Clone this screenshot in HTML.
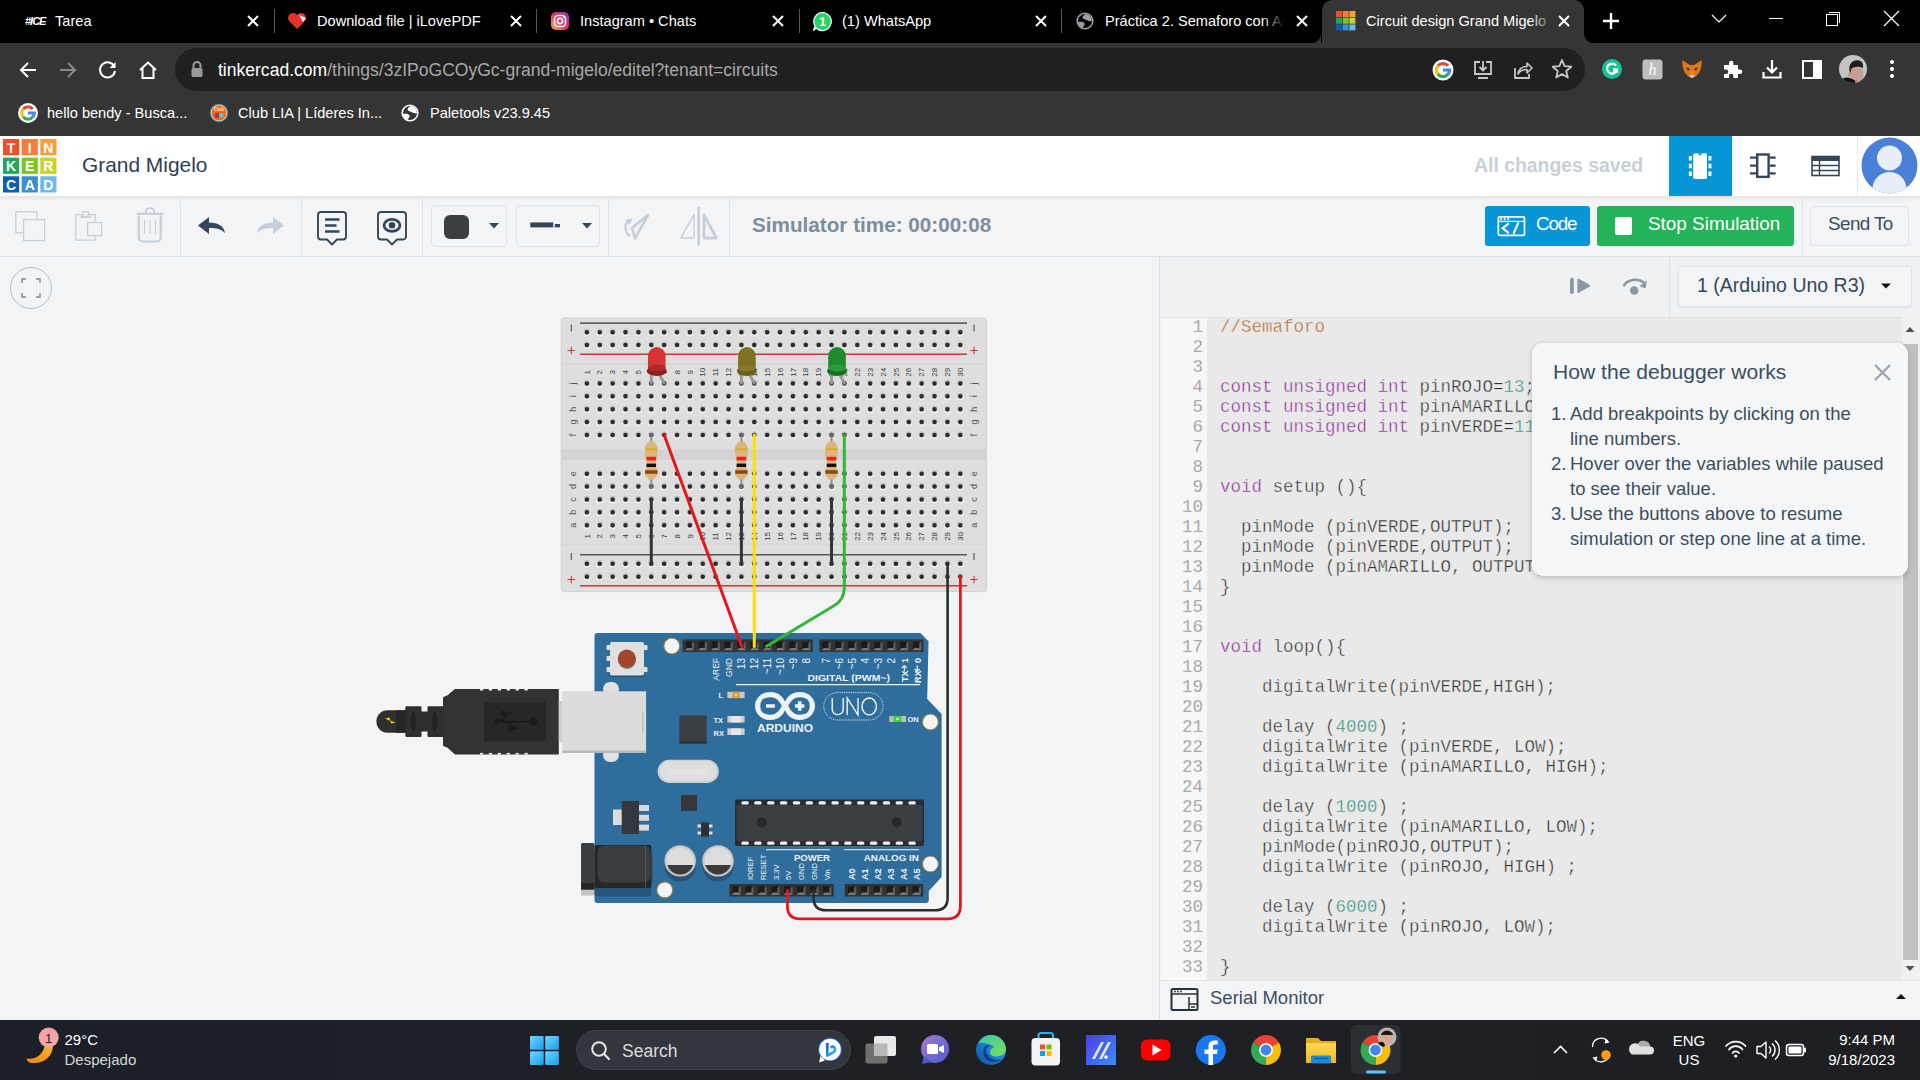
<!DOCTYPE html><html><head><meta charset="utf-8"><style>
*{box-sizing:border-box;margin:0;padding:0}
html,body{width:1920px;height:1080px;overflow:hidden;background:#f3f4f6;font-family:"Liberation Sans",sans-serif}
.a{position:absolute}
.tab{position:absolute;top:0;height:42px;color:#fff;font-size:14.6px;line-height:42px;white-space:nowrap;overflow:hidden}
.x{position:absolute;top:13px;width:16px;height:16px}
.sep{position:absolute;top:9px;width:1px;height:24px;background:#5a5a5a}
.mono{font-family:"Liberation Mono",monospace;-webkit-text-stroke:0.4px #e9e9e9}
</style></head><body>
<div class="a" style="left:0;top:0;width:1920px;height:43px;background:#000"></div>
<div class="a" style="left:0;top:43px;width:1920px;height:93px;background:#353535"></div>
<div class="tab" style="left:55px;width:184px">Tarea</div>
<div class="x" style="left:245px"><svg width="16" height="16" viewBox="0 0 16 16"><path d="M3 3L13 13M13 3L3 13" stroke="#fff" stroke-width="2"/></svg></div>
<div class="sep" style="left:274px"></div>
<div class="tab" style="left:317px;width:185px">Download file | iLovePDF</div>
<div class="x" style="left:508px"><svg width="16" height="16" viewBox="0 0 16 16"><path d="M3 3L13 13M13 3L3 13" stroke="#fff" stroke-width="2"/></svg></div>
<div class="sep" style="left:536px"></div>
<div class="tab" style="left:580px;width:184px">Instagram • Chats</div>
<div class="x" style="left:770px"><svg width="16" height="16" viewBox="0 0 16 16"><path d="M3 3L13 13M13 3L3 13" stroke="#fff" stroke-width="2"/></svg></div>
<div class="sep" style="left:799px"></div>
<div class="tab" style="left:842px;width:185px">(1) WhatsApp</div>
<div class="x" style="left:1033px"><svg width="16" height="16" viewBox="0 0 16 16"><path d="M3 3L13 13M13 3L3 13" stroke="#fff" stroke-width="2"/></svg></div>
<div class="sep" style="left:1061px"></div>
<div class="tab" style="left:1105px;width:183px">Práctica 2. Semaforo con Ar</div>
<div class="x" style="left:1294px"><svg width="16" height="16" viewBox="0 0 16 16"><path d="M3 3L13 13M13 3L3 13" stroke="#fff" stroke-width="2"/></svg></div>
<div class="a" style="left:1322px;top:0;width:262px;height:43px;background:#353535;border-radius:10px 10px 0 0"></div>
<div class="tab" style="left:1366px;width:180px">Circuit design Grand Migelo</div>
<div class="x" style="left:1556px"><svg width="16" height="16" viewBox="0 0 16 16"><path d="M3 3L13 13M13 3L3 13" stroke="#fff" stroke-width="2"/></svg></div>
<svg class="a" style="left:1601px;top:11px" width="20" height="20"><path d="M10 2V18M2 10H18" stroke="#fff" stroke-width="2.4"/></svg>
<svg class="a" style="left:1709px;top:10px" width="20" height="16"><path d="M3 5L10 12L17 5" stroke="#fff" fill="none" stroke-width="1.2"/></svg>
<div class="a" style="left:1769px;top:18px;width:14px;height:1px;background:#fff"></div>
<svg class="a" style="left:1825px;top:11px" width="16" height="16"><rect x="1.5" y="3.5" width="11" height="11" stroke="#fff" fill="none"/><path d="M4 1.5H14.5V12" stroke="#fff" fill="none"/></svg>
<svg class="a" style="left:1883px;top:10px" width="17" height="17"><path d="M1 1L16 16M16 1L1 16" stroke="#fff" stroke-width="1.2"/></svg>
<svg class="a" style="left:17px;top:59px" width="22" height="22"><path d="M19 11H4M11 4L4 11L11 18" stroke="#fff" fill="none" stroke-width="2"/></svg>
<svg class="a" style="left:57px;top:59px" width="22" height="22"><path d="M3 11H18M11 4L18 11L11 18" stroke="#8a8a8a" fill="none" stroke-width="2"/></svg>
<svg class="a" style="left:97px;top:59px" width="22" height="22"><path d="M17.5 8A7.5 7.5 0 1 0 18 12" stroke="#fff" fill="none" stroke-width="2"/><path d="M18.5 3V9H12.5Z" fill="#fff"/></svg>
<svg class="a" style="left:137px;top:59px" width="22" height="22"><path d="M3 11L11 3.5L19 11M5.5 9V19H16.5V9" stroke="#fff" fill="none" stroke-width="2"/></svg>
<div class="a" style="left:175px;top:48px;width:1410px;height:43px;background:#202020;border-radius:22px"></div>
<svg class="a" style="left:190px;top:60px" width="14" height="18"><path d="M3.5 8V5.5A3.5 3.5 0 0 1 10.5 5.5V8" stroke="#9a9a9a" stroke-width="2" fill="none"/><rect x="1.5" y="8" width="11" height="9" rx="1.5" fill="#9a9a9a"/></svg>
<div class="a" style="left:218px;top:58px;font-size:17.55px;line-height:24px;color:#fff;white-space:nowrap">tinkercad.com<span style="color:#a8a8a8">/things/3zIPoGCOyGc-grand-migelo/editel?tenant=circuits</span></div>
<div class="a" style="left:47px;top:103px;font-size:14.6px;line-height:20px;color:#fff;white-space:nowrap">hello bendy - Busca...</div>
<div class="a" style="left:238px;top:103px;font-size:14.6px;line-height:20px;color:#fff;white-space:nowrap">Club LIA | Líderes In...</div>
<div class="a" style="left:430px;top:103px;font-size:14.6px;line-height:20px;color:#fff;white-space:nowrap">Paletools v23.9.45</div>
<svg class="a" style="left:25px;top:13px" width="22" height="16"><text x="0" y="12" font-family="Liberation Sans" font-style="italic" font-weight="bold" font-size="11" fill="#fff" letter-spacing="-1">#ICE</text></svg>
<svg class="a" style="left:287px;top:11px" width="22" height="20"><path d="M10 18L2 10A4.5 4.5 0 0 1 10 4A4.5 4.5 0 0 1 18 10Z" fill="#e5322d"/><path d="M12 4L19 7L16 11Z" fill="#fff" opacity=".9"/></svg>
<svg class="a" style="left:550px;top:11px" width="20" height="20"><defs><linearGradient id="ig" x1="0" y1="1" x2="1" y2="0"><stop offset="0" stop-color="#fdb43a"/><stop offset=".5" stop-color="#e1306c"/><stop offset="1" stop-color="#833ab4"/></linearGradient></defs><rect x="1" y="1" width="18" height="18" rx="5" fill="url(#ig)"/><rect x="4.5" y="4.5" width="11" height="11" rx="3.5" fill="none" stroke="#fff" stroke-width="1.6"/><circle cx="10" cy="10" r="2.6" fill="none" stroke="#fff" stroke-width="1.6"/><circle cx="14" cy="6" r=".9" fill="#fff"/></svg>
<svg class="a" style="left:812px;top:11px" width="21" height="21"><path d="M10.5 1.5A9 9 0 1 1 4 17L1.5 19.5L3 15A9 9 0 0 1 10.5 1.5Z" fill="#25d366" stroke="#fff" stroke-width="1.2"/><text x="10.5" y="15" text-anchor="middle" font-family="Liberation Sans" font-weight="bold" font-size="12" fill="#fff">1</text></svg>
<svg class="a" style="left:1075px;top:11px" width="20" height="20"><circle cx="10" cy="10" r="8.6" fill="#9aa0a6"/><circle cx="10" cy="10" r="7" fill="#000"/><path d="M10.5 3C8 4.5 7 6 8 7.5C9 8.5 11 8.5 12.5 9.5C13.5 10.3 15 10.6 17 10A7 7 0 0 0 10.5 3Z" fill="#9aa0a6"/><path d="M3 11C5 10.5 8 10.5 9.3 12C10 13 9.5 14.5 8.3 15.5C7.5 16.2 7.8 16.8 7.5 17A7 7 0 0 1 3 11Z" fill="#9aa0a6"/></svg>
<svg class="a" style="left:1336px;top:11px" width="20" height="20"><rect x="0.0" y="0.0" width="6" height="6" fill="#f04e23"/><rect x="6.7" y="0.0" width="6" height="6" fill="#f57d38"/><rect x="13.4" y="0.0" width="6" height="6" fill="#f99d3a"/><rect x="0.0" y="6.7" width="6" height="6" fill="#1fa95a"/><rect x="6.7" y="6.7" width="6" height="6" fill="#7ec61f"/><rect x="13.4" y="6.7" width="6" height="6" fill="#c9d22c"/><rect x="0.0" y="13.4" width="6" height="6" fill="#0b5fb0"/><rect x="6.7" y="13.4" width="6" height="6" fill="#3b8ed0"/><rect x="13.4" y="13.4" width="6" height="6" fill="#6cb8e6"/></svg>
<div class="a" style="left:1530px;top:0;width:24px;height:42px;background:linear-gradient(90deg,rgba(53,53,53,0),#353535)"></div>
<svg class="a" style="left:1300px;top:30px" width="310" height="13" viewBox="1300 30 310 13"><path d="M1312 43A9 9 0 0 0 1321 34V43Z" fill="#353535"/><path d="M1584 34A9 9 0 0 0 1593 43H1584Z" fill="#353535"/></svg>
<div class="a" style="left:1262px;top:0;width:26px;height:42px;background:linear-gradient(90deg,rgba(0,0,0,0),#000 85%)"></div>
<svg class="a" style="left:1432px;top:59px" width="22" height="22"><circle cx="11" cy="11" r="10.5" fill="#fff"/><path d="M6.01 6.82A6.51 6.51 0 0 1 15.99 6.82" stroke="#ea4335" stroke-width="3.15" fill="none"/><path d="M6.01 15.18A6.51 6.51 0 0 1 6.16 6.64" stroke="#fbbc05" stroke-width="3.15" fill="none"/><path d="M16.13 15.01A6.51 6.51 0 0 1 5.87 15.01" stroke="#34a853" stroke-width="3.15" fill="none"/><path d="M17.51 10.77A6.51 6.51 0 0 1 15.99 15.18" stroke="#4285f4" stroke-width="3.15" fill="none"/><rect x="11.00" y="9.43" width="8.08" height="3.15" fill="#4285f4"/></svg>
<svg class="a" style="left:1472px;top:59px" width="22" height="22"><path d="M8 3H3V15H19V3H14" stroke="#c8c8c8" stroke-width="1.8" fill="none"/><path d="M11 2V11M7.5 8L11 11.5L14.5 8" stroke="#c8c8c8" stroke-width="1.8" fill="none"/><path d="M6 19H16" stroke="#c8c8c8" stroke-width="2"/></svg>
<svg class="a" style="left:1512px;top:59px" width="22" height="22"><path d="M3 9V19H17V15" stroke="#c8c8c8" stroke-width="1.8" fill="none"/><path d="M6 15C7 9 11 7.5 15 7.5V4L20 9L15 14V10.5C11 10.5 8 11.5 6 15Z" stroke="#c8c8c8" stroke-width="1.6" fill="none" stroke-linejoin="round"/></svg>
<svg class="a" style="left:1551px;top:58px" width="22" height="22"><path d="M11 2L13.6 8.2L20.3 8.7L15.2 13L16.8 19.6L11 16L5.2 19.6L6.8 13L1.7 8.7L8.4 8.2Z" stroke="#c8c8c8" stroke-width="1.8" fill="none" stroke-linejoin="round"/></svg>
<svg class="a" style="left:1601px;top:58px" width="22" height="22"><circle cx="11" cy="11" r="10" fill="#15c39a"/><path d="M15 7.5A5 5 0 1 0 16 11.5H12" stroke="#fff" stroke-width="2.2" fill="none"/><path d="M13 10V14H17" stroke="#fff" stroke-width="2" fill="none"/></svg>
<svg class="a" style="left:1642px;top:59px" width="21" height="21"><rect x="0.5" y="0.5" width="20" height="20" rx="3" fill="#bdbdbd"/><text x="10.5" y="16" text-anchor="middle" font-family="Liberation Serif" font-style="italic" font-size="16" fill="#fff">h</text></svg>
<svg class="a" style="left:1681px;top:58px" width="22" height="22"><path d="M1 2L9 7H13L21 2L20 10L18 15L14 19H8L4 15L2 10Z" fill="#e2761b"/><path d="M8 12L11 19L14 12L11 14Z" fill="#f6851b"/><path d="M5 9L9 11L7 13ZM17 9L13 11L15 13Z" fill="#233447"/><path d="M8 17H14L12 20H10Z" fill="#d7c1b3"/></svg>
<svg class="a" style="left:1721px;top:58px" width="22" height="22"><path d="M3 7H8V5A2.2 2.2 0 0 1 12.4 5V7H17V11.5H19A2.2 2.2 0 0 1 19 16H17V20H12.4V18A2.2 2.2 0 0 0 8 18V20H3V16H5A2.2 2.2 0 0 0 5 11.5H3Z" fill="#fff"/></svg>
<svg class="a" style="left:1761px;top:58px" width="22" height="22"><path d="M11 2V14M6 9.5L11 14.5L16 9.5" stroke="#fff" stroke-width="2.2" fill="none"/><path d="M2.5 14V19.5H19.5V14" stroke="#fff" stroke-width="2.2" fill="none"/></svg>
<svg class="a" style="left:1802px;top:60px" width="20" height="19"><rect x="1" y="1" width="18" height="17" stroke="#fff" stroke-width="2" fill="none"/><rect x="11" y="1" width="8" height="17" fill="#fff"/></svg>
<svg class="a" style="left:1839px;top:55px" width="28" height="28"><defs><clipPath id="av"><circle cx="14" cy="14" r="14"/></clipPath></defs><g clip-path="url(#av)"><rect width="28" height="28" fill="#c4c4c2"/><ellipse cx="17.5" cy="18.5" rx="7" ry="8.2" fill="#c99f95"/><ellipse cx="10.8" cy="19.5" rx="1.8" ry="2.6" fill="#c39888"/><path d="M10.5 16C9.5 8 14 5 18.5 5.2C23 5.4 24.5 8.5 24 13C21 11 15 11.5 12.5 13.5L11.5 18Z" fill="#1c1c1c"/><path d="M2 25C5 21.5 10 21.5 16 25.5L17 30H2ZM21 24C24 22.5 28 24 29 27V30H20Z" fill="#131313"/><rect x="16.5" y="25.5" width="4" height="5" fill="#e0426c"/><ellipse cx="21.3" cy="26.5" rx="3.8" ry="3.4" fill="#c79f8f"/></g></svg>
<svg class="a" style="left:1887px;top:58px" width="10" height="22"><circle cx="5" cy="4" r="2" fill="#fff"/><circle cx="5" cy="11" r="2" fill="#fff"/><circle cx="5" cy="18" r="2" fill="#fff"/></svg>
<svg class="a" style="left:18px;top:103px" width="20" height="20"><circle cx="10" cy="10" r="10" fill="#fff"/><path d="M5.25 6.01A6.2 6.2 0 0 1 14.75 6.01" stroke="#ea4335" stroke-width="3.0" fill="none"/><path d="M5.25 13.99A6.2 6.2 0 0 1 5.39 5.85" stroke="#fbbc05" stroke-width="3.0" fill="none"/><path d="M14.89 13.82A6.2 6.2 0 0 1 5.11 13.82" stroke="#34a853" stroke-width="3.0" fill="none"/><path d="M16.20 9.78A6.2 6.2 0 0 1 14.75 13.99" stroke="#4285f4" stroke-width="3.0" fill="none"/><rect x="10.00" y="8.50" width="7.70" height="3.00" fill="#4285f4"/></svg>
<svg class="a" style="left:209px;top:103px" width="20" height="20"><circle cx="10" cy="10" r="9.6" fill="#1f5fb0"/><circle cx="10" cy="10" r="8.4" fill="#f6d36a"/><circle cx="10" cy="10" r="7.4" fill="#f06a1a"/><text x="10" y="8.2" text-anchor="middle" font-size="4.6" font-weight="bold" font-family="Liberation Sans" fill="#ffe0d0">Club</text><rect x="6.3" y="10" width="1.8" height="5" fill="#7b2a8f"/><rect x="8.6" y="9.6" width="1.4" height="5.2" fill="#e01010"/><circle cx="12.2" cy="12.6" r="2.3" fill="#4cc8ef"/></svg>
<svg class="a" style="left:400px;top:103px" width="20" height="20"><circle cx="10" cy="10" r="8.6" fill="#fff"/><circle cx="10" cy="10" r="7" fill="#353535"/><path d="M10.5 3C8 4.5 7 6 8 7.5C9 8.5 11 8.5 12.5 9.5C13.5 10.3 15 10.6 17 10A7 7 0 0 0 10.5 3Z" fill="#fff"/><path d="M3 11C5 10.5 8 10.5 9.3 12C10 13 9.5 14.5 8.3 15.5C7.5 16.2 7.8 16.8 7.5 17A7 7 0 0 1 3 11Z" fill="#fff"/></svg>
<div class="a" style="left:0;top:136px;width:1920px;height:60px;background:#fff"></div>
<div class="a" style="left:0;top:196px;width:1920px;height:61px;background:#f3f4f6;border-bottom:1px solid #dfe3e8"></div>
<div class="a" style="left:0;top:196px;width:1920px;height:5px;background:linear-gradient(rgba(0,0,0,.07),rgba(0,0,0,0))"></div>
<div class="a" style="left:1159px;top:257px;width:761px;height:763px;background:#f0f1f3;border-left:1px solid #dcdfe4"></div>
<div class="a" style="left:1160px;top:257px;width:760px;height:61px;background:#f0f1f3"></div>
<div class="a" style="left:1669px;top:257px;width:1px;height:61px;background:#dfe3e8"></div>
<svg class="a" style="left:1560px;top:265px" width="100" height="40" viewBox="1560 265 100 40"><rect x="1570" y="277.7" width="3.8" height="16.2" rx="1.9" fill="#8c99a5"/><path d="M1578.5 278.5L1589.5 284.8A1.2 1.2 0 0 1 1589.5 286.8L1578.5 293.1A1 1 0 0 1 1577.4 292.2V279.4A1 1 0 0 1 1578.5 278.5Z" fill="#8c99a5"/><path d="M1623.5 286.2A13 11 0 0 1 1644 282.5" fill="none" stroke="#8c99a5" stroke-width="2.6"/><path d="M1646.8 280.5L1645.6 288.6L1639.5 286.2Z" fill="#8c99a5"/><circle cx="1634.2" cy="290.5" r="4.3" fill="#8c99a5"/></svg>
<div class="a" style="left:1678px;top:266px;width:234px;height:41px;background:#f3f4f6;border:1px solid #e1e5ea;border-radius:3px;box-shadow:0 1px 2px rgba(0,0,0,.06)"></div>
<div class="a" style="left:1697px;top:272px;font-size:19.5px;line-height:26px;color:#34475a;white-space:nowrap">1 (Arduino Uno R3)</div>
<svg class="a" style="left:1880px;top:282px" width="12" height="8"><path d="M1 1.5H11L6 6.5Z" fill="#111"/></svg>
<div class="a" style="left:1160px;top:317px;width:742px;height:1px;background:#e0e3e7"></div>
<div class="a" style="left:1161px;top:318px;width:46px;height:662px;background:#f7f7f7"></div>
<div class="a" style="left:1207px;top:318px;width:695px;height:662px;background:#e9e9e9"></div>
<div class="a" style="left:1902px;top:318px;width:18px;height:662px;background:#f1f1f1"></div>
<div class="a" style="left:1903px;top:344px;width:15px;height:616px;background:#c1c1c1"></div>
<svg class="a" style="left:1904px;top:324px" width="12" height="10"><path d="M1.5 8H10.5L6 3Z" fill="#505050"/></svg>
<svg class="a" style="left:1904px;top:964px" width="12" height="10"><path d="M1.5 2H10.5L6 7Z" fill="#505050"/></svg>
<div class="a" style="left:1160px;top:980px;width:760px;height:40px;background:#f3f4f6;border-top:1px solid #e4e7eb"></div>
<svg class="a" style="left:1170px;top:987px" width="30" height="26"><rect x="1.5" y="2" width="26" height="21" rx="1.5" fill="none" stroke="#26313b" stroke-width="2"/><path d="M1.5 7H27.5" stroke="#26313b" stroke-width="1.5"/><circle cx="5" cy="4.5" r=".9" fill="#26313b"/><circle cx="8" cy="4.5" r=".9" fill="#26313b"/><circle cx="11" cy="4.5" r=".9" fill="#26313b"/><path d="M19 10V23M19 17H27.5M21 20H25" stroke="#26313b" stroke-width="1.5"/></svg>
<div class="a" style="left:1210px;top:985px;font-size:18.5px;line-height:26px;color:#3c4d5e;white-space:nowrap">Serial Monitor</div>
<svg class="a" style="left:1894px;top:991px" width="14" height="10"><path d="M2 8H12L7 3Z" fill="#111"/></svg>
<div class="a mono" style="left:1160px;top:317px;width:43px;text-align:right;font-size:17.5px;line-height:20px;color:#8c8c8c">1</div>
<div class="a mono" style="left:1220px;top:317px;font-size:17.5px;line-height:20px;white-space:pre"><span style="color:#b5651d">//Semaforo</span></div>
<div class="a mono" style="left:1160px;top:337px;width:43px;text-align:right;font-size:17.5px;line-height:20px;color:#8c8c8c">2</div>
<div class="a mono" style="left:1160px;top:357px;width:43px;text-align:right;font-size:17.5px;line-height:20px;color:#8c8c8c">3</div>
<div class="a mono" style="left:1160px;top:377px;width:43px;text-align:right;font-size:17.5px;line-height:20px;color:#8c8c8c">4</div>
<div class="a mono" style="left:1220px;top:377px;font-size:17.5px;line-height:20px;white-space:pre"><span style="color:#8a2b9a">const</span><span style="color:#2e2e2e"> </span><span style="color:#8a2b9a">unsigned</span><span style="color:#2e2e2e"> </span><span style="color:#8a2b9a">int</span><span style="color:#2e2e2e"> pinROJO=</span><span style="color:#2a8f7c">13</span><span style="color:#2e2e2e">;</span></div>
<div class="a mono" style="left:1160px;top:397px;width:43px;text-align:right;font-size:17.5px;line-height:20px;color:#8c8c8c">5</div>
<div class="a mono" style="left:1220px;top:397px;font-size:17.5px;line-height:20px;white-space:pre"><span style="color:#8a2b9a">const</span><span style="color:#2e2e2e"> </span><span style="color:#8a2b9a">unsigned</span><span style="color:#2e2e2e"> </span><span style="color:#8a2b9a">int</span><span style="color:#2e2e2e"> pinAMARILLO=</span><span style="color:#2a8f7c">12</span><span style="color:#2e2e2e">;</span></div>
<div class="a mono" style="left:1160px;top:417px;width:43px;text-align:right;font-size:17.5px;line-height:20px;color:#8c8c8c">6</div>
<div class="a mono" style="left:1220px;top:417px;font-size:17.5px;line-height:20px;white-space:pre"><span style="color:#8a2b9a">const</span><span style="color:#2e2e2e"> </span><span style="color:#8a2b9a">unsigned</span><span style="color:#2e2e2e"> </span><span style="color:#8a2b9a">int</span><span style="color:#2e2e2e"> pinVERDE=</span><span style="color:#2a8f7c">11</span><span style="color:#2e2e2e">;</span></div>
<div class="a mono" style="left:1160px;top:437px;width:43px;text-align:right;font-size:17.5px;line-height:20px;color:#8c8c8c">7</div>
<div class="a mono" style="left:1160px;top:457px;width:43px;text-align:right;font-size:17.5px;line-height:20px;color:#8c8c8c">8</div>
<div class="a mono" style="left:1160px;top:477px;width:43px;text-align:right;font-size:17.5px;line-height:20px;color:#8c8c8c">9</div>
<div class="a mono" style="left:1220px;top:477px;font-size:17.5px;line-height:20px;white-space:pre"><span style="color:#8a2b9a">void</span><span style="color:#2e2e2e"> setup (){</span></div>
<div class="a mono" style="left:1160px;top:497px;width:43px;text-align:right;font-size:17.5px;line-height:20px;color:#8c8c8c">10</div>
<div class="a mono" style="left:1160px;top:517px;width:43px;text-align:right;font-size:17.5px;line-height:20px;color:#8c8c8c">11</div>
<div class="a mono" style="left:1220px;top:517px;font-size:17.5px;line-height:20px;white-space:pre"><span style="color:#2e2e2e">  pinMode (pinVERDE,OUTPUT);</span></div>
<div class="a mono" style="left:1160px;top:537px;width:43px;text-align:right;font-size:17.5px;line-height:20px;color:#8c8c8c">12</div>
<div class="a mono" style="left:1220px;top:537px;font-size:17.5px;line-height:20px;white-space:pre"><span style="color:#2e2e2e">  pinMode (pinVERDE,OUTPUT);</span></div>
<div class="a mono" style="left:1160px;top:557px;width:43px;text-align:right;font-size:17.5px;line-height:20px;color:#8c8c8c">13</div>
<div class="a mono" style="left:1220px;top:557px;font-size:17.5px;line-height:20px;white-space:pre"><span style="color:#2e2e2e">  pinMode (pinAMARILLO, OUTPUT);</span></div>
<div class="a mono" style="left:1160px;top:577px;width:43px;text-align:right;font-size:17.5px;line-height:20px;color:#8c8c8c">14</div>
<div class="a mono" style="left:1220px;top:577px;font-size:17.5px;line-height:20px;white-space:pre"><span style="color:#2e2e2e">}</span></div>
<div class="a mono" style="left:1160px;top:597px;width:43px;text-align:right;font-size:17.5px;line-height:20px;color:#8c8c8c">15</div>
<div class="a mono" style="left:1160px;top:617px;width:43px;text-align:right;font-size:17.5px;line-height:20px;color:#8c8c8c">16</div>
<div class="a mono" style="left:1160px;top:637px;width:43px;text-align:right;font-size:17.5px;line-height:20px;color:#8c8c8c">17</div>
<div class="a mono" style="left:1220px;top:637px;font-size:17.5px;line-height:20px;white-space:pre"><span style="color:#8a2b9a">void</span><span style="color:#2e2e2e"> loop(){</span></div>
<div class="a mono" style="left:1160px;top:657px;width:43px;text-align:right;font-size:17.5px;line-height:20px;color:#8c8c8c">18</div>
<div class="a mono" style="left:1160px;top:677px;width:43px;text-align:right;font-size:17.5px;line-height:20px;color:#8c8c8c">19</div>
<div class="a mono" style="left:1220px;top:677px;font-size:17.5px;line-height:20px;white-space:pre"><span style="color:#2e2e2e">    digitalWrite(pinVERDE,HIGH);</span></div>
<div class="a mono" style="left:1160px;top:697px;width:43px;text-align:right;font-size:17.5px;line-height:20px;color:#8c8c8c">20</div>
<div class="a mono" style="left:1160px;top:717px;width:43px;text-align:right;font-size:17.5px;line-height:20px;color:#8c8c8c">21</div>
<div class="a mono" style="left:1220px;top:717px;font-size:17.5px;line-height:20px;white-space:pre"><span style="color:#2e2e2e">    delay (</span><span style="color:#2a8f7c">4000</span><span style="color:#2e2e2e">) ;</span></div>
<div class="a mono" style="left:1160px;top:737px;width:43px;text-align:right;font-size:17.5px;line-height:20px;color:#8c8c8c">22</div>
<div class="a mono" style="left:1220px;top:737px;font-size:17.5px;line-height:20px;white-space:pre"><span style="color:#2e2e2e">    digitalWrite (pinVERDE, LOW);</span></div>
<div class="a mono" style="left:1160px;top:757px;width:43px;text-align:right;font-size:17.5px;line-height:20px;color:#8c8c8c">23</div>
<div class="a mono" style="left:1220px;top:757px;font-size:17.5px;line-height:20px;white-space:pre"><span style="color:#2e2e2e">    digitalWrite (pinAMARILLO, HIGH);</span></div>
<div class="a mono" style="left:1160px;top:777px;width:43px;text-align:right;font-size:17.5px;line-height:20px;color:#8c8c8c">24</div>
<div class="a mono" style="left:1160px;top:797px;width:43px;text-align:right;font-size:17.5px;line-height:20px;color:#8c8c8c">25</div>
<div class="a mono" style="left:1220px;top:797px;font-size:17.5px;line-height:20px;white-space:pre"><span style="color:#2e2e2e">    delay (</span><span style="color:#2a8f7c">1000</span><span style="color:#2e2e2e">) ;</span></div>
<div class="a mono" style="left:1160px;top:817px;width:43px;text-align:right;font-size:17.5px;line-height:20px;color:#8c8c8c">26</div>
<div class="a mono" style="left:1220px;top:817px;font-size:17.5px;line-height:20px;white-space:pre"><span style="color:#2e2e2e">    digitalWrite (pinAMARILLO, LOW);</span></div>
<div class="a mono" style="left:1160px;top:837px;width:43px;text-align:right;font-size:17.5px;line-height:20px;color:#8c8c8c">27</div>
<div class="a mono" style="left:1220px;top:837px;font-size:17.5px;line-height:20px;white-space:pre"><span style="color:#2e2e2e">    pinMode(pinROJO,OUTPUT);</span></div>
<div class="a mono" style="left:1160px;top:857px;width:43px;text-align:right;font-size:17.5px;line-height:20px;color:#8c8c8c">28</div>
<div class="a mono" style="left:1220px;top:857px;font-size:17.5px;line-height:20px;white-space:pre"><span style="color:#2e2e2e">    digitalWrite (pinROJO, HIGH) ;</span></div>
<div class="a mono" style="left:1160px;top:877px;width:43px;text-align:right;font-size:17.5px;line-height:20px;color:#8c8c8c">29</div>
<div class="a mono" style="left:1160px;top:897px;width:43px;text-align:right;font-size:17.5px;line-height:20px;color:#8c8c8c">30</div>
<div class="a mono" style="left:1220px;top:897px;font-size:17.5px;line-height:20px;white-space:pre"><span style="color:#2e2e2e">    delay (</span><span style="color:#2a8f7c">6000</span><span style="color:#2e2e2e">) ;</span></div>
<div class="a mono" style="left:1160px;top:917px;width:43px;text-align:right;font-size:17.5px;line-height:20px;color:#8c8c8c">31</div>
<div class="a mono" style="left:1220px;top:917px;font-size:17.5px;line-height:20px;white-space:pre"><span style="color:#2e2e2e">    digitalWrite (pinROJO, LOW);</span></div>
<div class="a mono" style="left:1160px;top:937px;width:43px;text-align:right;font-size:17.5px;line-height:20px;color:#8c8c8c">32</div>
<div class="a mono" style="left:1160px;top:957px;width:43px;text-align:right;font-size:17.5px;line-height:20px;color:#8c8c8c">33</div>
<div class="a mono" style="left:1220px;top:957px;font-size:17.5px;line-height:20px;white-space:pre"><span style="color:#2e2e2e">}</span></div>
<div class="a" style="left:1532px;top:343px;width:376px;height:233px;background:#f5f6f8;border-radius:11px;box-shadow:0 2px 6px rgba(0,0,0,.18)"></div>
<div class="a" style="left:1553px;top:358px;font-size:21.1px;line-height:28px;color:#3b4f5c;white-space:nowrap">How the debugger works</div>
<svg class="a" style="left:1873px;top:363px" width="19" height="19"><path d="M2 2L17 17M17 2L2 17" stroke="#98a3ad" stroke-width="2.2"/></svg>
<div class="a" style="left:1551px;top:401px;font-size:18.5px;line-height:25px;color:#3b4f5c;white-space:nowrap">1.</div>
<div class="a" style="left:1570px;top:401px;font-size:18.5px;line-height:25px;color:#3b4f5c;white-space:nowrap">Add breakpoints by clicking on the<br>line numbers.</div>
<div class="a" style="left:1551px;top:451px;font-size:18.5px;line-height:25px;color:#3b4f5c;white-space:nowrap">2.</div>
<div class="a" style="left:1570px;top:451px;font-size:18.5px;line-height:25px;color:#3b4f5c;white-space:nowrap">Hover over the variables while paused<br>to see their value.</div>
<div class="a" style="left:1551px;top:501px;font-size:18.5px;line-height:25px;color:#3b4f5c;white-space:nowrap">3.</div>
<div class="a" style="left:1570px;top:501px;font-size:18.5px;line-height:25px;color:#3b4f5c;white-space:nowrap">Use the buttons above to resume<br>simulation or step one line at a time.</div>
<svg class="a" style="left:3px;top:139px" width="55" height="55"><rect x="0.00" y="0.00" width="16.2" height="16.2" fill="#f04e23"/><text x="8.10" y="13.60" text-anchor="middle" font-family="Liberation Sans" font-weight="bold" font-size="14" fill="#fff">T</text><rect x="18.65" y="0.00" width="16.2" height="16.2" fill="#f57d38"/><text x="26.75" y="13.60" text-anchor="middle" font-family="Liberation Sans" font-weight="bold" font-size="14" fill="#fff">I</text><rect x="37.30" y="0.00" width="16.2" height="16.2" fill="#f99d3a"/><text x="45.40" y="13.60" text-anchor="middle" font-family="Liberation Sans" font-weight="bold" font-size="14" fill="#fff">N</text><rect x="0.00" y="18.65" width="16.2" height="16.2" fill="#1fa95a"/><text x="8.10" y="32.25" text-anchor="middle" font-family="Liberation Sans" font-weight="bold" font-size="14" fill="#fff">K</text><rect x="18.65" y="18.65" width="16.2" height="16.2" fill="#7ec61f"/><text x="26.75" y="32.25" text-anchor="middle" font-family="Liberation Sans" font-weight="bold" font-size="14" fill="#fff">E</text><rect x="37.30" y="18.65" width="16.2" height="16.2" fill="#c9d22c"/><text x="45.40" y="32.25" text-anchor="middle" font-family="Liberation Sans" font-weight="bold" font-size="14" fill="#fff">R</text><rect x="0.00" y="37.30" width="16.2" height="16.2" fill="#0b5fb0"/><text x="8.10" y="50.90" text-anchor="middle" font-family="Liberation Sans" font-weight="bold" font-size="14" fill="#fff">C</text><rect x="18.65" y="37.30" width="16.2" height="16.2" fill="#3b8ed0"/><text x="26.75" y="50.90" text-anchor="middle" font-family="Liberation Sans" font-weight="bold" font-size="14" fill="#fff">A</text><rect x="37.30" y="37.30" width="16.2" height="16.2" fill="#6cb8e6"/><text x="45.40" y="50.90" text-anchor="middle" font-family="Liberation Sans" font-weight="bold" font-size="14" fill="#fff">D</text></svg>
<div class="a" style="left:82px;top:151px;font-size:20.9px;line-height:28px;color:#2d3e50;white-space:nowrap">Grand Migelo</div>
<div class="a" style="left:1474px;top:152px;font-size:19.4px;line-height:26px;color:#c7d0d9;white-space:nowrap;font-weight:bold">All changes saved</div>
<div class="a" style="left:1669px;top:136px;width:63px;height:60px;background:#0696d7"></div>
<svg class="a" style="left:1680px;top:148px" width="40" height="36" viewBox="1680 148 40 36"><rect x="1693.2" y="153.3" width="13.8" height="25.6" rx="1.5" fill="#fff"/><path d="M1697.5 153.3H1702.7L1700.1 155.8Z" fill="#0696d7"/><path d="M1688.9 156H1691.8V160.6H1688.9ZM1688.9 163.8H1691.8V168.2H1688.9ZM1688.9 171.6H1691.8V176H1688.9ZM1708.5 156H1711.4V160.6H1708.5ZM1708.5 163.8H1711.4V168.2H1708.5ZM1708.5 171.6H1711.4V176H1708.5Z" fill="#fff"/></svg>
<svg class="a" style="left:1745px;top:148px" width="36" height="36" viewBox="1745 148 36 36"><rect x="1757.2" y="154.5" width="11.4" height="22.4" fill="none" stroke="#34475a" stroke-width="2.4"/><path d="M1750 157.7H1756M1750 165.7H1756M1750 173.3H1756M1769.8 157.7H1775.6M1769.8 165.7H1775.6M1769.8 173.3H1775.6" stroke="#34475a" stroke-width="2.3"/></svg>
<svg class="a" style="left:1811px;top:155px" width="30" height="22"><rect x="1" y="1.5" width="27" height="19" fill="none" stroke="#34475a" stroke-width="1.6"/><rect x="1" y="1" width="27" height="5" fill="#34475a"/><path d="M1 10.5H28M1 15.5H28M8.5 6V20.5" stroke="#34475a" stroke-width="1.4"/></svg>
<div class="a" style="left:1857px;top:136px;width:1px;height:60px;background:#e6e9ed"></div>
<svg class="a" style="left:1861px;top:137px" width="57" height="57"><defs><clipPath id="avc"><circle cx="28.5" cy="28.5" r="28"/></clipPath></defs><circle cx="28.5" cy="28.5" r="28" fill="#4a80d6"/><g clip-path="url(#avc)"><circle cx="28.5" cy="21" r="12.5" fill="#e8eef8"/><ellipse cx="28.5" cy="52" rx="17" ry="17" fill="#e8eef8"/></g></svg>
<svg class="a" style="left:0;top:196px" width="300" height="60" viewBox="0 196 300 60"><rect x="15.8" y="211.8" width="21" height="21" fill="none" stroke="#c5cfd9" stroke-width="1.3"/><rect x="23.6" y="219.6" width="21" height="21" fill="#f3f4f6" stroke="#c5cfd9" stroke-width="1.3"/><path d="M82.5 214.6H75.8V240.2H95V214.6H88.5" fill="none" stroke="#c5cfd9" stroke-width="1.3"/><rect x="82.8" y="211.8" width="5.6" height="5" fill="none" stroke="#c5cfd9" stroke-width="1.3"/><path d="M80.5 216.8H90.8" stroke="#c5cfd9" stroke-width="2"/><rect x="87.6" y="222.6" width="14" height="13" fill="#f3f4f6" stroke="#c5cfd9" stroke-width="1.3"/><path d="M136.7 213.8H163.3" stroke="#c5cfd9" stroke-width="2.2"/><path d="M146 213V211A3 3 0 0 1 149 208.3H151A3 3 0 0 1 154 211V213" fill="none" stroke="#c5cfd9" stroke-width="1.6"/><path d="M138.8 215.5V237.5A4 4 0 0 0 142.8 241.5H156.7A4 4 0 0 0 160.7 237.5V215.5" fill="none" stroke="#c5cfd9" stroke-width="2.2"/><path d="M144.5 220V234M150 220V234M155.5 220V234" stroke="#c5cfd9" stroke-width="1.1"/><path d="M198 225.5L209 217V222.5C218 222.5 224 226 225 233C221 229 217 228 209 228V234Z" fill="#34475a"/><path d="M284 225.5L273 217V222.5C264 222.5 258 226 257 233C261 229 265 228 273 228V234Z" fill="#c5cfd9"/></svg>
<svg class="a" style="left:300px;top:196px" width="120" height="60" viewBox="300 196 120 60"><path d="M321 212H343A3 3 0 0 1 346 215V236.5A3 3 0 0 1 343 239.5H337L332 244.5L327 239.5H321A3 3 0 0 1 318 236.5V215A3 3 0 0 1 321 212Z" fill="none" stroke="#34475a" stroke-width="1.9"/><path d="M325 219.5H339.5M325 225.5H336.5M325 231.5H339.5" stroke="#34475a" stroke-width="2.3"/><path d="M381 212H403A3 3 0 0 1 406 215V236.5A3 3 0 0 1 403 239.5H397L392 244.5L387 239.5H381A3 3 0 0 1 378 236.5V215A3 3 0 0 1 381 212Z" fill="none" stroke="#34475a" stroke-width="1.9"/><ellipse cx="392" cy="225.3" rx="8" ry="6" fill="none" stroke="#34475a" stroke-width="2.8"/><circle cx="392" cy="225.3" r="3.3" fill="#34475a"/></svg>
<div class="a" style="left:180px;top:197px;width:1px;height:59px;background:#dfe3e8"></div>
<div class="a" style="left:301px;top:197px;width:1px;height:59px;background:#dfe3e8"></div>
<div class="a" style="left:422px;top:197px;width:1px;height:59px;background:#dfe3e8"></div>
<div class="a" style="left:608px;top:197px;width:1px;height:59px;background:#dfe3e8"></div>
<div class="a" style="left:729px;top:197px;width:1px;height:59px;background:#dfe3e8"></div>
<div class="a" style="left:431px;top:205px;width:76px;height:42px;border:1px solid #e0e4e9;border-radius:4px"></div>
<div class="a" style="left:444px;top:215px;width:25px;height:24px;background:#3b3e42;border-radius:6px"></div>
<svg class="a" style="left:488px;top:222px" width="12" height="8"><path d="M1 1H11L6 6.5Z" fill="#34475a"/></svg>
<div class="a" style="left:516px;top:205px;width:84px;height:42px;border:1px solid #e0e4e9;border-radius:4px"></div>
<svg class="a" style="left:529px;top:220px" width="34" height="10"><rect x="1.3" y="2.4" width="23" height="5" fill="#34475a"/><rect x="25.8" y="4" width="5.2" height="3.4" fill="#34475a"/></svg>
<svg class="a" style="left:581px;top:222px" width="12" height="8"><path d="M1 1H11L6 6.5Z" fill="#34475a"/></svg>
<svg class="a" style="left:600px;top:196px" width="140" height="60" viewBox="600 196 140 60"><path d="M648 215L635 238.5L632 228Z" fill="none" stroke="#c5cfd9" stroke-width="2.6" stroke-linejoin="round"/><path d="M628 221.5C624 225 624.5 232 630 236" fill="none" stroke="#c5cfd9" stroke-width="2.2"/><path d="M625.5 219.5L633 218.5L629 225Z" fill="#c5cfd9"/><path d="M694 214.5V238H680.8Z" fill="none" stroke="#c5cfd9" stroke-width="1.4" stroke-linejoin="round"/><path d="M698.7 208V244.5" stroke="#c5cfd9" stroke-width="2.6" stroke-linecap="round"/><path d="M704 215V238H716.5Z" fill="none" stroke="#c5cfd9" stroke-width="2.8" stroke-linejoin="round"/></svg>
<div class="a" style="left:752px;top:210px;font-size:20.7px;line-height:30px;color:#7d8d9c;font-weight:bold;white-space:nowrap">Simulator time: 00:00:08</div>
<div class="a" style="left:1485px;top:206px;width:105px;height:40px;background:#0696d7;border-radius:3px"></div>
<svg class="a" style="left:1490px;top:210px" width="40" height="32" viewBox="1490 210 40 32"><rect x="1498.3" y="216.8" width="26.2" height="18.6" rx="1.6" fill="none" stroke="#fff" stroke-width="1.7"/><path d="M1498 221.4H1524.8" stroke="#fff" stroke-width="1.3"/><circle cx="1501.2" cy="219.1" r="1.05" fill="#fff"/><circle cx="1504.7" cy="219.1" r="1.05" fill="#fff"/><circle cx="1508.2" cy="219.1" r="1.05" fill="#fff"/><path d="M1508.2 223.8L1502.6 228.2L1508.2 232.6M1518.2 223L1513.8 233.2" stroke="#fff" stroke-width="2.1" fill="none" stroke-linecap="round"/></svg>
<div class="a" style="left:1536px;top:210px;font-size:18.9px;line-height:28px;color:#fff;white-space:nowrap;letter-spacing:-1.2px">Code</div>
<div class="a" style="left:1597px;top:206px;width:197px;height:40px;background:#25b35a;border-radius:3px"></div>
<div class="a" style="left:1615px;top:217px;width:17px;height:17.5px;background:#fff;border-radius:2px"></div>
<div class="a" style="left:1648px;top:210px;font-size:18.9px;line-height:28px;color:#fff;white-space:nowrap">Stop Simulation</div>
<div class="a" style="left:1802px;top:196px;width:1px;height:60px;background:#dfe3e8"></div>
<div class="a" style="left:1810px;top:206px;width:99px;height:40px;border:1px solid #dfe3e8;border-radius:3px"></div>
<div class="a" style="left:1828px;top:210px;font-size:18.9px;line-height:28px;color:#3c4d5e;white-space:nowrap;letter-spacing:-0.6px">Send To</div>
<svg class="a" style="left:9px;top:266px" width="44" height="44"><circle cx="22" cy="22" r="20.5" fill="#f3f4f6" stroke="#b5bcc4" stroke-width="1"/><path d="M13 17V13H17M27 13H31V17M31 27V31H27M17 31H13V27" fill="none" stroke="#7d8894" stroke-width="1.4"/></svg>
<svg class="a" style="left:0;top:0" width="1160" height="1020" viewBox="0 0 1160 1020"><rect x="561.2" y="318" width="425.3" height="273.6" rx="3" fill="#dedede" stroke="#d2d2d2" stroke-width="1"/><path d="M561.5 364.3H986.2M561.5 544.2H986.2" stroke="#d3d3d3" stroke-width="1"/><rect x="561.5" y="449.2" width="425" height="10.8" fill="#d3d3d3"/><path d="M580 323.2H967" stroke="#333" stroke-width="1.3"/><path d="M580 354.2H967" stroke="#c9363b" stroke-width="1.6"/><path d="M580 554.7H967" stroke="#585858" stroke-width="1.6"/><path d="M580 585.8H967" stroke="#c9363b" stroke-width="1.6"/><path d="M590.20 332.90a3.3 3.3 0 1 0 -6.6 0a3.3 3.3 0 1 0 6.6 0M603.07 332.90a3.3 3.3 0 1 0 -6.6 0a3.3 3.3 0 1 0 6.6 0M615.95 332.90a3.3 3.3 0 1 0 -6.6 0a3.3 3.3 0 1 0 6.6 0M628.82 332.90a3.3 3.3 0 1 0 -6.6 0a3.3 3.3 0 1 0 6.6 0M641.70 332.90a3.3 3.3 0 1 0 -6.6 0a3.3 3.3 0 1 0 6.6 0M654.57 332.90a3.3 3.3 0 1 0 -6.6 0a3.3 3.3 0 1 0 6.6 0M667.45 332.90a3.3 3.3 0 1 0 -6.6 0a3.3 3.3 0 1 0 6.6 0M680.32 332.90a3.3 3.3 0 1 0 -6.6 0a3.3 3.3 0 1 0 6.6 0M693.20 332.90a3.3 3.3 0 1 0 -6.6 0a3.3 3.3 0 1 0 6.6 0M706.07 332.90a3.3 3.3 0 1 0 -6.6 0a3.3 3.3 0 1 0 6.6 0M718.95 332.90a3.3 3.3 0 1 0 -6.6 0a3.3 3.3 0 1 0 6.6 0M731.82 332.90a3.3 3.3 0 1 0 -6.6 0a3.3 3.3 0 1 0 6.6 0M744.70 332.90a3.3 3.3 0 1 0 -6.6 0a3.3 3.3 0 1 0 6.6 0M757.57 332.90a3.3 3.3 0 1 0 -6.6 0a3.3 3.3 0 1 0 6.6 0M770.45 332.90a3.3 3.3 0 1 0 -6.6 0a3.3 3.3 0 1 0 6.6 0M783.32 332.90a3.3 3.3 0 1 0 -6.6 0a3.3 3.3 0 1 0 6.6 0M796.20 332.90a3.3 3.3 0 1 0 -6.6 0a3.3 3.3 0 1 0 6.6 0M809.07 332.90a3.3 3.3 0 1 0 -6.6 0a3.3 3.3 0 1 0 6.6 0M821.95 332.90a3.3 3.3 0 1 0 -6.6 0a3.3 3.3 0 1 0 6.6 0M834.82 332.90a3.3 3.3 0 1 0 -6.6 0a3.3 3.3 0 1 0 6.6 0M847.70 332.90a3.3 3.3 0 1 0 -6.6 0a3.3 3.3 0 1 0 6.6 0M860.57 332.90a3.3 3.3 0 1 0 -6.6 0a3.3 3.3 0 1 0 6.6 0M873.45 332.90a3.3 3.3 0 1 0 -6.6 0a3.3 3.3 0 1 0 6.6 0M886.32 332.90a3.3 3.3 0 1 0 -6.6 0a3.3 3.3 0 1 0 6.6 0M899.20 332.90a3.3 3.3 0 1 0 -6.6 0a3.3 3.3 0 1 0 6.6 0M912.07 332.90a3.3 3.3 0 1 0 -6.6 0a3.3 3.3 0 1 0 6.6 0M924.95 332.90a3.3 3.3 0 1 0 -6.6 0a3.3 3.3 0 1 0 6.6 0M937.82 332.90a3.3 3.3 0 1 0 -6.6 0a3.3 3.3 0 1 0 6.6 0M950.70 332.90a3.3 3.3 0 1 0 -6.6 0a3.3 3.3 0 1 0 6.6 0M963.57 332.90a3.3 3.3 0 1 0 -6.6 0a3.3 3.3 0 1 0 6.6 0M590.20 345.70a3.3 3.3 0 1 0 -6.6 0a3.3 3.3 0 1 0 6.6 0M603.07 345.70a3.3 3.3 0 1 0 -6.6 0a3.3 3.3 0 1 0 6.6 0M615.95 345.70a3.3 3.3 0 1 0 -6.6 0a3.3 3.3 0 1 0 6.6 0M628.82 345.70a3.3 3.3 0 1 0 -6.6 0a3.3 3.3 0 1 0 6.6 0M641.70 345.70a3.3 3.3 0 1 0 -6.6 0a3.3 3.3 0 1 0 6.6 0M654.57 345.70a3.3 3.3 0 1 0 -6.6 0a3.3 3.3 0 1 0 6.6 0M667.45 345.70a3.3 3.3 0 1 0 -6.6 0a3.3 3.3 0 1 0 6.6 0M680.32 345.70a3.3 3.3 0 1 0 -6.6 0a3.3 3.3 0 1 0 6.6 0M693.20 345.70a3.3 3.3 0 1 0 -6.6 0a3.3 3.3 0 1 0 6.6 0M706.07 345.70a3.3 3.3 0 1 0 -6.6 0a3.3 3.3 0 1 0 6.6 0M718.95 345.70a3.3 3.3 0 1 0 -6.6 0a3.3 3.3 0 1 0 6.6 0M731.82 345.70a3.3 3.3 0 1 0 -6.6 0a3.3 3.3 0 1 0 6.6 0M744.70 345.70a3.3 3.3 0 1 0 -6.6 0a3.3 3.3 0 1 0 6.6 0M757.57 345.70a3.3 3.3 0 1 0 -6.6 0a3.3 3.3 0 1 0 6.6 0M770.45 345.70a3.3 3.3 0 1 0 -6.6 0a3.3 3.3 0 1 0 6.6 0M783.32 345.70a3.3 3.3 0 1 0 -6.6 0a3.3 3.3 0 1 0 6.6 0M796.20 345.70a3.3 3.3 0 1 0 -6.6 0a3.3 3.3 0 1 0 6.6 0M809.07 345.70a3.3 3.3 0 1 0 -6.6 0a3.3 3.3 0 1 0 6.6 0M821.95 345.70a3.3 3.3 0 1 0 -6.6 0a3.3 3.3 0 1 0 6.6 0M834.82 345.70a3.3 3.3 0 1 0 -6.6 0a3.3 3.3 0 1 0 6.6 0M847.70 345.70a3.3 3.3 0 1 0 -6.6 0a3.3 3.3 0 1 0 6.6 0M860.57 345.70a3.3 3.3 0 1 0 -6.6 0a3.3 3.3 0 1 0 6.6 0M873.45 345.70a3.3 3.3 0 1 0 -6.6 0a3.3 3.3 0 1 0 6.6 0M886.32 345.70a3.3 3.3 0 1 0 -6.6 0a3.3 3.3 0 1 0 6.6 0M899.20 345.70a3.3 3.3 0 1 0 -6.6 0a3.3 3.3 0 1 0 6.6 0M912.07 345.70a3.3 3.3 0 1 0 -6.6 0a3.3 3.3 0 1 0 6.6 0M924.95 345.70a3.3 3.3 0 1 0 -6.6 0a3.3 3.3 0 1 0 6.6 0M937.82 345.70a3.3 3.3 0 1 0 -6.6 0a3.3 3.3 0 1 0 6.6 0M950.70 345.70a3.3 3.3 0 1 0 -6.6 0a3.3 3.3 0 1 0 6.6 0M963.57 345.70a3.3 3.3 0 1 0 -6.6 0a3.3 3.3 0 1 0 6.6 0M590.20 384.10a3.3 3.3 0 1 0 -6.6 0a3.3 3.3 0 1 0 6.6 0M603.07 384.10a3.3 3.3 0 1 0 -6.6 0a3.3 3.3 0 1 0 6.6 0M615.95 384.10a3.3 3.3 0 1 0 -6.6 0a3.3 3.3 0 1 0 6.6 0M628.82 384.10a3.3 3.3 0 1 0 -6.6 0a3.3 3.3 0 1 0 6.6 0M641.70 384.10a3.3 3.3 0 1 0 -6.6 0a3.3 3.3 0 1 0 6.6 0M654.57 384.10a3.3 3.3 0 1 0 -6.6 0a3.3 3.3 0 1 0 6.6 0M667.45 384.10a3.3 3.3 0 1 0 -6.6 0a3.3 3.3 0 1 0 6.6 0M680.32 384.10a3.3 3.3 0 1 0 -6.6 0a3.3 3.3 0 1 0 6.6 0M693.20 384.10a3.3 3.3 0 1 0 -6.6 0a3.3 3.3 0 1 0 6.6 0M706.07 384.10a3.3 3.3 0 1 0 -6.6 0a3.3 3.3 0 1 0 6.6 0M718.95 384.10a3.3 3.3 0 1 0 -6.6 0a3.3 3.3 0 1 0 6.6 0M731.82 384.10a3.3 3.3 0 1 0 -6.6 0a3.3 3.3 0 1 0 6.6 0M744.70 384.10a3.3 3.3 0 1 0 -6.6 0a3.3 3.3 0 1 0 6.6 0M757.57 384.10a3.3 3.3 0 1 0 -6.6 0a3.3 3.3 0 1 0 6.6 0M770.45 384.10a3.3 3.3 0 1 0 -6.6 0a3.3 3.3 0 1 0 6.6 0M783.32 384.10a3.3 3.3 0 1 0 -6.6 0a3.3 3.3 0 1 0 6.6 0M796.20 384.10a3.3 3.3 0 1 0 -6.6 0a3.3 3.3 0 1 0 6.6 0M809.07 384.10a3.3 3.3 0 1 0 -6.6 0a3.3 3.3 0 1 0 6.6 0M821.95 384.10a3.3 3.3 0 1 0 -6.6 0a3.3 3.3 0 1 0 6.6 0M834.82 384.10a3.3 3.3 0 1 0 -6.6 0a3.3 3.3 0 1 0 6.6 0M847.70 384.10a3.3 3.3 0 1 0 -6.6 0a3.3 3.3 0 1 0 6.6 0M860.57 384.10a3.3 3.3 0 1 0 -6.6 0a3.3 3.3 0 1 0 6.6 0M873.45 384.10a3.3 3.3 0 1 0 -6.6 0a3.3 3.3 0 1 0 6.6 0M886.32 384.10a3.3 3.3 0 1 0 -6.6 0a3.3 3.3 0 1 0 6.6 0M899.20 384.10a3.3 3.3 0 1 0 -6.6 0a3.3 3.3 0 1 0 6.6 0M912.07 384.10a3.3 3.3 0 1 0 -6.6 0a3.3 3.3 0 1 0 6.6 0M924.95 384.10a3.3 3.3 0 1 0 -6.6 0a3.3 3.3 0 1 0 6.6 0M937.82 384.10a3.3 3.3 0 1 0 -6.6 0a3.3 3.3 0 1 0 6.6 0M950.70 384.10a3.3 3.3 0 1 0 -6.6 0a3.3 3.3 0 1 0 6.6 0M963.57 384.10a3.3 3.3 0 1 0 -6.6 0a3.3 3.3 0 1 0 6.6 0M590.20 397.00a3.3 3.3 0 1 0 -6.6 0a3.3 3.3 0 1 0 6.6 0M603.07 397.00a3.3 3.3 0 1 0 -6.6 0a3.3 3.3 0 1 0 6.6 0M615.95 397.00a3.3 3.3 0 1 0 -6.6 0a3.3 3.3 0 1 0 6.6 0M628.82 397.00a3.3 3.3 0 1 0 -6.6 0a3.3 3.3 0 1 0 6.6 0M641.70 397.00a3.3 3.3 0 1 0 -6.6 0a3.3 3.3 0 1 0 6.6 0M654.57 397.00a3.3 3.3 0 1 0 -6.6 0a3.3 3.3 0 1 0 6.6 0M667.45 397.00a3.3 3.3 0 1 0 -6.6 0a3.3 3.3 0 1 0 6.6 0M680.32 397.00a3.3 3.3 0 1 0 -6.6 0a3.3 3.3 0 1 0 6.6 0M693.20 397.00a3.3 3.3 0 1 0 -6.6 0a3.3 3.3 0 1 0 6.6 0M706.07 397.00a3.3 3.3 0 1 0 -6.6 0a3.3 3.3 0 1 0 6.6 0M718.95 397.00a3.3 3.3 0 1 0 -6.6 0a3.3 3.3 0 1 0 6.6 0M731.82 397.00a3.3 3.3 0 1 0 -6.6 0a3.3 3.3 0 1 0 6.6 0M744.70 397.00a3.3 3.3 0 1 0 -6.6 0a3.3 3.3 0 1 0 6.6 0M757.57 397.00a3.3 3.3 0 1 0 -6.6 0a3.3 3.3 0 1 0 6.6 0M770.45 397.00a3.3 3.3 0 1 0 -6.6 0a3.3 3.3 0 1 0 6.6 0M783.32 397.00a3.3 3.3 0 1 0 -6.6 0a3.3 3.3 0 1 0 6.6 0M796.20 397.00a3.3 3.3 0 1 0 -6.6 0a3.3 3.3 0 1 0 6.6 0M809.07 397.00a3.3 3.3 0 1 0 -6.6 0a3.3 3.3 0 1 0 6.6 0M821.95 397.00a3.3 3.3 0 1 0 -6.6 0a3.3 3.3 0 1 0 6.6 0M834.82 397.00a3.3 3.3 0 1 0 -6.6 0a3.3 3.3 0 1 0 6.6 0M847.70 397.00a3.3 3.3 0 1 0 -6.6 0a3.3 3.3 0 1 0 6.6 0M860.57 397.00a3.3 3.3 0 1 0 -6.6 0a3.3 3.3 0 1 0 6.6 0M873.45 397.00a3.3 3.3 0 1 0 -6.6 0a3.3 3.3 0 1 0 6.6 0M886.32 397.00a3.3 3.3 0 1 0 -6.6 0a3.3 3.3 0 1 0 6.6 0M899.20 397.00a3.3 3.3 0 1 0 -6.6 0a3.3 3.3 0 1 0 6.6 0M912.07 397.00a3.3 3.3 0 1 0 -6.6 0a3.3 3.3 0 1 0 6.6 0M924.95 397.00a3.3 3.3 0 1 0 -6.6 0a3.3 3.3 0 1 0 6.6 0M937.82 397.00a3.3 3.3 0 1 0 -6.6 0a3.3 3.3 0 1 0 6.6 0M950.70 397.00a3.3 3.3 0 1 0 -6.6 0a3.3 3.3 0 1 0 6.6 0M963.57 397.00a3.3 3.3 0 1 0 -6.6 0a3.3 3.3 0 1 0 6.6 0M590.20 409.90a3.3 3.3 0 1 0 -6.6 0a3.3 3.3 0 1 0 6.6 0M603.07 409.90a3.3 3.3 0 1 0 -6.6 0a3.3 3.3 0 1 0 6.6 0M615.95 409.90a3.3 3.3 0 1 0 -6.6 0a3.3 3.3 0 1 0 6.6 0M628.82 409.90a3.3 3.3 0 1 0 -6.6 0a3.3 3.3 0 1 0 6.6 0M641.70 409.90a3.3 3.3 0 1 0 -6.6 0a3.3 3.3 0 1 0 6.6 0M654.57 409.90a3.3 3.3 0 1 0 -6.6 0a3.3 3.3 0 1 0 6.6 0M667.45 409.90a3.3 3.3 0 1 0 -6.6 0a3.3 3.3 0 1 0 6.6 0M680.32 409.90a3.3 3.3 0 1 0 -6.6 0a3.3 3.3 0 1 0 6.6 0M693.20 409.90a3.3 3.3 0 1 0 -6.6 0a3.3 3.3 0 1 0 6.6 0M706.07 409.90a3.3 3.3 0 1 0 -6.6 0a3.3 3.3 0 1 0 6.6 0M718.95 409.90a3.3 3.3 0 1 0 -6.6 0a3.3 3.3 0 1 0 6.6 0M731.82 409.90a3.3 3.3 0 1 0 -6.6 0a3.3 3.3 0 1 0 6.6 0M744.70 409.90a3.3 3.3 0 1 0 -6.6 0a3.3 3.3 0 1 0 6.6 0M757.57 409.90a3.3 3.3 0 1 0 -6.6 0a3.3 3.3 0 1 0 6.6 0M770.45 409.90a3.3 3.3 0 1 0 -6.6 0a3.3 3.3 0 1 0 6.6 0M783.32 409.90a3.3 3.3 0 1 0 -6.6 0a3.3 3.3 0 1 0 6.6 0M796.20 409.90a3.3 3.3 0 1 0 -6.6 0a3.3 3.3 0 1 0 6.6 0M809.07 409.90a3.3 3.3 0 1 0 -6.6 0a3.3 3.3 0 1 0 6.6 0M821.95 409.90a3.3 3.3 0 1 0 -6.6 0a3.3 3.3 0 1 0 6.6 0M834.82 409.90a3.3 3.3 0 1 0 -6.6 0a3.3 3.3 0 1 0 6.6 0M847.70 409.90a3.3 3.3 0 1 0 -6.6 0a3.3 3.3 0 1 0 6.6 0M860.57 409.90a3.3 3.3 0 1 0 -6.6 0a3.3 3.3 0 1 0 6.6 0M873.45 409.90a3.3 3.3 0 1 0 -6.6 0a3.3 3.3 0 1 0 6.6 0M886.32 409.90a3.3 3.3 0 1 0 -6.6 0a3.3 3.3 0 1 0 6.6 0M899.20 409.90a3.3 3.3 0 1 0 -6.6 0a3.3 3.3 0 1 0 6.6 0M912.07 409.90a3.3 3.3 0 1 0 -6.6 0a3.3 3.3 0 1 0 6.6 0M924.95 409.90a3.3 3.3 0 1 0 -6.6 0a3.3 3.3 0 1 0 6.6 0M937.82 409.90a3.3 3.3 0 1 0 -6.6 0a3.3 3.3 0 1 0 6.6 0M950.70 409.90a3.3 3.3 0 1 0 -6.6 0a3.3 3.3 0 1 0 6.6 0M963.57 409.90a3.3 3.3 0 1 0 -6.6 0a3.3 3.3 0 1 0 6.6 0M590.20 422.80a3.3 3.3 0 1 0 -6.6 0a3.3 3.3 0 1 0 6.6 0M603.07 422.80a3.3 3.3 0 1 0 -6.6 0a3.3 3.3 0 1 0 6.6 0M615.95 422.80a3.3 3.3 0 1 0 -6.6 0a3.3 3.3 0 1 0 6.6 0M628.82 422.80a3.3 3.3 0 1 0 -6.6 0a3.3 3.3 0 1 0 6.6 0M641.70 422.80a3.3 3.3 0 1 0 -6.6 0a3.3 3.3 0 1 0 6.6 0M654.57 422.80a3.3 3.3 0 1 0 -6.6 0a3.3 3.3 0 1 0 6.6 0M667.45 422.80a3.3 3.3 0 1 0 -6.6 0a3.3 3.3 0 1 0 6.6 0M680.32 422.80a3.3 3.3 0 1 0 -6.6 0a3.3 3.3 0 1 0 6.6 0M693.20 422.80a3.3 3.3 0 1 0 -6.6 0a3.3 3.3 0 1 0 6.6 0M706.07 422.80a3.3 3.3 0 1 0 -6.6 0a3.3 3.3 0 1 0 6.6 0M718.95 422.80a3.3 3.3 0 1 0 -6.6 0a3.3 3.3 0 1 0 6.6 0M731.82 422.80a3.3 3.3 0 1 0 -6.6 0a3.3 3.3 0 1 0 6.6 0M744.70 422.80a3.3 3.3 0 1 0 -6.6 0a3.3 3.3 0 1 0 6.6 0M757.57 422.80a3.3 3.3 0 1 0 -6.6 0a3.3 3.3 0 1 0 6.6 0M770.45 422.80a3.3 3.3 0 1 0 -6.6 0a3.3 3.3 0 1 0 6.6 0M783.32 422.80a3.3 3.3 0 1 0 -6.6 0a3.3 3.3 0 1 0 6.6 0M796.20 422.80a3.3 3.3 0 1 0 -6.6 0a3.3 3.3 0 1 0 6.6 0M809.07 422.80a3.3 3.3 0 1 0 -6.6 0a3.3 3.3 0 1 0 6.6 0M821.95 422.80a3.3 3.3 0 1 0 -6.6 0a3.3 3.3 0 1 0 6.6 0M834.82 422.80a3.3 3.3 0 1 0 -6.6 0a3.3 3.3 0 1 0 6.6 0M847.70 422.80a3.3 3.3 0 1 0 -6.6 0a3.3 3.3 0 1 0 6.6 0M860.57 422.80a3.3 3.3 0 1 0 -6.6 0a3.3 3.3 0 1 0 6.6 0M873.45 422.80a3.3 3.3 0 1 0 -6.6 0a3.3 3.3 0 1 0 6.6 0M886.32 422.80a3.3 3.3 0 1 0 -6.6 0a3.3 3.3 0 1 0 6.6 0M899.20 422.80a3.3 3.3 0 1 0 -6.6 0a3.3 3.3 0 1 0 6.6 0M912.07 422.80a3.3 3.3 0 1 0 -6.6 0a3.3 3.3 0 1 0 6.6 0M924.95 422.80a3.3 3.3 0 1 0 -6.6 0a3.3 3.3 0 1 0 6.6 0M937.82 422.80a3.3 3.3 0 1 0 -6.6 0a3.3 3.3 0 1 0 6.6 0M950.70 422.80a3.3 3.3 0 1 0 -6.6 0a3.3 3.3 0 1 0 6.6 0M963.57 422.80a3.3 3.3 0 1 0 -6.6 0a3.3 3.3 0 1 0 6.6 0M590.20 435.70a3.3 3.3 0 1 0 -6.6 0a3.3 3.3 0 1 0 6.6 0M603.07 435.70a3.3 3.3 0 1 0 -6.6 0a3.3 3.3 0 1 0 6.6 0M615.95 435.70a3.3 3.3 0 1 0 -6.6 0a3.3 3.3 0 1 0 6.6 0M628.82 435.70a3.3 3.3 0 1 0 -6.6 0a3.3 3.3 0 1 0 6.6 0M641.70 435.70a3.3 3.3 0 1 0 -6.6 0a3.3 3.3 0 1 0 6.6 0M654.57 435.70a3.3 3.3 0 1 0 -6.6 0a3.3 3.3 0 1 0 6.6 0M667.45 435.70a3.3 3.3 0 1 0 -6.6 0a3.3 3.3 0 1 0 6.6 0M680.32 435.70a3.3 3.3 0 1 0 -6.6 0a3.3 3.3 0 1 0 6.6 0M693.20 435.70a3.3 3.3 0 1 0 -6.6 0a3.3 3.3 0 1 0 6.6 0M706.07 435.70a3.3 3.3 0 1 0 -6.6 0a3.3 3.3 0 1 0 6.6 0M718.95 435.70a3.3 3.3 0 1 0 -6.6 0a3.3 3.3 0 1 0 6.6 0M731.82 435.70a3.3 3.3 0 1 0 -6.6 0a3.3 3.3 0 1 0 6.6 0M744.70 435.70a3.3 3.3 0 1 0 -6.6 0a3.3 3.3 0 1 0 6.6 0M757.57 435.70a3.3 3.3 0 1 0 -6.6 0a3.3 3.3 0 1 0 6.6 0M770.45 435.70a3.3 3.3 0 1 0 -6.6 0a3.3 3.3 0 1 0 6.6 0M783.32 435.70a3.3 3.3 0 1 0 -6.6 0a3.3 3.3 0 1 0 6.6 0M796.20 435.70a3.3 3.3 0 1 0 -6.6 0a3.3 3.3 0 1 0 6.6 0M809.07 435.70a3.3 3.3 0 1 0 -6.6 0a3.3 3.3 0 1 0 6.6 0M821.95 435.70a3.3 3.3 0 1 0 -6.6 0a3.3 3.3 0 1 0 6.6 0M834.82 435.70a3.3 3.3 0 1 0 -6.6 0a3.3 3.3 0 1 0 6.6 0M847.70 435.70a3.3 3.3 0 1 0 -6.6 0a3.3 3.3 0 1 0 6.6 0M860.57 435.70a3.3 3.3 0 1 0 -6.6 0a3.3 3.3 0 1 0 6.6 0M873.45 435.70a3.3 3.3 0 1 0 -6.6 0a3.3 3.3 0 1 0 6.6 0M886.32 435.70a3.3 3.3 0 1 0 -6.6 0a3.3 3.3 0 1 0 6.6 0M899.20 435.70a3.3 3.3 0 1 0 -6.6 0a3.3 3.3 0 1 0 6.6 0M912.07 435.70a3.3 3.3 0 1 0 -6.6 0a3.3 3.3 0 1 0 6.6 0M924.95 435.70a3.3 3.3 0 1 0 -6.6 0a3.3 3.3 0 1 0 6.6 0M937.82 435.70a3.3 3.3 0 1 0 -6.6 0a3.3 3.3 0 1 0 6.6 0M950.70 435.70a3.3 3.3 0 1 0 -6.6 0a3.3 3.3 0 1 0 6.6 0M963.57 435.70a3.3 3.3 0 1 0 -6.6 0a3.3 3.3 0 1 0 6.6 0M590.20 474.40a3.3 3.3 0 1 0 -6.6 0a3.3 3.3 0 1 0 6.6 0M603.07 474.40a3.3 3.3 0 1 0 -6.6 0a3.3 3.3 0 1 0 6.6 0M615.95 474.40a3.3 3.3 0 1 0 -6.6 0a3.3 3.3 0 1 0 6.6 0M628.82 474.40a3.3 3.3 0 1 0 -6.6 0a3.3 3.3 0 1 0 6.6 0M641.70 474.40a3.3 3.3 0 1 0 -6.6 0a3.3 3.3 0 1 0 6.6 0M654.57 474.40a3.3 3.3 0 1 0 -6.6 0a3.3 3.3 0 1 0 6.6 0M667.45 474.40a3.3 3.3 0 1 0 -6.6 0a3.3 3.3 0 1 0 6.6 0M680.32 474.40a3.3 3.3 0 1 0 -6.6 0a3.3 3.3 0 1 0 6.6 0M693.20 474.40a3.3 3.3 0 1 0 -6.6 0a3.3 3.3 0 1 0 6.6 0M706.07 474.40a3.3 3.3 0 1 0 -6.6 0a3.3 3.3 0 1 0 6.6 0M718.95 474.40a3.3 3.3 0 1 0 -6.6 0a3.3 3.3 0 1 0 6.6 0M731.82 474.40a3.3 3.3 0 1 0 -6.6 0a3.3 3.3 0 1 0 6.6 0M744.70 474.40a3.3 3.3 0 1 0 -6.6 0a3.3 3.3 0 1 0 6.6 0M757.57 474.40a3.3 3.3 0 1 0 -6.6 0a3.3 3.3 0 1 0 6.6 0M770.45 474.40a3.3 3.3 0 1 0 -6.6 0a3.3 3.3 0 1 0 6.6 0M783.32 474.40a3.3 3.3 0 1 0 -6.6 0a3.3 3.3 0 1 0 6.6 0M796.20 474.40a3.3 3.3 0 1 0 -6.6 0a3.3 3.3 0 1 0 6.6 0M809.07 474.40a3.3 3.3 0 1 0 -6.6 0a3.3 3.3 0 1 0 6.6 0M821.95 474.40a3.3 3.3 0 1 0 -6.6 0a3.3 3.3 0 1 0 6.6 0M834.82 474.40a3.3 3.3 0 1 0 -6.6 0a3.3 3.3 0 1 0 6.6 0M847.70 474.40a3.3 3.3 0 1 0 -6.6 0a3.3 3.3 0 1 0 6.6 0M860.57 474.40a3.3 3.3 0 1 0 -6.6 0a3.3 3.3 0 1 0 6.6 0M873.45 474.40a3.3 3.3 0 1 0 -6.6 0a3.3 3.3 0 1 0 6.6 0M886.32 474.40a3.3 3.3 0 1 0 -6.6 0a3.3 3.3 0 1 0 6.6 0M899.20 474.40a3.3 3.3 0 1 0 -6.6 0a3.3 3.3 0 1 0 6.6 0M912.07 474.40a3.3 3.3 0 1 0 -6.6 0a3.3 3.3 0 1 0 6.6 0M924.95 474.40a3.3 3.3 0 1 0 -6.6 0a3.3 3.3 0 1 0 6.6 0M937.82 474.40a3.3 3.3 0 1 0 -6.6 0a3.3 3.3 0 1 0 6.6 0M950.70 474.40a3.3 3.3 0 1 0 -6.6 0a3.3 3.3 0 1 0 6.6 0M963.57 474.40a3.3 3.3 0 1 0 -6.6 0a3.3 3.3 0 1 0 6.6 0M590.20 487.30a3.3 3.3 0 1 0 -6.6 0a3.3 3.3 0 1 0 6.6 0M603.07 487.30a3.3 3.3 0 1 0 -6.6 0a3.3 3.3 0 1 0 6.6 0M615.95 487.30a3.3 3.3 0 1 0 -6.6 0a3.3 3.3 0 1 0 6.6 0M628.82 487.30a3.3 3.3 0 1 0 -6.6 0a3.3 3.3 0 1 0 6.6 0M641.70 487.30a3.3 3.3 0 1 0 -6.6 0a3.3 3.3 0 1 0 6.6 0M654.57 487.30a3.3 3.3 0 1 0 -6.6 0a3.3 3.3 0 1 0 6.6 0M667.45 487.30a3.3 3.3 0 1 0 -6.6 0a3.3 3.3 0 1 0 6.6 0M680.32 487.30a3.3 3.3 0 1 0 -6.6 0a3.3 3.3 0 1 0 6.6 0M693.20 487.30a3.3 3.3 0 1 0 -6.6 0a3.3 3.3 0 1 0 6.6 0M706.07 487.30a3.3 3.3 0 1 0 -6.6 0a3.3 3.3 0 1 0 6.6 0M718.95 487.30a3.3 3.3 0 1 0 -6.6 0a3.3 3.3 0 1 0 6.6 0M731.82 487.30a3.3 3.3 0 1 0 -6.6 0a3.3 3.3 0 1 0 6.6 0M744.70 487.30a3.3 3.3 0 1 0 -6.6 0a3.3 3.3 0 1 0 6.6 0M757.57 487.30a3.3 3.3 0 1 0 -6.6 0a3.3 3.3 0 1 0 6.6 0M770.45 487.30a3.3 3.3 0 1 0 -6.6 0a3.3 3.3 0 1 0 6.6 0M783.32 487.30a3.3 3.3 0 1 0 -6.6 0a3.3 3.3 0 1 0 6.6 0M796.20 487.30a3.3 3.3 0 1 0 -6.6 0a3.3 3.3 0 1 0 6.6 0M809.07 487.30a3.3 3.3 0 1 0 -6.6 0a3.3 3.3 0 1 0 6.6 0M821.95 487.30a3.3 3.3 0 1 0 -6.6 0a3.3 3.3 0 1 0 6.6 0M834.82 487.30a3.3 3.3 0 1 0 -6.6 0a3.3 3.3 0 1 0 6.6 0M847.70 487.30a3.3 3.3 0 1 0 -6.6 0a3.3 3.3 0 1 0 6.6 0M860.57 487.30a3.3 3.3 0 1 0 -6.6 0a3.3 3.3 0 1 0 6.6 0M873.45 487.30a3.3 3.3 0 1 0 -6.6 0a3.3 3.3 0 1 0 6.6 0M886.32 487.30a3.3 3.3 0 1 0 -6.6 0a3.3 3.3 0 1 0 6.6 0M899.20 487.30a3.3 3.3 0 1 0 -6.6 0a3.3 3.3 0 1 0 6.6 0M912.07 487.30a3.3 3.3 0 1 0 -6.6 0a3.3 3.3 0 1 0 6.6 0M924.95 487.30a3.3 3.3 0 1 0 -6.6 0a3.3 3.3 0 1 0 6.6 0M937.82 487.30a3.3 3.3 0 1 0 -6.6 0a3.3 3.3 0 1 0 6.6 0M950.70 487.30a3.3 3.3 0 1 0 -6.6 0a3.3 3.3 0 1 0 6.6 0M963.57 487.30a3.3 3.3 0 1 0 -6.6 0a3.3 3.3 0 1 0 6.6 0M590.20 500.10a3.3 3.3 0 1 0 -6.6 0a3.3 3.3 0 1 0 6.6 0M603.07 500.10a3.3 3.3 0 1 0 -6.6 0a3.3 3.3 0 1 0 6.6 0M615.95 500.10a3.3 3.3 0 1 0 -6.6 0a3.3 3.3 0 1 0 6.6 0M628.82 500.10a3.3 3.3 0 1 0 -6.6 0a3.3 3.3 0 1 0 6.6 0M641.70 500.10a3.3 3.3 0 1 0 -6.6 0a3.3 3.3 0 1 0 6.6 0M654.57 500.10a3.3 3.3 0 1 0 -6.6 0a3.3 3.3 0 1 0 6.6 0M667.45 500.10a3.3 3.3 0 1 0 -6.6 0a3.3 3.3 0 1 0 6.6 0M680.32 500.10a3.3 3.3 0 1 0 -6.6 0a3.3 3.3 0 1 0 6.6 0M693.20 500.10a3.3 3.3 0 1 0 -6.6 0a3.3 3.3 0 1 0 6.6 0M706.07 500.10a3.3 3.3 0 1 0 -6.6 0a3.3 3.3 0 1 0 6.6 0M718.95 500.10a3.3 3.3 0 1 0 -6.6 0a3.3 3.3 0 1 0 6.6 0M731.82 500.10a3.3 3.3 0 1 0 -6.6 0a3.3 3.3 0 1 0 6.6 0M744.70 500.10a3.3 3.3 0 1 0 -6.6 0a3.3 3.3 0 1 0 6.6 0M757.57 500.10a3.3 3.3 0 1 0 -6.6 0a3.3 3.3 0 1 0 6.6 0M770.45 500.10a3.3 3.3 0 1 0 -6.6 0a3.3 3.3 0 1 0 6.6 0M783.32 500.10a3.3 3.3 0 1 0 -6.6 0a3.3 3.3 0 1 0 6.6 0M796.20 500.10a3.3 3.3 0 1 0 -6.6 0a3.3 3.3 0 1 0 6.6 0M809.07 500.10a3.3 3.3 0 1 0 -6.6 0a3.3 3.3 0 1 0 6.6 0M821.95 500.10a3.3 3.3 0 1 0 -6.6 0a3.3 3.3 0 1 0 6.6 0M834.82 500.10a3.3 3.3 0 1 0 -6.6 0a3.3 3.3 0 1 0 6.6 0M847.70 500.10a3.3 3.3 0 1 0 -6.6 0a3.3 3.3 0 1 0 6.6 0M860.57 500.10a3.3 3.3 0 1 0 -6.6 0a3.3 3.3 0 1 0 6.6 0M873.45 500.10a3.3 3.3 0 1 0 -6.6 0a3.3 3.3 0 1 0 6.6 0M886.32 500.10a3.3 3.3 0 1 0 -6.6 0a3.3 3.3 0 1 0 6.6 0M899.20 500.10a3.3 3.3 0 1 0 -6.6 0a3.3 3.3 0 1 0 6.6 0M912.07 500.10a3.3 3.3 0 1 0 -6.6 0a3.3 3.3 0 1 0 6.6 0M924.95 500.10a3.3 3.3 0 1 0 -6.6 0a3.3 3.3 0 1 0 6.6 0M937.82 500.10a3.3 3.3 0 1 0 -6.6 0a3.3 3.3 0 1 0 6.6 0M950.70 500.10a3.3 3.3 0 1 0 -6.6 0a3.3 3.3 0 1 0 6.6 0M963.57 500.10a3.3 3.3 0 1 0 -6.6 0a3.3 3.3 0 1 0 6.6 0M590.20 513.00a3.3 3.3 0 1 0 -6.6 0a3.3 3.3 0 1 0 6.6 0M603.07 513.00a3.3 3.3 0 1 0 -6.6 0a3.3 3.3 0 1 0 6.6 0M615.95 513.00a3.3 3.3 0 1 0 -6.6 0a3.3 3.3 0 1 0 6.6 0M628.82 513.00a3.3 3.3 0 1 0 -6.6 0a3.3 3.3 0 1 0 6.6 0M641.70 513.00a3.3 3.3 0 1 0 -6.6 0a3.3 3.3 0 1 0 6.6 0M654.57 513.00a3.3 3.3 0 1 0 -6.6 0a3.3 3.3 0 1 0 6.6 0M667.45 513.00a3.3 3.3 0 1 0 -6.6 0a3.3 3.3 0 1 0 6.6 0M680.32 513.00a3.3 3.3 0 1 0 -6.6 0a3.3 3.3 0 1 0 6.6 0M693.20 513.00a3.3 3.3 0 1 0 -6.6 0a3.3 3.3 0 1 0 6.6 0M706.07 513.00a3.3 3.3 0 1 0 -6.6 0a3.3 3.3 0 1 0 6.6 0M718.95 513.00a3.3 3.3 0 1 0 -6.6 0a3.3 3.3 0 1 0 6.6 0M731.82 513.00a3.3 3.3 0 1 0 -6.6 0a3.3 3.3 0 1 0 6.6 0M744.70 513.00a3.3 3.3 0 1 0 -6.6 0a3.3 3.3 0 1 0 6.6 0M757.57 513.00a3.3 3.3 0 1 0 -6.6 0a3.3 3.3 0 1 0 6.6 0M770.45 513.00a3.3 3.3 0 1 0 -6.6 0a3.3 3.3 0 1 0 6.6 0M783.32 513.00a3.3 3.3 0 1 0 -6.6 0a3.3 3.3 0 1 0 6.6 0M796.20 513.00a3.3 3.3 0 1 0 -6.6 0a3.3 3.3 0 1 0 6.6 0M809.07 513.00a3.3 3.3 0 1 0 -6.6 0a3.3 3.3 0 1 0 6.6 0M821.95 513.00a3.3 3.3 0 1 0 -6.6 0a3.3 3.3 0 1 0 6.6 0M834.82 513.00a3.3 3.3 0 1 0 -6.6 0a3.3 3.3 0 1 0 6.6 0M847.70 513.00a3.3 3.3 0 1 0 -6.6 0a3.3 3.3 0 1 0 6.6 0M860.57 513.00a3.3 3.3 0 1 0 -6.6 0a3.3 3.3 0 1 0 6.6 0M873.45 513.00a3.3 3.3 0 1 0 -6.6 0a3.3 3.3 0 1 0 6.6 0M886.32 513.00a3.3 3.3 0 1 0 -6.6 0a3.3 3.3 0 1 0 6.6 0M899.20 513.00a3.3 3.3 0 1 0 -6.6 0a3.3 3.3 0 1 0 6.6 0M912.07 513.00a3.3 3.3 0 1 0 -6.6 0a3.3 3.3 0 1 0 6.6 0M924.95 513.00a3.3 3.3 0 1 0 -6.6 0a3.3 3.3 0 1 0 6.6 0M937.82 513.00a3.3 3.3 0 1 0 -6.6 0a3.3 3.3 0 1 0 6.6 0M950.70 513.00a3.3 3.3 0 1 0 -6.6 0a3.3 3.3 0 1 0 6.6 0M963.57 513.00a3.3 3.3 0 1 0 -6.6 0a3.3 3.3 0 1 0 6.6 0M590.20 525.90a3.3 3.3 0 1 0 -6.6 0a3.3 3.3 0 1 0 6.6 0M603.07 525.90a3.3 3.3 0 1 0 -6.6 0a3.3 3.3 0 1 0 6.6 0M615.95 525.90a3.3 3.3 0 1 0 -6.6 0a3.3 3.3 0 1 0 6.6 0M628.82 525.90a3.3 3.3 0 1 0 -6.6 0a3.3 3.3 0 1 0 6.6 0M641.70 525.90a3.3 3.3 0 1 0 -6.6 0a3.3 3.3 0 1 0 6.6 0M654.57 525.90a3.3 3.3 0 1 0 -6.6 0a3.3 3.3 0 1 0 6.6 0M667.45 525.90a3.3 3.3 0 1 0 -6.6 0a3.3 3.3 0 1 0 6.6 0M680.32 525.90a3.3 3.3 0 1 0 -6.6 0a3.3 3.3 0 1 0 6.6 0M693.20 525.90a3.3 3.3 0 1 0 -6.6 0a3.3 3.3 0 1 0 6.6 0M706.07 525.90a3.3 3.3 0 1 0 -6.6 0a3.3 3.3 0 1 0 6.6 0M718.95 525.90a3.3 3.3 0 1 0 -6.6 0a3.3 3.3 0 1 0 6.6 0M731.82 525.90a3.3 3.3 0 1 0 -6.6 0a3.3 3.3 0 1 0 6.6 0M744.70 525.90a3.3 3.3 0 1 0 -6.6 0a3.3 3.3 0 1 0 6.6 0M757.57 525.90a3.3 3.3 0 1 0 -6.6 0a3.3 3.3 0 1 0 6.6 0M770.45 525.90a3.3 3.3 0 1 0 -6.6 0a3.3 3.3 0 1 0 6.6 0M783.32 525.90a3.3 3.3 0 1 0 -6.6 0a3.3 3.3 0 1 0 6.6 0M796.20 525.90a3.3 3.3 0 1 0 -6.6 0a3.3 3.3 0 1 0 6.6 0M809.07 525.90a3.3 3.3 0 1 0 -6.6 0a3.3 3.3 0 1 0 6.6 0M821.95 525.90a3.3 3.3 0 1 0 -6.6 0a3.3 3.3 0 1 0 6.6 0M834.82 525.90a3.3 3.3 0 1 0 -6.6 0a3.3 3.3 0 1 0 6.6 0M847.70 525.90a3.3 3.3 0 1 0 -6.6 0a3.3 3.3 0 1 0 6.6 0M860.57 525.90a3.3 3.3 0 1 0 -6.6 0a3.3 3.3 0 1 0 6.6 0M873.45 525.90a3.3 3.3 0 1 0 -6.6 0a3.3 3.3 0 1 0 6.6 0M886.32 525.90a3.3 3.3 0 1 0 -6.6 0a3.3 3.3 0 1 0 6.6 0M899.20 525.90a3.3 3.3 0 1 0 -6.6 0a3.3 3.3 0 1 0 6.6 0M912.07 525.90a3.3 3.3 0 1 0 -6.6 0a3.3 3.3 0 1 0 6.6 0M924.95 525.90a3.3 3.3 0 1 0 -6.6 0a3.3 3.3 0 1 0 6.6 0M937.82 525.90a3.3 3.3 0 1 0 -6.6 0a3.3 3.3 0 1 0 6.6 0M950.70 525.90a3.3 3.3 0 1 0 -6.6 0a3.3 3.3 0 1 0 6.6 0M963.57 525.90a3.3 3.3 0 1 0 -6.6 0a3.3 3.3 0 1 0 6.6 0M590.20 564.40a3.3 3.3 0 1 0 -6.6 0a3.3 3.3 0 1 0 6.6 0M603.07 564.40a3.3 3.3 0 1 0 -6.6 0a3.3 3.3 0 1 0 6.6 0M615.95 564.40a3.3 3.3 0 1 0 -6.6 0a3.3 3.3 0 1 0 6.6 0M628.82 564.40a3.3 3.3 0 1 0 -6.6 0a3.3 3.3 0 1 0 6.6 0M641.70 564.40a3.3 3.3 0 1 0 -6.6 0a3.3 3.3 0 1 0 6.6 0M654.57 564.40a3.3 3.3 0 1 0 -6.6 0a3.3 3.3 0 1 0 6.6 0M667.45 564.40a3.3 3.3 0 1 0 -6.6 0a3.3 3.3 0 1 0 6.6 0M680.32 564.40a3.3 3.3 0 1 0 -6.6 0a3.3 3.3 0 1 0 6.6 0M693.20 564.40a3.3 3.3 0 1 0 -6.6 0a3.3 3.3 0 1 0 6.6 0M706.07 564.40a3.3 3.3 0 1 0 -6.6 0a3.3 3.3 0 1 0 6.6 0M718.95 564.40a3.3 3.3 0 1 0 -6.6 0a3.3 3.3 0 1 0 6.6 0M731.82 564.40a3.3 3.3 0 1 0 -6.6 0a3.3 3.3 0 1 0 6.6 0M744.70 564.40a3.3 3.3 0 1 0 -6.6 0a3.3 3.3 0 1 0 6.6 0M757.57 564.40a3.3 3.3 0 1 0 -6.6 0a3.3 3.3 0 1 0 6.6 0M770.45 564.40a3.3 3.3 0 1 0 -6.6 0a3.3 3.3 0 1 0 6.6 0M783.32 564.40a3.3 3.3 0 1 0 -6.6 0a3.3 3.3 0 1 0 6.6 0M796.20 564.40a3.3 3.3 0 1 0 -6.6 0a3.3 3.3 0 1 0 6.6 0M809.07 564.40a3.3 3.3 0 1 0 -6.6 0a3.3 3.3 0 1 0 6.6 0M821.95 564.40a3.3 3.3 0 1 0 -6.6 0a3.3 3.3 0 1 0 6.6 0M834.82 564.40a3.3 3.3 0 1 0 -6.6 0a3.3 3.3 0 1 0 6.6 0M847.70 564.40a3.3 3.3 0 1 0 -6.6 0a3.3 3.3 0 1 0 6.6 0M860.57 564.40a3.3 3.3 0 1 0 -6.6 0a3.3 3.3 0 1 0 6.6 0M873.45 564.40a3.3 3.3 0 1 0 -6.6 0a3.3 3.3 0 1 0 6.6 0M886.32 564.40a3.3 3.3 0 1 0 -6.6 0a3.3 3.3 0 1 0 6.6 0M899.20 564.40a3.3 3.3 0 1 0 -6.6 0a3.3 3.3 0 1 0 6.6 0M912.07 564.40a3.3 3.3 0 1 0 -6.6 0a3.3 3.3 0 1 0 6.6 0M924.95 564.40a3.3 3.3 0 1 0 -6.6 0a3.3 3.3 0 1 0 6.6 0M937.82 564.40a3.3 3.3 0 1 0 -6.6 0a3.3 3.3 0 1 0 6.6 0M950.70 564.40a3.3 3.3 0 1 0 -6.6 0a3.3 3.3 0 1 0 6.6 0M963.57 564.40a3.3 3.3 0 1 0 -6.6 0a3.3 3.3 0 1 0 6.6 0M590.20 577.40a3.3 3.3 0 1 0 -6.6 0a3.3 3.3 0 1 0 6.6 0M603.07 577.40a3.3 3.3 0 1 0 -6.6 0a3.3 3.3 0 1 0 6.6 0M615.95 577.40a3.3 3.3 0 1 0 -6.6 0a3.3 3.3 0 1 0 6.6 0M628.82 577.40a3.3 3.3 0 1 0 -6.6 0a3.3 3.3 0 1 0 6.6 0M641.70 577.40a3.3 3.3 0 1 0 -6.6 0a3.3 3.3 0 1 0 6.6 0M654.57 577.40a3.3 3.3 0 1 0 -6.6 0a3.3 3.3 0 1 0 6.6 0M667.45 577.40a3.3 3.3 0 1 0 -6.6 0a3.3 3.3 0 1 0 6.6 0M680.32 577.40a3.3 3.3 0 1 0 -6.6 0a3.3 3.3 0 1 0 6.6 0M693.20 577.40a3.3 3.3 0 1 0 -6.6 0a3.3 3.3 0 1 0 6.6 0M706.07 577.40a3.3 3.3 0 1 0 -6.6 0a3.3 3.3 0 1 0 6.6 0M718.95 577.40a3.3 3.3 0 1 0 -6.6 0a3.3 3.3 0 1 0 6.6 0M731.82 577.40a3.3 3.3 0 1 0 -6.6 0a3.3 3.3 0 1 0 6.6 0M744.70 577.40a3.3 3.3 0 1 0 -6.6 0a3.3 3.3 0 1 0 6.6 0M757.57 577.40a3.3 3.3 0 1 0 -6.6 0a3.3 3.3 0 1 0 6.6 0M770.45 577.40a3.3 3.3 0 1 0 -6.6 0a3.3 3.3 0 1 0 6.6 0M783.32 577.40a3.3 3.3 0 1 0 -6.6 0a3.3 3.3 0 1 0 6.6 0M796.20 577.40a3.3 3.3 0 1 0 -6.6 0a3.3 3.3 0 1 0 6.6 0M809.07 577.40a3.3 3.3 0 1 0 -6.6 0a3.3 3.3 0 1 0 6.6 0M821.95 577.40a3.3 3.3 0 1 0 -6.6 0a3.3 3.3 0 1 0 6.6 0M834.82 577.40a3.3 3.3 0 1 0 -6.6 0a3.3 3.3 0 1 0 6.6 0M847.70 577.40a3.3 3.3 0 1 0 -6.6 0a3.3 3.3 0 1 0 6.6 0M860.57 577.40a3.3 3.3 0 1 0 -6.6 0a3.3 3.3 0 1 0 6.6 0M873.45 577.40a3.3 3.3 0 1 0 -6.6 0a3.3 3.3 0 1 0 6.6 0M886.32 577.40a3.3 3.3 0 1 0 -6.6 0a3.3 3.3 0 1 0 6.6 0M899.20 577.40a3.3 3.3 0 1 0 -6.6 0a3.3 3.3 0 1 0 6.6 0M912.07 577.40a3.3 3.3 0 1 0 -6.6 0a3.3 3.3 0 1 0 6.6 0M924.95 577.40a3.3 3.3 0 1 0 -6.6 0a3.3 3.3 0 1 0 6.6 0M937.82 577.40a3.3 3.3 0 1 0 -6.6 0a3.3 3.3 0 1 0 6.6 0M950.70 577.40a3.3 3.3 0 1 0 -6.6 0a3.3 3.3 0 1 0 6.6 0M963.57 577.40a3.3 3.3 0 1 0 -6.6 0a3.3 3.3 0 1 0 6.6 0" fill="#f1f1f1"/><path d="M590.00 331.70a3.1 3.1 0 1 0 -6.2 0a3.1 3.1 0 1 0 6.2 0M602.88 331.70a3.1 3.1 0 1 0 -6.2 0a3.1 3.1 0 1 0 6.2 0M615.75 331.70a3.1 3.1 0 1 0 -6.2 0a3.1 3.1 0 1 0 6.2 0M628.62 331.70a3.1 3.1 0 1 0 -6.2 0a3.1 3.1 0 1 0 6.2 0M641.50 331.70a3.1 3.1 0 1 0 -6.2 0a3.1 3.1 0 1 0 6.2 0M654.38 331.70a3.1 3.1 0 1 0 -6.2 0a3.1 3.1 0 1 0 6.2 0M667.25 331.70a3.1 3.1 0 1 0 -6.2 0a3.1 3.1 0 1 0 6.2 0M680.12 331.70a3.1 3.1 0 1 0 -6.2 0a3.1 3.1 0 1 0 6.2 0M693.00 331.70a3.1 3.1 0 1 0 -6.2 0a3.1 3.1 0 1 0 6.2 0M705.88 331.70a3.1 3.1 0 1 0 -6.2 0a3.1 3.1 0 1 0 6.2 0M718.75 331.70a3.1 3.1 0 1 0 -6.2 0a3.1 3.1 0 1 0 6.2 0M731.62 331.70a3.1 3.1 0 1 0 -6.2 0a3.1 3.1 0 1 0 6.2 0M744.50 331.70a3.1 3.1 0 1 0 -6.2 0a3.1 3.1 0 1 0 6.2 0M757.38 331.70a3.1 3.1 0 1 0 -6.2 0a3.1 3.1 0 1 0 6.2 0M770.25 331.70a3.1 3.1 0 1 0 -6.2 0a3.1 3.1 0 1 0 6.2 0M783.12 331.70a3.1 3.1 0 1 0 -6.2 0a3.1 3.1 0 1 0 6.2 0M796.00 331.70a3.1 3.1 0 1 0 -6.2 0a3.1 3.1 0 1 0 6.2 0M808.88 331.70a3.1 3.1 0 1 0 -6.2 0a3.1 3.1 0 1 0 6.2 0M821.75 331.70a3.1 3.1 0 1 0 -6.2 0a3.1 3.1 0 1 0 6.2 0M834.62 331.70a3.1 3.1 0 1 0 -6.2 0a3.1 3.1 0 1 0 6.2 0M847.50 331.70a3.1 3.1 0 1 0 -6.2 0a3.1 3.1 0 1 0 6.2 0M860.38 331.70a3.1 3.1 0 1 0 -6.2 0a3.1 3.1 0 1 0 6.2 0M873.25 331.70a3.1 3.1 0 1 0 -6.2 0a3.1 3.1 0 1 0 6.2 0M886.12 331.70a3.1 3.1 0 1 0 -6.2 0a3.1 3.1 0 1 0 6.2 0M899.00 331.70a3.1 3.1 0 1 0 -6.2 0a3.1 3.1 0 1 0 6.2 0M911.88 331.70a3.1 3.1 0 1 0 -6.2 0a3.1 3.1 0 1 0 6.2 0M924.75 331.70a3.1 3.1 0 1 0 -6.2 0a3.1 3.1 0 1 0 6.2 0M937.62 331.70a3.1 3.1 0 1 0 -6.2 0a3.1 3.1 0 1 0 6.2 0M950.50 331.70a3.1 3.1 0 1 0 -6.2 0a3.1 3.1 0 1 0 6.2 0M963.38 331.70a3.1 3.1 0 1 0 -6.2 0a3.1 3.1 0 1 0 6.2 0M590.00 344.50a3.1 3.1 0 1 0 -6.2 0a3.1 3.1 0 1 0 6.2 0M602.88 344.50a3.1 3.1 0 1 0 -6.2 0a3.1 3.1 0 1 0 6.2 0M615.75 344.50a3.1 3.1 0 1 0 -6.2 0a3.1 3.1 0 1 0 6.2 0M628.62 344.50a3.1 3.1 0 1 0 -6.2 0a3.1 3.1 0 1 0 6.2 0M641.50 344.50a3.1 3.1 0 1 0 -6.2 0a3.1 3.1 0 1 0 6.2 0M654.38 344.50a3.1 3.1 0 1 0 -6.2 0a3.1 3.1 0 1 0 6.2 0M667.25 344.50a3.1 3.1 0 1 0 -6.2 0a3.1 3.1 0 1 0 6.2 0M680.12 344.50a3.1 3.1 0 1 0 -6.2 0a3.1 3.1 0 1 0 6.2 0M693.00 344.50a3.1 3.1 0 1 0 -6.2 0a3.1 3.1 0 1 0 6.2 0M705.88 344.50a3.1 3.1 0 1 0 -6.2 0a3.1 3.1 0 1 0 6.2 0M718.75 344.50a3.1 3.1 0 1 0 -6.2 0a3.1 3.1 0 1 0 6.2 0M731.62 344.50a3.1 3.1 0 1 0 -6.2 0a3.1 3.1 0 1 0 6.2 0M744.50 344.50a3.1 3.1 0 1 0 -6.2 0a3.1 3.1 0 1 0 6.2 0M757.38 344.50a3.1 3.1 0 1 0 -6.2 0a3.1 3.1 0 1 0 6.2 0M770.25 344.50a3.1 3.1 0 1 0 -6.2 0a3.1 3.1 0 1 0 6.2 0M783.12 344.50a3.1 3.1 0 1 0 -6.2 0a3.1 3.1 0 1 0 6.2 0M796.00 344.50a3.1 3.1 0 1 0 -6.2 0a3.1 3.1 0 1 0 6.2 0M808.88 344.50a3.1 3.1 0 1 0 -6.2 0a3.1 3.1 0 1 0 6.2 0M821.75 344.50a3.1 3.1 0 1 0 -6.2 0a3.1 3.1 0 1 0 6.2 0M834.62 344.50a3.1 3.1 0 1 0 -6.2 0a3.1 3.1 0 1 0 6.2 0M847.50 344.50a3.1 3.1 0 1 0 -6.2 0a3.1 3.1 0 1 0 6.2 0M860.38 344.50a3.1 3.1 0 1 0 -6.2 0a3.1 3.1 0 1 0 6.2 0M873.25 344.50a3.1 3.1 0 1 0 -6.2 0a3.1 3.1 0 1 0 6.2 0M886.12 344.50a3.1 3.1 0 1 0 -6.2 0a3.1 3.1 0 1 0 6.2 0M899.00 344.50a3.1 3.1 0 1 0 -6.2 0a3.1 3.1 0 1 0 6.2 0M911.88 344.50a3.1 3.1 0 1 0 -6.2 0a3.1 3.1 0 1 0 6.2 0M924.75 344.50a3.1 3.1 0 1 0 -6.2 0a3.1 3.1 0 1 0 6.2 0M937.62 344.50a3.1 3.1 0 1 0 -6.2 0a3.1 3.1 0 1 0 6.2 0M950.50 344.50a3.1 3.1 0 1 0 -6.2 0a3.1 3.1 0 1 0 6.2 0M963.38 344.50a3.1 3.1 0 1 0 -6.2 0a3.1 3.1 0 1 0 6.2 0M590.00 382.90a3.1 3.1 0 1 0 -6.2 0a3.1 3.1 0 1 0 6.2 0M602.88 382.90a3.1 3.1 0 1 0 -6.2 0a3.1 3.1 0 1 0 6.2 0M615.75 382.90a3.1 3.1 0 1 0 -6.2 0a3.1 3.1 0 1 0 6.2 0M628.62 382.90a3.1 3.1 0 1 0 -6.2 0a3.1 3.1 0 1 0 6.2 0M641.50 382.90a3.1 3.1 0 1 0 -6.2 0a3.1 3.1 0 1 0 6.2 0M654.38 382.90a3.1 3.1 0 1 0 -6.2 0a3.1 3.1 0 1 0 6.2 0M667.25 382.90a3.1 3.1 0 1 0 -6.2 0a3.1 3.1 0 1 0 6.2 0M680.12 382.90a3.1 3.1 0 1 0 -6.2 0a3.1 3.1 0 1 0 6.2 0M693.00 382.90a3.1 3.1 0 1 0 -6.2 0a3.1 3.1 0 1 0 6.2 0M705.88 382.90a3.1 3.1 0 1 0 -6.2 0a3.1 3.1 0 1 0 6.2 0M718.75 382.90a3.1 3.1 0 1 0 -6.2 0a3.1 3.1 0 1 0 6.2 0M731.62 382.90a3.1 3.1 0 1 0 -6.2 0a3.1 3.1 0 1 0 6.2 0M744.50 382.90a3.1 3.1 0 1 0 -6.2 0a3.1 3.1 0 1 0 6.2 0M757.38 382.90a3.1 3.1 0 1 0 -6.2 0a3.1 3.1 0 1 0 6.2 0M770.25 382.90a3.1 3.1 0 1 0 -6.2 0a3.1 3.1 0 1 0 6.2 0M783.12 382.90a3.1 3.1 0 1 0 -6.2 0a3.1 3.1 0 1 0 6.2 0M796.00 382.90a3.1 3.1 0 1 0 -6.2 0a3.1 3.1 0 1 0 6.2 0M808.88 382.90a3.1 3.1 0 1 0 -6.2 0a3.1 3.1 0 1 0 6.2 0M821.75 382.90a3.1 3.1 0 1 0 -6.2 0a3.1 3.1 0 1 0 6.2 0M834.62 382.90a3.1 3.1 0 1 0 -6.2 0a3.1 3.1 0 1 0 6.2 0M847.50 382.90a3.1 3.1 0 1 0 -6.2 0a3.1 3.1 0 1 0 6.2 0M860.38 382.90a3.1 3.1 0 1 0 -6.2 0a3.1 3.1 0 1 0 6.2 0M873.25 382.90a3.1 3.1 0 1 0 -6.2 0a3.1 3.1 0 1 0 6.2 0M886.12 382.90a3.1 3.1 0 1 0 -6.2 0a3.1 3.1 0 1 0 6.2 0M899.00 382.90a3.1 3.1 0 1 0 -6.2 0a3.1 3.1 0 1 0 6.2 0M911.88 382.90a3.1 3.1 0 1 0 -6.2 0a3.1 3.1 0 1 0 6.2 0M924.75 382.90a3.1 3.1 0 1 0 -6.2 0a3.1 3.1 0 1 0 6.2 0M937.62 382.90a3.1 3.1 0 1 0 -6.2 0a3.1 3.1 0 1 0 6.2 0M950.50 382.90a3.1 3.1 0 1 0 -6.2 0a3.1 3.1 0 1 0 6.2 0M963.38 382.90a3.1 3.1 0 1 0 -6.2 0a3.1 3.1 0 1 0 6.2 0M590.00 395.80a3.1 3.1 0 1 0 -6.2 0a3.1 3.1 0 1 0 6.2 0M602.88 395.80a3.1 3.1 0 1 0 -6.2 0a3.1 3.1 0 1 0 6.2 0M615.75 395.80a3.1 3.1 0 1 0 -6.2 0a3.1 3.1 0 1 0 6.2 0M628.62 395.80a3.1 3.1 0 1 0 -6.2 0a3.1 3.1 0 1 0 6.2 0M641.50 395.80a3.1 3.1 0 1 0 -6.2 0a3.1 3.1 0 1 0 6.2 0M654.38 395.80a3.1 3.1 0 1 0 -6.2 0a3.1 3.1 0 1 0 6.2 0M667.25 395.80a3.1 3.1 0 1 0 -6.2 0a3.1 3.1 0 1 0 6.2 0M680.12 395.80a3.1 3.1 0 1 0 -6.2 0a3.1 3.1 0 1 0 6.2 0M693.00 395.80a3.1 3.1 0 1 0 -6.2 0a3.1 3.1 0 1 0 6.2 0M705.88 395.80a3.1 3.1 0 1 0 -6.2 0a3.1 3.1 0 1 0 6.2 0M718.75 395.80a3.1 3.1 0 1 0 -6.2 0a3.1 3.1 0 1 0 6.2 0M731.62 395.80a3.1 3.1 0 1 0 -6.2 0a3.1 3.1 0 1 0 6.2 0M744.50 395.80a3.1 3.1 0 1 0 -6.2 0a3.1 3.1 0 1 0 6.2 0M757.38 395.80a3.1 3.1 0 1 0 -6.2 0a3.1 3.1 0 1 0 6.2 0M770.25 395.80a3.1 3.1 0 1 0 -6.2 0a3.1 3.1 0 1 0 6.2 0M783.12 395.80a3.1 3.1 0 1 0 -6.2 0a3.1 3.1 0 1 0 6.2 0M796.00 395.80a3.1 3.1 0 1 0 -6.2 0a3.1 3.1 0 1 0 6.2 0M808.88 395.80a3.1 3.1 0 1 0 -6.2 0a3.1 3.1 0 1 0 6.2 0M821.75 395.80a3.1 3.1 0 1 0 -6.2 0a3.1 3.1 0 1 0 6.2 0M834.62 395.80a3.1 3.1 0 1 0 -6.2 0a3.1 3.1 0 1 0 6.2 0M847.50 395.80a3.1 3.1 0 1 0 -6.2 0a3.1 3.1 0 1 0 6.2 0M860.38 395.80a3.1 3.1 0 1 0 -6.2 0a3.1 3.1 0 1 0 6.2 0M873.25 395.80a3.1 3.1 0 1 0 -6.2 0a3.1 3.1 0 1 0 6.2 0M886.12 395.80a3.1 3.1 0 1 0 -6.2 0a3.1 3.1 0 1 0 6.2 0M899.00 395.80a3.1 3.1 0 1 0 -6.2 0a3.1 3.1 0 1 0 6.2 0M911.88 395.80a3.1 3.1 0 1 0 -6.2 0a3.1 3.1 0 1 0 6.2 0M924.75 395.80a3.1 3.1 0 1 0 -6.2 0a3.1 3.1 0 1 0 6.2 0M937.62 395.80a3.1 3.1 0 1 0 -6.2 0a3.1 3.1 0 1 0 6.2 0M950.50 395.80a3.1 3.1 0 1 0 -6.2 0a3.1 3.1 0 1 0 6.2 0M963.38 395.80a3.1 3.1 0 1 0 -6.2 0a3.1 3.1 0 1 0 6.2 0M590.00 408.70a3.1 3.1 0 1 0 -6.2 0a3.1 3.1 0 1 0 6.2 0M602.88 408.70a3.1 3.1 0 1 0 -6.2 0a3.1 3.1 0 1 0 6.2 0M615.75 408.70a3.1 3.1 0 1 0 -6.2 0a3.1 3.1 0 1 0 6.2 0M628.62 408.70a3.1 3.1 0 1 0 -6.2 0a3.1 3.1 0 1 0 6.2 0M641.50 408.70a3.1 3.1 0 1 0 -6.2 0a3.1 3.1 0 1 0 6.2 0M654.38 408.70a3.1 3.1 0 1 0 -6.2 0a3.1 3.1 0 1 0 6.2 0M667.25 408.70a3.1 3.1 0 1 0 -6.2 0a3.1 3.1 0 1 0 6.2 0M680.12 408.70a3.1 3.1 0 1 0 -6.2 0a3.1 3.1 0 1 0 6.2 0M693.00 408.70a3.1 3.1 0 1 0 -6.2 0a3.1 3.1 0 1 0 6.2 0M705.88 408.70a3.1 3.1 0 1 0 -6.2 0a3.1 3.1 0 1 0 6.2 0M718.75 408.70a3.1 3.1 0 1 0 -6.2 0a3.1 3.1 0 1 0 6.2 0M731.62 408.70a3.1 3.1 0 1 0 -6.2 0a3.1 3.1 0 1 0 6.2 0M744.50 408.70a3.1 3.1 0 1 0 -6.2 0a3.1 3.1 0 1 0 6.2 0M757.38 408.70a3.1 3.1 0 1 0 -6.2 0a3.1 3.1 0 1 0 6.2 0M770.25 408.70a3.1 3.1 0 1 0 -6.2 0a3.1 3.1 0 1 0 6.2 0M783.12 408.70a3.1 3.1 0 1 0 -6.2 0a3.1 3.1 0 1 0 6.2 0M796.00 408.70a3.1 3.1 0 1 0 -6.2 0a3.1 3.1 0 1 0 6.2 0M808.88 408.70a3.1 3.1 0 1 0 -6.2 0a3.1 3.1 0 1 0 6.2 0M821.75 408.70a3.1 3.1 0 1 0 -6.2 0a3.1 3.1 0 1 0 6.2 0M834.62 408.70a3.1 3.1 0 1 0 -6.2 0a3.1 3.1 0 1 0 6.2 0M847.50 408.70a3.1 3.1 0 1 0 -6.2 0a3.1 3.1 0 1 0 6.2 0M860.38 408.70a3.1 3.1 0 1 0 -6.2 0a3.1 3.1 0 1 0 6.2 0M873.25 408.70a3.1 3.1 0 1 0 -6.2 0a3.1 3.1 0 1 0 6.2 0M886.12 408.70a3.1 3.1 0 1 0 -6.2 0a3.1 3.1 0 1 0 6.2 0M899.00 408.70a3.1 3.1 0 1 0 -6.2 0a3.1 3.1 0 1 0 6.2 0M911.88 408.70a3.1 3.1 0 1 0 -6.2 0a3.1 3.1 0 1 0 6.2 0M924.75 408.70a3.1 3.1 0 1 0 -6.2 0a3.1 3.1 0 1 0 6.2 0M937.62 408.70a3.1 3.1 0 1 0 -6.2 0a3.1 3.1 0 1 0 6.2 0M950.50 408.70a3.1 3.1 0 1 0 -6.2 0a3.1 3.1 0 1 0 6.2 0M963.38 408.70a3.1 3.1 0 1 0 -6.2 0a3.1 3.1 0 1 0 6.2 0M590.00 421.60a3.1 3.1 0 1 0 -6.2 0a3.1 3.1 0 1 0 6.2 0M602.88 421.60a3.1 3.1 0 1 0 -6.2 0a3.1 3.1 0 1 0 6.2 0M615.75 421.60a3.1 3.1 0 1 0 -6.2 0a3.1 3.1 0 1 0 6.2 0M628.62 421.60a3.1 3.1 0 1 0 -6.2 0a3.1 3.1 0 1 0 6.2 0M641.50 421.60a3.1 3.1 0 1 0 -6.2 0a3.1 3.1 0 1 0 6.2 0M654.38 421.60a3.1 3.1 0 1 0 -6.2 0a3.1 3.1 0 1 0 6.2 0M667.25 421.60a3.1 3.1 0 1 0 -6.2 0a3.1 3.1 0 1 0 6.2 0M680.12 421.60a3.1 3.1 0 1 0 -6.2 0a3.1 3.1 0 1 0 6.2 0M693.00 421.60a3.1 3.1 0 1 0 -6.2 0a3.1 3.1 0 1 0 6.2 0M705.88 421.60a3.1 3.1 0 1 0 -6.2 0a3.1 3.1 0 1 0 6.2 0M718.75 421.60a3.1 3.1 0 1 0 -6.2 0a3.1 3.1 0 1 0 6.2 0M731.62 421.60a3.1 3.1 0 1 0 -6.2 0a3.1 3.1 0 1 0 6.2 0M744.50 421.60a3.1 3.1 0 1 0 -6.2 0a3.1 3.1 0 1 0 6.2 0M757.38 421.60a3.1 3.1 0 1 0 -6.2 0a3.1 3.1 0 1 0 6.2 0M770.25 421.60a3.1 3.1 0 1 0 -6.2 0a3.1 3.1 0 1 0 6.2 0M783.12 421.60a3.1 3.1 0 1 0 -6.2 0a3.1 3.1 0 1 0 6.2 0M796.00 421.60a3.1 3.1 0 1 0 -6.2 0a3.1 3.1 0 1 0 6.2 0M808.88 421.60a3.1 3.1 0 1 0 -6.2 0a3.1 3.1 0 1 0 6.2 0M821.75 421.60a3.1 3.1 0 1 0 -6.2 0a3.1 3.1 0 1 0 6.2 0M834.62 421.60a3.1 3.1 0 1 0 -6.2 0a3.1 3.1 0 1 0 6.2 0M847.50 421.60a3.1 3.1 0 1 0 -6.2 0a3.1 3.1 0 1 0 6.2 0M860.38 421.60a3.1 3.1 0 1 0 -6.2 0a3.1 3.1 0 1 0 6.2 0M873.25 421.60a3.1 3.1 0 1 0 -6.2 0a3.1 3.1 0 1 0 6.2 0M886.12 421.60a3.1 3.1 0 1 0 -6.2 0a3.1 3.1 0 1 0 6.2 0M899.00 421.60a3.1 3.1 0 1 0 -6.2 0a3.1 3.1 0 1 0 6.2 0M911.88 421.60a3.1 3.1 0 1 0 -6.2 0a3.1 3.1 0 1 0 6.2 0M924.75 421.60a3.1 3.1 0 1 0 -6.2 0a3.1 3.1 0 1 0 6.2 0M937.62 421.60a3.1 3.1 0 1 0 -6.2 0a3.1 3.1 0 1 0 6.2 0M950.50 421.60a3.1 3.1 0 1 0 -6.2 0a3.1 3.1 0 1 0 6.2 0M963.38 421.60a3.1 3.1 0 1 0 -6.2 0a3.1 3.1 0 1 0 6.2 0M590.00 434.50a3.1 3.1 0 1 0 -6.2 0a3.1 3.1 0 1 0 6.2 0M602.88 434.50a3.1 3.1 0 1 0 -6.2 0a3.1 3.1 0 1 0 6.2 0M615.75 434.50a3.1 3.1 0 1 0 -6.2 0a3.1 3.1 0 1 0 6.2 0M628.62 434.50a3.1 3.1 0 1 0 -6.2 0a3.1 3.1 0 1 0 6.2 0M641.50 434.50a3.1 3.1 0 1 0 -6.2 0a3.1 3.1 0 1 0 6.2 0M654.38 434.50a3.1 3.1 0 1 0 -6.2 0a3.1 3.1 0 1 0 6.2 0M667.25 434.50a3.1 3.1 0 1 0 -6.2 0a3.1 3.1 0 1 0 6.2 0M680.12 434.50a3.1 3.1 0 1 0 -6.2 0a3.1 3.1 0 1 0 6.2 0M693.00 434.50a3.1 3.1 0 1 0 -6.2 0a3.1 3.1 0 1 0 6.2 0M705.88 434.50a3.1 3.1 0 1 0 -6.2 0a3.1 3.1 0 1 0 6.2 0M718.75 434.50a3.1 3.1 0 1 0 -6.2 0a3.1 3.1 0 1 0 6.2 0M731.62 434.50a3.1 3.1 0 1 0 -6.2 0a3.1 3.1 0 1 0 6.2 0M744.50 434.50a3.1 3.1 0 1 0 -6.2 0a3.1 3.1 0 1 0 6.2 0M757.38 434.50a3.1 3.1 0 1 0 -6.2 0a3.1 3.1 0 1 0 6.2 0M770.25 434.50a3.1 3.1 0 1 0 -6.2 0a3.1 3.1 0 1 0 6.2 0M783.12 434.50a3.1 3.1 0 1 0 -6.2 0a3.1 3.1 0 1 0 6.2 0M796.00 434.50a3.1 3.1 0 1 0 -6.2 0a3.1 3.1 0 1 0 6.2 0M808.88 434.50a3.1 3.1 0 1 0 -6.2 0a3.1 3.1 0 1 0 6.2 0M821.75 434.50a3.1 3.1 0 1 0 -6.2 0a3.1 3.1 0 1 0 6.2 0M834.62 434.50a3.1 3.1 0 1 0 -6.2 0a3.1 3.1 0 1 0 6.2 0M847.50 434.50a3.1 3.1 0 1 0 -6.2 0a3.1 3.1 0 1 0 6.2 0M860.38 434.50a3.1 3.1 0 1 0 -6.2 0a3.1 3.1 0 1 0 6.2 0M873.25 434.50a3.1 3.1 0 1 0 -6.2 0a3.1 3.1 0 1 0 6.2 0M886.12 434.50a3.1 3.1 0 1 0 -6.2 0a3.1 3.1 0 1 0 6.2 0M899.00 434.50a3.1 3.1 0 1 0 -6.2 0a3.1 3.1 0 1 0 6.2 0M911.88 434.50a3.1 3.1 0 1 0 -6.2 0a3.1 3.1 0 1 0 6.2 0M924.75 434.50a3.1 3.1 0 1 0 -6.2 0a3.1 3.1 0 1 0 6.2 0M937.62 434.50a3.1 3.1 0 1 0 -6.2 0a3.1 3.1 0 1 0 6.2 0M950.50 434.50a3.1 3.1 0 1 0 -6.2 0a3.1 3.1 0 1 0 6.2 0M963.38 434.50a3.1 3.1 0 1 0 -6.2 0a3.1 3.1 0 1 0 6.2 0M590.00 473.20a3.1 3.1 0 1 0 -6.2 0a3.1 3.1 0 1 0 6.2 0M602.88 473.20a3.1 3.1 0 1 0 -6.2 0a3.1 3.1 0 1 0 6.2 0M615.75 473.20a3.1 3.1 0 1 0 -6.2 0a3.1 3.1 0 1 0 6.2 0M628.62 473.20a3.1 3.1 0 1 0 -6.2 0a3.1 3.1 0 1 0 6.2 0M641.50 473.20a3.1 3.1 0 1 0 -6.2 0a3.1 3.1 0 1 0 6.2 0M654.38 473.20a3.1 3.1 0 1 0 -6.2 0a3.1 3.1 0 1 0 6.2 0M667.25 473.20a3.1 3.1 0 1 0 -6.2 0a3.1 3.1 0 1 0 6.2 0M680.12 473.20a3.1 3.1 0 1 0 -6.2 0a3.1 3.1 0 1 0 6.2 0M693.00 473.20a3.1 3.1 0 1 0 -6.2 0a3.1 3.1 0 1 0 6.2 0M705.88 473.20a3.1 3.1 0 1 0 -6.2 0a3.1 3.1 0 1 0 6.2 0M718.75 473.20a3.1 3.1 0 1 0 -6.2 0a3.1 3.1 0 1 0 6.2 0M731.62 473.20a3.1 3.1 0 1 0 -6.2 0a3.1 3.1 0 1 0 6.2 0M744.50 473.20a3.1 3.1 0 1 0 -6.2 0a3.1 3.1 0 1 0 6.2 0M757.38 473.20a3.1 3.1 0 1 0 -6.2 0a3.1 3.1 0 1 0 6.2 0M770.25 473.20a3.1 3.1 0 1 0 -6.2 0a3.1 3.1 0 1 0 6.2 0M783.12 473.20a3.1 3.1 0 1 0 -6.2 0a3.1 3.1 0 1 0 6.2 0M796.00 473.20a3.1 3.1 0 1 0 -6.2 0a3.1 3.1 0 1 0 6.2 0M808.88 473.20a3.1 3.1 0 1 0 -6.2 0a3.1 3.1 0 1 0 6.2 0M821.75 473.20a3.1 3.1 0 1 0 -6.2 0a3.1 3.1 0 1 0 6.2 0M834.62 473.20a3.1 3.1 0 1 0 -6.2 0a3.1 3.1 0 1 0 6.2 0M847.50 473.20a3.1 3.1 0 1 0 -6.2 0a3.1 3.1 0 1 0 6.2 0M860.38 473.20a3.1 3.1 0 1 0 -6.2 0a3.1 3.1 0 1 0 6.2 0M873.25 473.20a3.1 3.1 0 1 0 -6.2 0a3.1 3.1 0 1 0 6.2 0M886.12 473.20a3.1 3.1 0 1 0 -6.2 0a3.1 3.1 0 1 0 6.2 0M899.00 473.20a3.1 3.1 0 1 0 -6.2 0a3.1 3.1 0 1 0 6.2 0M911.88 473.20a3.1 3.1 0 1 0 -6.2 0a3.1 3.1 0 1 0 6.2 0M924.75 473.20a3.1 3.1 0 1 0 -6.2 0a3.1 3.1 0 1 0 6.2 0M937.62 473.20a3.1 3.1 0 1 0 -6.2 0a3.1 3.1 0 1 0 6.2 0M950.50 473.20a3.1 3.1 0 1 0 -6.2 0a3.1 3.1 0 1 0 6.2 0M963.38 473.20a3.1 3.1 0 1 0 -6.2 0a3.1 3.1 0 1 0 6.2 0M590.00 486.10a3.1 3.1 0 1 0 -6.2 0a3.1 3.1 0 1 0 6.2 0M602.88 486.10a3.1 3.1 0 1 0 -6.2 0a3.1 3.1 0 1 0 6.2 0M615.75 486.10a3.1 3.1 0 1 0 -6.2 0a3.1 3.1 0 1 0 6.2 0M628.62 486.10a3.1 3.1 0 1 0 -6.2 0a3.1 3.1 0 1 0 6.2 0M641.50 486.10a3.1 3.1 0 1 0 -6.2 0a3.1 3.1 0 1 0 6.2 0M654.38 486.10a3.1 3.1 0 1 0 -6.2 0a3.1 3.1 0 1 0 6.2 0M667.25 486.10a3.1 3.1 0 1 0 -6.2 0a3.1 3.1 0 1 0 6.2 0M680.12 486.10a3.1 3.1 0 1 0 -6.2 0a3.1 3.1 0 1 0 6.2 0M693.00 486.10a3.1 3.1 0 1 0 -6.2 0a3.1 3.1 0 1 0 6.2 0M705.88 486.10a3.1 3.1 0 1 0 -6.2 0a3.1 3.1 0 1 0 6.2 0M718.75 486.10a3.1 3.1 0 1 0 -6.2 0a3.1 3.1 0 1 0 6.2 0M731.62 486.10a3.1 3.1 0 1 0 -6.2 0a3.1 3.1 0 1 0 6.2 0M744.50 486.10a3.1 3.1 0 1 0 -6.2 0a3.1 3.1 0 1 0 6.2 0M757.38 486.10a3.1 3.1 0 1 0 -6.2 0a3.1 3.1 0 1 0 6.2 0M770.25 486.10a3.1 3.1 0 1 0 -6.2 0a3.1 3.1 0 1 0 6.2 0M783.12 486.10a3.1 3.1 0 1 0 -6.2 0a3.1 3.1 0 1 0 6.2 0M796.00 486.10a3.1 3.1 0 1 0 -6.2 0a3.1 3.1 0 1 0 6.2 0M808.88 486.10a3.1 3.1 0 1 0 -6.2 0a3.1 3.1 0 1 0 6.2 0M821.75 486.10a3.1 3.1 0 1 0 -6.2 0a3.1 3.1 0 1 0 6.2 0M834.62 486.10a3.1 3.1 0 1 0 -6.2 0a3.1 3.1 0 1 0 6.2 0M847.50 486.10a3.1 3.1 0 1 0 -6.2 0a3.1 3.1 0 1 0 6.2 0M860.38 486.10a3.1 3.1 0 1 0 -6.2 0a3.1 3.1 0 1 0 6.2 0M873.25 486.10a3.1 3.1 0 1 0 -6.2 0a3.1 3.1 0 1 0 6.2 0M886.12 486.10a3.1 3.1 0 1 0 -6.2 0a3.1 3.1 0 1 0 6.2 0M899.00 486.10a3.1 3.1 0 1 0 -6.2 0a3.1 3.1 0 1 0 6.2 0M911.88 486.10a3.1 3.1 0 1 0 -6.2 0a3.1 3.1 0 1 0 6.2 0M924.75 486.10a3.1 3.1 0 1 0 -6.2 0a3.1 3.1 0 1 0 6.2 0M937.62 486.10a3.1 3.1 0 1 0 -6.2 0a3.1 3.1 0 1 0 6.2 0M950.50 486.10a3.1 3.1 0 1 0 -6.2 0a3.1 3.1 0 1 0 6.2 0M963.38 486.10a3.1 3.1 0 1 0 -6.2 0a3.1 3.1 0 1 0 6.2 0M590.00 498.90a3.1 3.1 0 1 0 -6.2 0a3.1 3.1 0 1 0 6.2 0M602.88 498.90a3.1 3.1 0 1 0 -6.2 0a3.1 3.1 0 1 0 6.2 0M615.75 498.90a3.1 3.1 0 1 0 -6.2 0a3.1 3.1 0 1 0 6.2 0M628.62 498.90a3.1 3.1 0 1 0 -6.2 0a3.1 3.1 0 1 0 6.2 0M641.50 498.90a3.1 3.1 0 1 0 -6.2 0a3.1 3.1 0 1 0 6.2 0M654.38 498.90a3.1 3.1 0 1 0 -6.2 0a3.1 3.1 0 1 0 6.2 0M667.25 498.90a3.1 3.1 0 1 0 -6.2 0a3.1 3.1 0 1 0 6.2 0M680.12 498.90a3.1 3.1 0 1 0 -6.2 0a3.1 3.1 0 1 0 6.2 0M693.00 498.90a3.1 3.1 0 1 0 -6.2 0a3.1 3.1 0 1 0 6.2 0M705.88 498.90a3.1 3.1 0 1 0 -6.2 0a3.1 3.1 0 1 0 6.2 0M718.75 498.90a3.1 3.1 0 1 0 -6.2 0a3.1 3.1 0 1 0 6.2 0M731.62 498.90a3.1 3.1 0 1 0 -6.2 0a3.1 3.1 0 1 0 6.2 0M744.50 498.90a3.1 3.1 0 1 0 -6.2 0a3.1 3.1 0 1 0 6.2 0M757.38 498.90a3.1 3.1 0 1 0 -6.2 0a3.1 3.1 0 1 0 6.2 0M770.25 498.90a3.1 3.1 0 1 0 -6.2 0a3.1 3.1 0 1 0 6.2 0M783.12 498.90a3.1 3.1 0 1 0 -6.2 0a3.1 3.1 0 1 0 6.2 0M796.00 498.90a3.1 3.1 0 1 0 -6.2 0a3.1 3.1 0 1 0 6.2 0M808.88 498.90a3.1 3.1 0 1 0 -6.2 0a3.1 3.1 0 1 0 6.2 0M821.75 498.90a3.1 3.1 0 1 0 -6.2 0a3.1 3.1 0 1 0 6.2 0M834.62 498.90a3.1 3.1 0 1 0 -6.2 0a3.1 3.1 0 1 0 6.2 0M847.50 498.90a3.1 3.1 0 1 0 -6.2 0a3.1 3.1 0 1 0 6.2 0M860.38 498.90a3.1 3.1 0 1 0 -6.2 0a3.1 3.1 0 1 0 6.2 0M873.25 498.90a3.1 3.1 0 1 0 -6.2 0a3.1 3.1 0 1 0 6.2 0M886.12 498.90a3.1 3.1 0 1 0 -6.2 0a3.1 3.1 0 1 0 6.2 0M899.00 498.90a3.1 3.1 0 1 0 -6.2 0a3.1 3.1 0 1 0 6.2 0M911.88 498.90a3.1 3.1 0 1 0 -6.2 0a3.1 3.1 0 1 0 6.2 0M924.75 498.90a3.1 3.1 0 1 0 -6.2 0a3.1 3.1 0 1 0 6.2 0M937.62 498.90a3.1 3.1 0 1 0 -6.2 0a3.1 3.1 0 1 0 6.2 0M950.50 498.90a3.1 3.1 0 1 0 -6.2 0a3.1 3.1 0 1 0 6.2 0M963.38 498.90a3.1 3.1 0 1 0 -6.2 0a3.1 3.1 0 1 0 6.2 0M590.00 511.80a3.1 3.1 0 1 0 -6.2 0a3.1 3.1 0 1 0 6.2 0M602.88 511.80a3.1 3.1 0 1 0 -6.2 0a3.1 3.1 0 1 0 6.2 0M615.75 511.80a3.1 3.1 0 1 0 -6.2 0a3.1 3.1 0 1 0 6.2 0M628.62 511.80a3.1 3.1 0 1 0 -6.2 0a3.1 3.1 0 1 0 6.2 0M641.50 511.80a3.1 3.1 0 1 0 -6.2 0a3.1 3.1 0 1 0 6.2 0M654.38 511.80a3.1 3.1 0 1 0 -6.2 0a3.1 3.1 0 1 0 6.2 0M667.25 511.80a3.1 3.1 0 1 0 -6.2 0a3.1 3.1 0 1 0 6.2 0M680.12 511.80a3.1 3.1 0 1 0 -6.2 0a3.1 3.1 0 1 0 6.2 0M693.00 511.80a3.1 3.1 0 1 0 -6.2 0a3.1 3.1 0 1 0 6.2 0M705.88 511.80a3.1 3.1 0 1 0 -6.2 0a3.1 3.1 0 1 0 6.2 0M718.75 511.80a3.1 3.1 0 1 0 -6.2 0a3.1 3.1 0 1 0 6.2 0M731.62 511.80a3.1 3.1 0 1 0 -6.2 0a3.1 3.1 0 1 0 6.2 0M744.50 511.80a3.1 3.1 0 1 0 -6.2 0a3.1 3.1 0 1 0 6.2 0M757.38 511.80a3.1 3.1 0 1 0 -6.2 0a3.1 3.1 0 1 0 6.2 0M770.25 511.80a3.1 3.1 0 1 0 -6.2 0a3.1 3.1 0 1 0 6.2 0M783.12 511.80a3.1 3.1 0 1 0 -6.2 0a3.1 3.1 0 1 0 6.2 0M796.00 511.80a3.1 3.1 0 1 0 -6.2 0a3.1 3.1 0 1 0 6.2 0M808.88 511.80a3.1 3.1 0 1 0 -6.2 0a3.1 3.1 0 1 0 6.2 0M821.75 511.80a3.1 3.1 0 1 0 -6.2 0a3.1 3.1 0 1 0 6.2 0M834.62 511.80a3.1 3.1 0 1 0 -6.2 0a3.1 3.1 0 1 0 6.2 0M847.50 511.80a3.1 3.1 0 1 0 -6.2 0a3.1 3.1 0 1 0 6.2 0M860.38 511.80a3.1 3.1 0 1 0 -6.2 0a3.1 3.1 0 1 0 6.2 0M873.25 511.80a3.1 3.1 0 1 0 -6.2 0a3.1 3.1 0 1 0 6.2 0M886.12 511.80a3.1 3.1 0 1 0 -6.2 0a3.1 3.1 0 1 0 6.2 0M899.00 511.80a3.1 3.1 0 1 0 -6.2 0a3.1 3.1 0 1 0 6.2 0M911.88 511.80a3.1 3.1 0 1 0 -6.2 0a3.1 3.1 0 1 0 6.2 0M924.75 511.80a3.1 3.1 0 1 0 -6.2 0a3.1 3.1 0 1 0 6.2 0M937.62 511.80a3.1 3.1 0 1 0 -6.2 0a3.1 3.1 0 1 0 6.2 0M950.50 511.80a3.1 3.1 0 1 0 -6.2 0a3.1 3.1 0 1 0 6.2 0M963.38 511.80a3.1 3.1 0 1 0 -6.2 0a3.1 3.1 0 1 0 6.2 0M590.00 524.70a3.1 3.1 0 1 0 -6.2 0a3.1 3.1 0 1 0 6.2 0M602.88 524.70a3.1 3.1 0 1 0 -6.2 0a3.1 3.1 0 1 0 6.2 0M615.75 524.70a3.1 3.1 0 1 0 -6.2 0a3.1 3.1 0 1 0 6.2 0M628.62 524.70a3.1 3.1 0 1 0 -6.2 0a3.1 3.1 0 1 0 6.2 0M641.50 524.70a3.1 3.1 0 1 0 -6.2 0a3.1 3.1 0 1 0 6.2 0M654.38 524.70a3.1 3.1 0 1 0 -6.2 0a3.1 3.1 0 1 0 6.2 0M667.25 524.70a3.1 3.1 0 1 0 -6.2 0a3.1 3.1 0 1 0 6.2 0M680.12 524.70a3.1 3.1 0 1 0 -6.2 0a3.1 3.1 0 1 0 6.2 0M693.00 524.70a3.1 3.1 0 1 0 -6.2 0a3.1 3.1 0 1 0 6.2 0M705.88 524.70a3.1 3.1 0 1 0 -6.2 0a3.1 3.1 0 1 0 6.2 0M718.75 524.70a3.1 3.1 0 1 0 -6.2 0a3.1 3.1 0 1 0 6.2 0M731.62 524.70a3.1 3.1 0 1 0 -6.2 0a3.1 3.1 0 1 0 6.2 0M744.50 524.70a3.1 3.1 0 1 0 -6.2 0a3.1 3.1 0 1 0 6.2 0M757.38 524.70a3.1 3.1 0 1 0 -6.2 0a3.1 3.1 0 1 0 6.2 0M770.25 524.70a3.1 3.1 0 1 0 -6.2 0a3.1 3.1 0 1 0 6.2 0M783.12 524.70a3.1 3.1 0 1 0 -6.2 0a3.1 3.1 0 1 0 6.2 0M796.00 524.70a3.1 3.1 0 1 0 -6.2 0a3.1 3.1 0 1 0 6.2 0M808.88 524.70a3.1 3.1 0 1 0 -6.2 0a3.1 3.1 0 1 0 6.2 0M821.75 524.70a3.1 3.1 0 1 0 -6.2 0a3.1 3.1 0 1 0 6.2 0M834.62 524.70a3.1 3.1 0 1 0 -6.2 0a3.1 3.1 0 1 0 6.2 0M847.50 524.70a3.1 3.1 0 1 0 -6.2 0a3.1 3.1 0 1 0 6.2 0M860.38 524.70a3.1 3.1 0 1 0 -6.2 0a3.1 3.1 0 1 0 6.2 0M873.25 524.70a3.1 3.1 0 1 0 -6.2 0a3.1 3.1 0 1 0 6.2 0M886.12 524.70a3.1 3.1 0 1 0 -6.2 0a3.1 3.1 0 1 0 6.2 0M899.00 524.70a3.1 3.1 0 1 0 -6.2 0a3.1 3.1 0 1 0 6.2 0M911.88 524.70a3.1 3.1 0 1 0 -6.2 0a3.1 3.1 0 1 0 6.2 0M924.75 524.70a3.1 3.1 0 1 0 -6.2 0a3.1 3.1 0 1 0 6.2 0M937.62 524.70a3.1 3.1 0 1 0 -6.2 0a3.1 3.1 0 1 0 6.2 0M950.50 524.70a3.1 3.1 0 1 0 -6.2 0a3.1 3.1 0 1 0 6.2 0M963.38 524.70a3.1 3.1 0 1 0 -6.2 0a3.1 3.1 0 1 0 6.2 0M590.00 563.20a3.1 3.1 0 1 0 -6.2 0a3.1 3.1 0 1 0 6.2 0M602.88 563.20a3.1 3.1 0 1 0 -6.2 0a3.1 3.1 0 1 0 6.2 0M615.75 563.20a3.1 3.1 0 1 0 -6.2 0a3.1 3.1 0 1 0 6.2 0M628.62 563.20a3.1 3.1 0 1 0 -6.2 0a3.1 3.1 0 1 0 6.2 0M641.50 563.20a3.1 3.1 0 1 0 -6.2 0a3.1 3.1 0 1 0 6.2 0M654.38 563.20a3.1 3.1 0 1 0 -6.2 0a3.1 3.1 0 1 0 6.2 0M667.25 563.20a3.1 3.1 0 1 0 -6.2 0a3.1 3.1 0 1 0 6.2 0M680.12 563.20a3.1 3.1 0 1 0 -6.2 0a3.1 3.1 0 1 0 6.2 0M693.00 563.20a3.1 3.1 0 1 0 -6.2 0a3.1 3.1 0 1 0 6.2 0M705.88 563.20a3.1 3.1 0 1 0 -6.2 0a3.1 3.1 0 1 0 6.2 0M718.75 563.20a3.1 3.1 0 1 0 -6.2 0a3.1 3.1 0 1 0 6.2 0M731.62 563.20a3.1 3.1 0 1 0 -6.2 0a3.1 3.1 0 1 0 6.2 0M744.50 563.20a3.1 3.1 0 1 0 -6.2 0a3.1 3.1 0 1 0 6.2 0M757.38 563.20a3.1 3.1 0 1 0 -6.2 0a3.1 3.1 0 1 0 6.2 0M770.25 563.20a3.1 3.1 0 1 0 -6.2 0a3.1 3.1 0 1 0 6.2 0M783.12 563.20a3.1 3.1 0 1 0 -6.2 0a3.1 3.1 0 1 0 6.2 0M796.00 563.20a3.1 3.1 0 1 0 -6.2 0a3.1 3.1 0 1 0 6.2 0M808.88 563.20a3.1 3.1 0 1 0 -6.2 0a3.1 3.1 0 1 0 6.2 0M821.75 563.20a3.1 3.1 0 1 0 -6.2 0a3.1 3.1 0 1 0 6.2 0M834.62 563.20a3.1 3.1 0 1 0 -6.2 0a3.1 3.1 0 1 0 6.2 0M847.50 563.20a3.1 3.1 0 1 0 -6.2 0a3.1 3.1 0 1 0 6.2 0M860.38 563.20a3.1 3.1 0 1 0 -6.2 0a3.1 3.1 0 1 0 6.2 0M873.25 563.20a3.1 3.1 0 1 0 -6.2 0a3.1 3.1 0 1 0 6.2 0M886.12 563.20a3.1 3.1 0 1 0 -6.2 0a3.1 3.1 0 1 0 6.2 0M899.00 563.20a3.1 3.1 0 1 0 -6.2 0a3.1 3.1 0 1 0 6.2 0M911.88 563.20a3.1 3.1 0 1 0 -6.2 0a3.1 3.1 0 1 0 6.2 0M924.75 563.20a3.1 3.1 0 1 0 -6.2 0a3.1 3.1 0 1 0 6.2 0M937.62 563.20a3.1 3.1 0 1 0 -6.2 0a3.1 3.1 0 1 0 6.2 0M950.50 563.20a3.1 3.1 0 1 0 -6.2 0a3.1 3.1 0 1 0 6.2 0M963.38 563.20a3.1 3.1 0 1 0 -6.2 0a3.1 3.1 0 1 0 6.2 0M590.00 576.20a3.1 3.1 0 1 0 -6.2 0a3.1 3.1 0 1 0 6.2 0M602.88 576.20a3.1 3.1 0 1 0 -6.2 0a3.1 3.1 0 1 0 6.2 0M615.75 576.20a3.1 3.1 0 1 0 -6.2 0a3.1 3.1 0 1 0 6.2 0M628.62 576.20a3.1 3.1 0 1 0 -6.2 0a3.1 3.1 0 1 0 6.2 0M641.50 576.20a3.1 3.1 0 1 0 -6.2 0a3.1 3.1 0 1 0 6.2 0M654.38 576.20a3.1 3.1 0 1 0 -6.2 0a3.1 3.1 0 1 0 6.2 0M667.25 576.20a3.1 3.1 0 1 0 -6.2 0a3.1 3.1 0 1 0 6.2 0M680.12 576.20a3.1 3.1 0 1 0 -6.2 0a3.1 3.1 0 1 0 6.2 0M693.00 576.20a3.1 3.1 0 1 0 -6.2 0a3.1 3.1 0 1 0 6.2 0M705.88 576.20a3.1 3.1 0 1 0 -6.2 0a3.1 3.1 0 1 0 6.2 0M718.75 576.20a3.1 3.1 0 1 0 -6.2 0a3.1 3.1 0 1 0 6.2 0M731.62 576.20a3.1 3.1 0 1 0 -6.2 0a3.1 3.1 0 1 0 6.2 0M744.50 576.20a3.1 3.1 0 1 0 -6.2 0a3.1 3.1 0 1 0 6.2 0M757.38 576.20a3.1 3.1 0 1 0 -6.2 0a3.1 3.1 0 1 0 6.2 0M770.25 576.20a3.1 3.1 0 1 0 -6.2 0a3.1 3.1 0 1 0 6.2 0M783.12 576.20a3.1 3.1 0 1 0 -6.2 0a3.1 3.1 0 1 0 6.2 0M796.00 576.20a3.1 3.1 0 1 0 -6.2 0a3.1 3.1 0 1 0 6.2 0M808.88 576.20a3.1 3.1 0 1 0 -6.2 0a3.1 3.1 0 1 0 6.2 0M821.75 576.20a3.1 3.1 0 1 0 -6.2 0a3.1 3.1 0 1 0 6.2 0M834.62 576.20a3.1 3.1 0 1 0 -6.2 0a3.1 3.1 0 1 0 6.2 0M847.50 576.20a3.1 3.1 0 1 0 -6.2 0a3.1 3.1 0 1 0 6.2 0M860.38 576.20a3.1 3.1 0 1 0 -6.2 0a3.1 3.1 0 1 0 6.2 0M873.25 576.20a3.1 3.1 0 1 0 -6.2 0a3.1 3.1 0 1 0 6.2 0M886.12 576.20a3.1 3.1 0 1 0 -6.2 0a3.1 3.1 0 1 0 6.2 0M899.00 576.20a3.1 3.1 0 1 0 -6.2 0a3.1 3.1 0 1 0 6.2 0M911.88 576.20a3.1 3.1 0 1 0 -6.2 0a3.1 3.1 0 1 0 6.2 0M924.75 576.20a3.1 3.1 0 1 0 -6.2 0a3.1 3.1 0 1 0 6.2 0M937.62 576.20a3.1 3.1 0 1 0 -6.2 0a3.1 3.1 0 1 0 6.2 0M950.50 576.20a3.1 3.1 0 1 0 -6.2 0a3.1 3.1 0 1 0 6.2 0M963.38 576.20a3.1 3.1 0 1 0 -6.2 0a3.1 3.1 0 1 0 6.2 0" fill="#c6c6c6"/><path d="M589.15 332.20a2.25 2.25 0 1 0 -4.5 0a2.25 2.25 0 1 0 4.5 0M602.02 332.20a2.25 2.25 0 1 0 -4.5 0a2.25 2.25 0 1 0 4.5 0M614.90 332.20a2.25 2.25 0 1 0 -4.5 0a2.25 2.25 0 1 0 4.5 0M627.77 332.20a2.25 2.25 0 1 0 -4.5 0a2.25 2.25 0 1 0 4.5 0M640.65 332.20a2.25 2.25 0 1 0 -4.5 0a2.25 2.25 0 1 0 4.5 0M653.52 332.20a2.25 2.25 0 1 0 -4.5 0a2.25 2.25 0 1 0 4.5 0M666.40 332.20a2.25 2.25 0 1 0 -4.5 0a2.25 2.25 0 1 0 4.5 0M679.27 332.20a2.25 2.25 0 1 0 -4.5 0a2.25 2.25 0 1 0 4.5 0M692.15 332.20a2.25 2.25 0 1 0 -4.5 0a2.25 2.25 0 1 0 4.5 0M705.02 332.20a2.25 2.25 0 1 0 -4.5 0a2.25 2.25 0 1 0 4.5 0M717.90 332.20a2.25 2.25 0 1 0 -4.5 0a2.25 2.25 0 1 0 4.5 0M730.77 332.20a2.25 2.25 0 1 0 -4.5 0a2.25 2.25 0 1 0 4.5 0M743.65 332.20a2.25 2.25 0 1 0 -4.5 0a2.25 2.25 0 1 0 4.5 0M756.52 332.20a2.25 2.25 0 1 0 -4.5 0a2.25 2.25 0 1 0 4.5 0M769.40 332.20a2.25 2.25 0 1 0 -4.5 0a2.25 2.25 0 1 0 4.5 0M782.27 332.20a2.25 2.25 0 1 0 -4.5 0a2.25 2.25 0 1 0 4.5 0M795.15 332.20a2.25 2.25 0 1 0 -4.5 0a2.25 2.25 0 1 0 4.5 0M808.02 332.20a2.25 2.25 0 1 0 -4.5 0a2.25 2.25 0 1 0 4.5 0M820.90 332.20a2.25 2.25 0 1 0 -4.5 0a2.25 2.25 0 1 0 4.5 0M833.77 332.20a2.25 2.25 0 1 0 -4.5 0a2.25 2.25 0 1 0 4.5 0M846.65 332.20a2.25 2.25 0 1 0 -4.5 0a2.25 2.25 0 1 0 4.5 0M859.52 332.20a2.25 2.25 0 1 0 -4.5 0a2.25 2.25 0 1 0 4.5 0M872.40 332.20a2.25 2.25 0 1 0 -4.5 0a2.25 2.25 0 1 0 4.5 0M885.27 332.20a2.25 2.25 0 1 0 -4.5 0a2.25 2.25 0 1 0 4.5 0M898.15 332.20a2.25 2.25 0 1 0 -4.5 0a2.25 2.25 0 1 0 4.5 0M911.02 332.20a2.25 2.25 0 1 0 -4.5 0a2.25 2.25 0 1 0 4.5 0M923.90 332.20a2.25 2.25 0 1 0 -4.5 0a2.25 2.25 0 1 0 4.5 0M936.77 332.20a2.25 2.25 0 1 0 -4.5 0a2.25 2.25 0 1 0 4.5 0M949.65 332.20a2.25 2.25 0 1 0 -4.5 0a2.25 2.25 0 1 0 4.5 0M962.52 332.20a2.25 2.25 0 1 0 -4.5 0a2.25 2.25 0 1 0 4.5 0M589.15 345.00a2.25 2.25 0 1 0 -4.5 0a2.25 2.25 0 1 0 4.5 0M602.02 345.00a2.25 2.25 0 1 0 -4.5 0a2.25 2.25 0 1 0 4.5 0M614.90 345.00a2.25 2.25 0 1 0 -4.5 0a2.25 2.25 0 1 0 4.5 0M627.77 345.00a2.25 2.25 0 1 0 -4.5 0a2.25 2.25 0 1 0 4.5 0M640.65 345.00a2.25 2.25 0 1 0 -4.5 0a2.25 2.25 0 1 0 4.5 0M653.52 345.00a2.25 2.25 0 1 0 -4.5 0a2.25 2.25 0 1 0 4.5 0M666.40 345.00a2.25 2.25 0 1 0 -4.5 0a2.25 2.25 0 1 0 4.5 0M679.27 345.00a2.25 2.25 0 1 0 -4.5 0a2.25 2.25 0 1 0 4.5 0M692.15 345.00a2.25 2.25 0 1 0 -4.5 0a2.25 2.25 0 1 0 4.5 0M705.02 345.00a2.25 2.25 0 1 0 -4.5 0a2.25 2.25 0 1 0 4.5 0M717.90 345.00a2.25 2.25 0 1 0 -4.5 0a2.25 2.25 0 1 0 4.5 0M730.77 345.00a2.25 2.25 0 1 0 -4.5 0a2.25 2.25 0 1 0 4.5 0M743.65 345.00a2.25 2.25 0 1 0 -4.5 0a2.25 2.25 0 1 0 4.5 0M756.52 345.00a2.25 2.25 0 1 0 -4.5 0a2.25 2.25 0 1 0 4.5 0M769.40 345.00a2.25 2.25 0 1 0 -4.5 0a2.25 2.25 0 1 0 4.5 0M782.27 345.00a2.25 2.25 0 1 0 -4.5 0a2.25 2.25 0 1 0 4.5 0M795.15 345.00a2.25 2.25 0 1 0 -4.5 0a2.25 2.25 0 1 0 4.5 0M808.02 345.00a2.25 2.25 0 1 0 -4.5 0a2.25 2.25 0 1 0 4.5 0M820.90 345.00a2.25 2.25 0 1 0 -4.5 0a2.25 2.25 0 1 0 4.5 0M833.77 345.00a2.25 2.25 0 1 0 -4.5 0a2.25 2.25 0 1 0 4.5 0M846.65 345.00a2.25 2.25 0 1 0 -4.5 0a2.25 2.25 0 1 0 4.5 0M859.52 345.00a2.25 2.25 0 1 0 -4.5 0a2.25 2.25 0 1 0 4.5 0M872.40 345.00a2.25 2.25 0 1 0 -4.5 0a2.25 2.25 0 1 0 4.5 0M885.27 345.00a2.25 2.25 0 1 0 -4.5 0a2.25 2.25 0 1 0 4.5 0M898.15 345.00a2.25 2.25 0 1 0 -4.5 0a2.25 2.25 0 1 0 4.5 0M911.02 345.00a2.25 2.25 0 1 0 -4.5 0a2.25 2.25 0 1 0 4.5 0M923.90 345.00a2.25 2.25 0 1 0 -4.5 0a2.25 2.25 0 1 0 4.5 0M936.77 345.00a2.25 2.25 0 1 0 -4.5 0a2.25 2.25 0 1 0 4.5 0M949.65 345.00a2.25 2.25 0 1 0 -4.5 0a2.25 2.25 0 1 0 4.5 0M962.52 345.00a2.25 2.25 0 1 0 -4.5 0a2.25 2.25 0 1 0 4.5 0M589.15 383.40a2.25 2.25 0 1 0 -4.5 0a2.25 2.25 0 1 0 4.5 0M602.02 383.40a2.25 2.25 0 1 0 -4.5 0a2.25 2.25 0 1 0 4.5 0M614.90 383.40a2.25 2.25 0 1 0 -4.5 0a2.25 2.25 0 1 0 4.5 0M627.77 383.40a2.25 2.25 0 1 0 -4.5 0a2.25 2.25 0 1 0 4.5 0M640.65 383.40a2.25 2.25 0 1 0 -4.5 0a2.25 2.25 0 1 0 4.5 0M653.52 383.40a2.25 2.25 0 1 0 -4.5 0a2.25 2.25 0 1 0 4.5 0M666.40 383.40a2.25 2.25 0 1 0 -4.5 0a2.25 2.25 0 1 0 4.5 0M679.27 383.40a2.25 2.25 0 1 0 -4.5 0a2.25 2.25 0 1 0 4.5 0M692.15 383.40a2.25 2.25 0 1 0 -4.5 0a2.25 2.25 0 1 0 4.5 0M705.02 383.40a2.25 2.25 0 1 0 -4.5 0a2.25 2.25 0 1 0 4.5 0M717.90 383.40a2.25 2.25 0 1 0 -4.5 0a2.25 2.25 0 1 0 4.5 0M730.77 383.40a2.25 2.25 0 1 0 -4.5 0a2.25 2.25 0 1 0 4.5 0M743.65 383.40a2.25 2.25 0 1 0 -4.5 0a2.25 2.25 0 1 0 4.5 0M756.52 383.40a2.25 2.25 0 1 0 -4.5 0a2.25 2.25 0 1 0 4.5 0M769.40 383.40a2.25 2.25 0 1 0 -4.5 0a2.25 2.25 0 1 0 4.5 0M782.27 383.40a2.25 2.25 0 1 0 -4.5 0a2.25 2.25 0 1 0 4.5 0M795.15 383.40a2.25 2.25 0 1 0 -4.5 0a2.25 2.25 0 1 0 4.5 0M808.02 383.40a2.25 2.25 0 1 0 -4.5 0a2.25 2.25 0 1 0 4.5 0M820.90 383.40a2.25 2.25 0 1 0 -4.5 0a2.25 2.25 0 1 0 4.5 0M833.77 383.40a2.25 2.25 0 1 0 -4.5 0a2.25 2.25 0 1 0 4.5 0M846.65 383.40a2.25 2.25 0 1 0 -4.5 0a2.25 2.25 0 1 0 4.5 0M859.52 383.40a2.25 2.25 0 1 0 -4.5 0a2.25 2.25 0 1 0 4.5 0M872.40 383.40a2.25 2.25 0 1 0 -4.5 0a2.25 2.25 0 1 0 4.5 0M885.27 383.40a2.25 2.25 0 1 0 -4.5 0a2.25 2.25 0 1 0 4.5 0M898.15 383.40a2.25 2.25 0 1 0 -4.5 0a2.25 2.25 0 1 0 4.5 0M911.02 383.40a2.25 2.25 0 1 0 -4.5 0a2.25 2.25 0 1 0 4.5 0M923.90 383.40a2.25 2.25 0 1 0 -4.5 0a2.25 2.25 0 1 0 4.5 0M936.77 383.40a2.25 2.25 0 1 0 -4.5 0a2.25 2.25 0 1 0 4.5 0M949.65 383.40a2.25 2.25 0 1 0 -4.5 0a2.25 2.25 0 1 0 4.5 0M962.52 383.40a2.25 2.25 0 1 0 -4.5 0a2.25 2.25 0 1 0 4.5 0M589.15 396.30a2.25 2.25 0 1 0 -4.5 0a2.25 2.25 0 1 0 4.5 0M602.02 396.30a2.25 2.25 0 1 0 -4.5 0a2.25 2.25 0 1 0 4.5 0M614.90 396.30a2.25 2.25 0 1 0 -4.5 0a2.25 2.25 0 1 0 4.5 0M627.77 396.30a2.25 2.25 0 1 0 -4.5 0a2.25 2.25 0 1 0 4.5 0M640.65 396.30a2.25 2.25 0 1 0 -4.5 0a2.25 2.25 0 1 0 4.5 0M653.52 396.30a2.25 2.25 0 1 0 -4.5 0a2.25 2.25 0 1 0 4.5 0M666.40 396.30a2.25 2.25 0 1 0 -4.5 0a2.25 2.25 0 1 0 4.5 0M679.27 396.30a2.25 2.25 0 1 0 -4.5 0a2.25 2.25 0 1 0 4.5 0M692.15 396.30a2.25 2.25 0 1 0 -4.5 0a2.25 2.25 0 1 0 4.5 0M705.02 396.30a2.25 2.25 0 1 0 -4.5 0a2.25 2.25 0 1 0 4.5 0M717.90 396.30a2.25 2.25 0 1 0 -4.5 0a2.25 2.25 0 1 0 4.5 0M730.77 396.30a2.25 2.25 0 1 0 -4.5 0a2.25 2.25 0 1 0 4.5 0M743.65 396.30a2.25 2.25 0 1 0 -4.5 0a2.25 2.25 0 1 0 4.5 0M756.52 396.30a2.25 2.25 0 1 0 -4.5 0a2.25 2.25 0 1 0 4.5 0M769.40 396.30a2.25 2.25 0 1 0 -4.5 0a2.25 2.25 0 1 0 4.5 0M782.27 396.30a2.25 2.25 0 1 0 -4.5 0a2.25 2.25 0 1 0 4.5 0M795.15 396.30a2.25 2.25 0 1 0 -4.5 0a2.25 2.25 0 1 0 4.5 0M808.02 396.30a2.25 2.25 0 1 0 -4.5 0a2.25 2.25 0 1 0 4.5 0M820.90 396.30a2.25 2.25 0 1 0 -4.5 0a2.25 2.25 0 1 0 4.5 0M833.77 396.30a2.25 2.25 0 1 0 -4.5 0a2.25 2.25 0 1 0 4.5 0M846.65 396.30a2.25 2.25 0 1 0 -4.5 0a2.25 2.25 0 1 0 4.5 0M859.52 396.30a2.25 2.25 0 1 0 -4.5 0a2.25 2.25 0 1 0 4.5 0M872.40 396.30a2.25 2.25 0 1 0 -4.5 0a2.25 2.25 0 1 0 4.5 0M885.27 396.30a2.25 2.25 0 1 0 -4.5 0a2.25 2.25 0 1 0 4.5 0M898.15 396.30a2.25 2.25 0 1 0 -4.5 0a2.25 2.25 0 1 0 4.5 0M911.02 396.30a2.25 2.25 0 1 0 -4.5 0a2.25 2.25 0 1 0 4.5 0M923.90 396.30a2.25 2.25 0 1 0 -4.5 0a2.25 2.25 0 1 0 4.5 0M936.77 396.30a2.25 2.25 0 1 0 -4.5 0a2.25 2.25 0 1 0 4.5 0M949.65 396.30a2.25 2.25 0 1 0 -4.5 0a2.25 2.25 0 1 0 4.5 0M962.52 396.30a2.25 2.25 0 1 0 -4.5 0a2.25 2.25 0 1 0 4.5 0M589.15 409.20a2.25 2.25 0 1 0 -4.5 0a2.25 2.25 0 1 0 4.5 0M602.02 409.20a2.25 2.25 0 1 0 -4.5 0a2.25 2.25 0 1 0 4.5 0M614.90 409.20a2.25 2.25 0 1 0 -4.5 0a2.25 2.25 0 1 0 4.5 0M627.77 409.20a2.25 2.25 0 1 0 -4.5 0a2.25 2.25 0 1 0 4.5 0M640.65 409.20a2.25 2.25 0 1 0 -4.5 0a2.25 2.25 0 1 0 4.5 0M653.52 409.20a2.25 2.25 0 1 0 -4.5 0a2.25 2.25 0 1 0 4.5 0M666.40 409.20a2.25 2.25 0 1 0 -4.5 0a2.25 2.25 0 1 0 4.5 0M679.27 409.20a2.25 2.25 0 1 0 -4.5 0a2.25 2.25 0 1 0 4.5 0M692.15 409.20a2.25 2.25 0 1 0 -4.5 0a2.25 2.25 0 1 0 4.5 0M705.02 409.20a2.25 2.25 0 1 0 -4.5 0a2.25 2.25 0 1 0 4.5 0M717.90 409.20a2.25 2.25 0 1 0 -4.5 0a2.25 2.25 0 1 0 4.5 0M730.77 409.20a2.25 2.25 0 1 0 -4.5 0a2.25 2.25 0 1 0 4.5 0M743.65 409.20a2.25 2.25 0 1 0 -4.5 0a2.25 2.25 0 1 0 4.5 0M756.52 409.20a2.25 2.25 0 1 0 -4.5 0a2.25 2.25 0 1 0 4.5 0M769.40 409.20a2.25 2.25 0 1 0 -4.5 0a2.25 2.25 0 1 0 4.5 0M782.27 409.20a2.25 2.25 0 1 0 -4.5 0a2.25 2.25 0 1 0 4.5 0M795.15 409.20a2.25 2.25 0 1 0 -4.5 0a2.25 2.25 0 1 0 4.5 0M808.02 409.20a2.25 2.25 0 1 0 -4.5 0a2.25 2.25 0 1 0 4.5 0M820.90 409.20a2.25 2.25 0 1 0 -4.5 0a2.25 2.25 0 1 0 4.5 0M833.77 409.20a2.25 2.25 0 1 0 -4.5 0a2.25 2.25 0 1 0 4.5 0M846.65 409.20a2.25 2.25 0 1 0 -4.5 0a2.25 2.25 0 1 0 4.5 0M859.52 409.20a2.25 2.25 0 1 0 -4.5 0a2.25 2.25 0 1 0 4.5 0M872.40 409.20a2.25 2.25 0 1 0 -4.5 0a2.25 2.25 0 1 0 4.5 0M885.27 409.20a2.25 2.25 0 1 0 -4.5 0a2.25 2.25 0 1 0 4.5 0M898.15 409.20a2.25 2.25 0 1 0 -4.5 0a2.25 2.25 0 1 0 4.5 0M911.02 409.20a2.25 2.25 0 1 0 -4.5 0a2.25 2.25 0 1 0 4.5 0M923.90 409.20a2.25 2.25 0 1 0 -4.5 0a2.25 2.25 0 1 0 4.5 0M936.77 409.20a2.25 2.25 0 1 0 -4.5 0a2.25 2.25 0 1 0 4.5 0M949.65 409.20a2.25 2.25 0 1 0 -4.5 0a2.25 2.25 0 1 0 4.5 0M962.52 409.20a2.25 2.25 0 1 0 -4.5 0a2.25 2.25 0 1 0 4.5 0M589.15 422.10a2.25 2.25 0 1 0 -4.5 0a2.25 2.25 0 1 0 4.5 0M602.02 422.10a2.25 2.25 0 1 0 -4.5 0a2.25 2.25 0 1 0 4.5 0M614.90 422.10a2.25 2.25 0 1 0 -4.5 0a2.25 2.25 0 1 0 4.5 0M627.77 422.10a2.25 2.25 0 1 0 -4.5 0a2.25 2.25 0 1 0 4.5 0M640.65 422.10a2.25 2.25 0 1 0 -4.5 0a2.25 2.25 0 1 0 4.5 0M653.52 422.10a2.25 2.25 0 1 0 -4.5 0a2.25 2.25 0 1 0 4.5 0M666.40 422.10a2.25 2.25 0 1 0 -4.5 0a2.25 2.25 0 1 0 4.5 0M679.27 422.10a2.25 2.25 0 1 0 -4.5 0a2.25 2.25 0 1 0 4.5 0M692.15 422.10a2.25 2.25 0 1 0 -4.5 0a2.25 2.25 0 1 0 4.5 0M705.02 422.10a2.25 2.25 0 1 0 -4.5 0a2.25 2.25 0 1 0 4.5 0M717.90 422.10a2.25 2.25 0 1 0 -4.5 0a2.25 2.25 0 1 0 4.5 0M730.77 422.10a2.25 2.25 0 1 0 -4.5 0a2.25 2.25 0 1 0 4.5 0M743.65 422.10a2.25 2.25 0 1 0 -4.5 0a2.25 2.25 0 1 0 4.5 0M756.52 422.10a2.25 2.25 0 1 0 -4.5 0a2.25 2.25 0 1 0 4.5 0M769.40 422.10a2.25 2.25 0 1 0 -4.5 0a2.25 2.25 0 1 0 4.5 0M782.27 422.10a2.25 2.25 0 1 0 -4.5 0a2.25 2.25 0 1 0 4.5 0M795.15 422.10a2.25 2.25 0 1 0 -4.5 0a2.25 2.25 0 1 0 4.5 0M808.02 422.10a2.25 2.25 0 1 0 -4.5 0a2.25 2.25 0 1 0 4.5 0M820.90 422.10a2.25 2.25 0 1 0 -4.5 0a2.25 2.25 0 1 0 4.5 0M833.77 422.10a2.25 2.25 0 1 0 -4.5 0a2.25 2.25 0 1 0 4.5 0M846.65 422.10a2.25 2.25 0 1 0 -4.5 0a2.25 2.25 0 1 0 4.5 0M859.52 422.10a2.25 2.25 0 1 0 -4.5 0a2.25 2.25 0 1 0 4.5 0M872.40 422.10a2.25 2.25 0 1 0 -4.5 0a2.25 2.25 0 1 0 4.5 0M885.27 422.10a2.25 2.25 0 1 0 -4.5 0a2.25 2.25 0 1 0 4.5 0M898.15 422.10a2.25 2.25 0 1 0 -4.5 0a2.25 2.25 0 1 0 4.5 0M911.02 422.10a2.25 2.25 0 1 0 -4.5 0a2.25 2.25 0 1 0 4.5 0M923.90 422.10a2.25 2.25 0 1 0 -4.5 0a2.25 2.25 0 1 0 4.5 0M936.77 422.10a2.25 2.25 0 1 0 -4.5 0a2.25 2.25 0 1 0 4.5 0M949.65 422.10a2.25 2.25 0 1 0 -4.5 0a2.25 2.25 0 1 0 4.5 0M962.52 422.10a2.25 2.25 0 1 0 -4.5 0a2.25 2.25 0 1 0 4.5 0M589.15 435.00a2.25 2.25 0 1 0 -4.5 0a2.25 2.25 0 1 0 4.5 0M602.02 435.00a2.25 2.25 0 1 0 -4.5 0a2.25 2.25 0 1 0 4.5 0M614.90 435.00a2.25 2.25 0 1 0 -4.5 0a2.25 2.25 0 1 0 4.5 0M627.77 435.00a2.25 2.25 0 1 0 -4.5 0a2.25 2.25 0 1 0 4.5 0M640.65 435.00a2.25 2.25 0 1 0 -4.5 0a2.25 2.25 0 1 0 4.5 0M653.52 435.00a2.25 2.25 0 1 0 -4.5 0a2.25 2.25 0 1 0 4.5 0M666.40 435.00a2.25 2.25 0 1 0 -4.5 0a2.25 2.25 0 1 0 4.5 0M679.27 435.00a2.25 2.25 0 1 0 -4.5 0a2.25 2.25 0 1 0 4.5 0M692.15 435.00a2.25 2.25 0 1 0 -4.5 0a2.25 2.25 0 1 0 4.5 0M705.02 435.00a2.25 2.25 0 1 0 -4.5 0a2.25 2.25 0 1 0 4.5 0M717.90 435.00a2.25 2.25 0 1 0 -4.5 0a2.25 2.25 0 1 0 4.5 0M730.77 435.00a2.25 2.25 0 1 0 -4.5 0a2.25 2.25 0 1 0 4.5 0M743.65 435.00a2.25 2.25 0 1 0 -4.5 0a2.25 2.25 0 1 0 4.5 0M756.52 435.00a2.25 2.25 0 1 0 -4.5 0a2.25 2.25 0 1 0 4.5 0M769.40 435.00a2.25 2.25 0 1 0 -4.5 0a2.25 2.25 0 1 0 4.5 0M782.27 435.00a2.25 2.25 0 1 0 -4.5 0a2.25 2.25 0 1 0 4.5 0M795.15 435.00a2.25 2.25 0 1 0 -4.5 0a2.25 2.25 0 1 0 4.5 0M808.02 435.00a2.25 2.25 0 1 0 -4.5 0a2.25 2.25 0 1 0 4.5 0M820.90 435.00a2.25 2.25 0 1 0 -4.5 0a2.25 2.25 0 1 0 4.5 0M833.77 435.00a2.25 2.25 0 1 0 -4.5 0a2.25 2.25 0 1 0 4.5 0M846.65 435.00a2.25 2.25 0 1 0 -4.5 0a2.25 2.25 0 1 0 4.5 0M859.52 435.00a2.25 2.25 0 1 0 -4.5 0a2.25 2.25 0 1 0 4.5 0M872.40 435.00a2.25 2.25 0 1 0 -4.5 0a2.25 2.25 0 1 0 4.5 0M885.27 435.00a2.25 2.25 0 1 0 -4.5 0a2.25 2.25 0 1 0 4.5 0M898.15 435.00a2.25 2.25 0 1 0 -4.5 0a2.25 2.25 0 1 0 4.5 0M911.02 435.00a2.25 2.25 0 1 0 -4.5 0a2.25 2.25 0 1 0 4.5 0M923.90 435.00a2.25 2.25 0 1 0 -4.5 0a2.25 2.25 0 1 0 4.5 0M936.77 435.00a2.25 2.25 0 1 0 -4.5 0a2.25 2.25 0 1 0 4.5 0M949.65 435.00a2.25 2.25 0 1 0 -4.5 0a2.25 2.25 0 1 0 4.5 0M962.52 435.00a2.25 2.25 0 1 0 -4.5 0a2.25 2.25 0 1 0 4.5 0M589.15 473.70a2.25 2.25 0 1 0 -4.5 0a2.25 2.25 0 1 0 4.5 0M602.02 473.70a2.25 2.25 0 1 0 -4.5 0a2.25 2.25 0 1 0 4.5 0M614.90 473.70a2.25 2.25 0 1 0 -4.5 0a2.25 2.25 0 1 0 4.5 0M627.77 473.70a2.25 2.25 0 1 0 -4.5 0a2.25 2.25 0 1 0 4.5 0M640.65 473.70a2.25 2.25 0 1 0 -4.5 0a2.25 2.25 0 1 0 4.5 0M653.52 473.70a2.25 2.25 0 1 0 -4.5 0a2.25 2.25 0 1 0 4.5 0M666.40 473.70a2.25 2.25 0 1 0 -4.5 0a2.25 2.25 0 1 0 4.5 0M679.27 473.70a2.25 2.25 0 1 0 -4.5 0a2.25 2.25 0 1 0 4.5 0M692.15 473.70a2.25 2.25 0 1 0 -4.5 0a2.25 2.25 0 1 0 4.5 0M705.02 473.70a2.25 2.25 0 1 0 -4.5 0a2.25 2.25 0 1 0 4.5 0M717.90 473.70a2.25 2.25 0 1 0 -4.5 0a2.25 2.25 0 1 0 4.5 0M730.77 473.70a2.25 2.25 0 1 0 -4.5 0a2.25 2.25 0 1 0 4.5 0M743.65 473.70a2.25 2.25 0 1 0 -4.5 0a2.25 2.25 0 1 0 4.5 0M756.52 473.70a2.25 2.25 0 1 0 -4.5 0a2.25 2.25 0 1 0 4.5 0M769.40 473.70a2.25 2.25 0 1 0 -4.5 0a2.25 2.25 0 1 0 4.5 0M782.27 473.70a2.25 2.25 0 1 0 -4.5 0a2.25 2.25 0 1 0 4.5 0M795.15 473.70a2.25 2.25 0 1 0 -4.5 0a2.25 2.25 0 1 0 4.5 0M808.02 473.70a2.25 2.25 0 1 0 -4.5 0a2.25 2.25 0 1 0 4.5 0M820.90 473.70a2.25 2.25 0 1 0 -4.5 0a2.25 2.25 0 1 0 4.5 0M833.77 473.70a2.25 2.25 0 1 0 -4.5 0a2.25 2.25 0 1 0 4.5 0M846.65 473.70a2.25 2.25 0 1 0 -4.5 0a2.25 2.25 0 1 0 4.5 0M859.52 473.70a2.25 2.25 0 1 0 -4.5 0a2.25 2.25 0 1 0 4.5 0M872.40 473.70a2.25 2.25 0 1 0 -4.5 0a2.25 2.25 0 1 0 4.5 0M885.27 473.70a2.25 2.25 0 1 0 -4.5 0a2.25 2.25 0 1 0 4.5 0M898.15 473.70a2.25 2.25 0 1 0 -4.5 0a2.25 2.25 0 1 0 4.5 0M911.02 473.70a2.25 2.25 0 1 0 -4.5 0a2.25 2.25 0 1 0 4.5 0M923.90 473.70a2.25 2.25 0 1 0 -4.5 0a2.25 2.25 0 1 0 4.5 0M936.77 473.70a2.25 2.25 0 1 0 -4.5 0a2.25 2.25 0 1 0 4.5 0M949.65 473.70a2.25 2.25 0 1 0 -4.5 0a2.25 2.25 0 1 0 4.5 0M962.52 473.70a2.25 2.25 0 1 0 -4.5 0a2.25 2.25 0 1 0 4.5 0M589.15 486.60a2.25 2.25 0 1 0 -4.5 0a2.25 2.25 0 1 0 4.5 0M602.02 486.60a2.25 2.25 0 1 0 -4.5 0a2.25 2.25 0 1 0 4.5 0M614.90 486.60a2.25 2.25 0 1 0 -4.5 0a2.25 2.25 0 1 0 4.5 0M627.77 486.60a2.25 2.25 0 1 0 -4.5 0a2.25 2.25 0 1 0 4.5 0M640.65 486.60a2.25 2.25 0 1 0 -4.5 0a2.25 2.25 0 1 0 4.5 0M653.52 486.60a2.25 2.25 0 1 0 -4.5 0a2.25 2.25 0 1 0 4.5 0M666.40 486.60a2.25 2.25 0 1 0 -4.5 0a2.25 2.25 0 1 0 4.5 0M679.27 486.60a2.25 2.25 0 1 0 -4.5 0a2.25 2.25 0 1 0 4.5 0M692.15 486.60a2.25 2.25 0 1 0 -4.5 0a2.25 2.25 0 1 0 4.5 0M705.02 486.60a2.25 2.25 0 1 0 -4.5 0a2.25 2.25 0 1 0 4.5 0M717.90 486.60a2.25 2.25 0 1 0 -4.5 0a2.25 2.25 0 1 0 4.5 0M730.77 486.60a2.25 2.25 0 1 0 -4.5 0a2.25 2.25 0 1 0 4.5 0M743.65 486.60a2.25 2.25 0 1 0 -4.5 0a2.25 2.25 0 1 0 4.5 0M756.52 486.60a2.25 2.25 0 1 0 -4.5 0a2.25 2.25 0 1 0 4.5 0M769.40 486.60a2.25 2.25 0 1 0 -4.5 0a2.25 2.25 0 1 0 4.5 0M782.27 486.60a2.25 2.25 0 1 0 -4.5 0a2.25 2.25 0 1 0 4.5 0M795.15 486.60a2.25 2.25 0 1 0 -4.5 0a2.25 2.25 0 1 0 4.5 0M808.02 486.60a2.25 2.25 0 1 0 -4.5 0a2.25 2.25 0 1 0 4.5 0M820.90 486.60a2.25 2.25 0 1 0 -4.5 0a2.25 2.25 0 1 0 4.5 0M833.77 486.60a2.25 2.25 0 1 0 -4.5 0a2.25 2.25 0 1 0 4.5 0M846.65 486.60a2.25 2.25 0 1 0 -4.5 0a2.25 2.25 0 1 0 4.5 0M859.52 486.60a2.25 2.25 0 1 0 -4.5 0a2.25 2.25 0 1 0 4.5 0M872.40 486.60a2.25 2.25 0 1 0 -4.5 0a2.25 2.25 0 1 0 4.5 0M885.27 486.60a2.25 2.25 0 1 0 -4.5 0a2.25 2.25 0 1 0 4.5 0M898.15 486.60a2.25 2.25 0 1 0 -4.5 0a2.25 2.25 0 1 0 4.5 0M911.02 486.60a2.25 2.25 0 1 0 -4.5 0a2.25 2.25 0 1 0 4.5 0M923.90 486.60a2.25 2.25 0 1 0 -4.5 0a2.25 2.25 0 1 0 4.5 0M936.77 486.60a2.25 2.25 0 1 0 -4.5 0a2.25 2.25 0 1 0 4.5 0M949.65 486.60a2.25 2.25 0 1 0 -4.5 0a2.25 2.25 0 1 0 4.5 0M962.52 486.60a2.25 2.25 0 1 0 -4.5 0a2.25 2.25 0 1 0 4.5 0M589.15 499.40a2.25 2.25 0 1 0 -4.5 0a2.25 2.25 0 1 0 4.5 0M602.02 499.40a2.25 2.25 0 1 0 -4.5 0a2.25 2.25 0 1 0 4.5 0M614.90 499.40a2.25 2.25 0 1 0 -4.5 0a2.25 2.25 0 1 0 4.5 0M627.77 499.40a2.25 2.25 0 1 0 -4.5 0a2.25 2.25 0 1 0 4.5 0M640.65 499.40a2.25 2.25 0 1 0 -4.5 0a2.25 2.25 0 1 0 4.5 0M653.52 499.40a2.25 2.25 0 1 0 -4.5 0a2.25 2.25 0 1 0 4.5 0M666.40 499.40a2.25 2.25 0 1 0 -4.5 0a2.25 2.25 0 1 0 4.5 0M679.27 499.40a2.25 2.25 0 1 0 -4.5 0a2.25 2.25 0 1 0 4.5 0M692.15 499.40a2.25 2.25 0 1 0 -4.5 0a2.25 2.25 0 1 0 4.5 0M705.02 499.40a2.25 2.25 0 1 0 -4.5 0a2.25 2.25 0 1 0 4.5 0M717.90 499.40a2.25 2.25 0 1 0 -4.5 0a2.25 2.25 0 1 0 4.5 0M730.77 499.40a2.25 2.25 0 1 0 -4.5 0a2.25 2.25 0 1 0 4.5 0M743.65 499.40a2.25 2.25 0 1 0 -4.5 0a2.25 2.25 0 1 0 4.5 0M756.52 499.40a2.25 2.25 0 1 0 -4.5 0a2.25 2.25 0 1 0 4.5 0M769.40 499.40a2.25 2.25 0 1 0 -4.5 0a2.25 2.25 0 1 0 4.5 0M782.27 499.40a2.25 2.25 0 1 0 -4.5 0a2.25 2.25 0 1 0 4.5 0M795.15 499.40a2.25 2.25 0 1 0 -4.5 0a2.25 2.25 0 1 0 4.5 0M808.02 499.40a2.25 2.25 0 1 0 -4.5 0a2.25 2.25 0 1 0 4.5 0M820.90 499.40a2.25 2.25 0 1 0 -4.5 0a2.25 2.25 0 1 0 4.5 0M833.77 499.40a2.25 2.25 0 1 0 -4.5 0a2.25 2.25 0 1 0 4.5 0M846.65 499.40a2.25 2.25 0 1 0 -4.5 0a2.25 2.25 0 1 0 4.5 0M859.52 499.40a2.25 2.25 0 1 0 -4.5 0a2.25 2.25 0 1 0 4.5 0M872.40 499.40a2.25 2.25 0 1 0 -4.5 0a2.25 2.25 0 1 0 4.5 0M885.27 499.40a2.25 2.25 0 1 0 -4.5 0a2.25 2.25 0 1 0 4.5 0M898.15 499.40a2.25 2.25 0 1 0 -4.5 0a2.25 2.25 0 1 0 4.5 0M911.02 499.40a2.25 2.25 0 1 0 -4.5 0a2.25 2.25 0 1 0 4.5 0M923.90 499.40a2.25 2.25 0 1 0 -4.5 0a2.25 2.25 0 1 0 4.5 0M936.77 499.40a2.25 2.25 0 1 0 -4.5 0a2.25 2.25 0 1 0 4.5 0M949.65 499.40a2.25 2.25 0 1 0 -4.5 0a2.25 2.25 0 1 0 4.5 0M962.52 499.40a2.25 2.25 0 1 0 -4.5 0a2.25 2.25 0 1 0 4.5 0M589.15 512.30a2.25 2.25 0 1 0 -4.5 0a2.25 2.25 0 1 0 4.5 0M602.02 512.30a2.25 2.25 0 1 0 -4.5 0a2.25 2.25 0 1 0 4.5 0M614.90 512.30a2.25 2.25 0 1 0 -4.5 0a2.25 2.25 0 1 0 4.5 0M627.77 512.30a2.25 2.25 0 1 0 -4.5 0a2.25 2.25 0 1 0 4.5 0M640.65 512.30a2.25 2.25 0 1 0 -4.5 0a2.25 2.25 0 1 0 4.5 0M653.52 512.30a2.25 2.25 0 1 0 -4.5 0a2.25 2.25 0 1 0 4.5 0M666.40 512.30a2.25 2.25 0 1 0 -4.5 0a2.25 2.25 0 1 0 4.5 0M679.27 512.30a2.25 2.25 0 1 0 -4.5 0a2.25 2.25 0 1 0 4.5 0M692.15 512.30a2.25 2.25 0 1 0 -4.5 0a2.25 2.25 0 1 0 4.5 0M705.02 512.30a2.25 2.25 0 1 0 -4.5 0a2.25 2.25 0 1 0 4.5 0M717.90 512.30a2.25 2.25 0 1 0 -4.5 0a2.25 2.25 0 1 0 4.5 0M730.77 512.30a2.25 2.25 0 1 0 -4.5 0a2.25 2.25 0 1 0 4.5 0M743.65 512.30a2.25 2.25 0 1 0 -4.5 0a2.25 2.25 0 1 0 4.5 0M756.52 512.30a2.25 2.25 0 1 0 -4.5 0a2.25 2.25 0 1 0 4.5 0M769.40 512.30a2.25 2.25 0 1 0 -4.5 0a2.25 2.25 0 1 0 4.5 0M782.27 512.30a2.25 2.25 0 1 0 -4.5 0a2.25 2.25 0 1 0 4.5 0M795.15 512.30a2.25 2.25 0 1 0 -4.5 0a2.25 2.25 0 1 0 4.5 0M808.02 512.30a2.25 2.25 0 1 0 -4.5 0a2.25 2.25 0 1 0 4.5 0M820.90 512.30a2.25 2.25 0 1 0 -4.5 0a2.25 2.25 0 1 0 4.5 0M833.77 512.30a2.25 2.25 0 1 0 -4.5 0a2.25 2.25 0 1 0 4.5 0M846.65 512.30a2.25 2.25 0 1 0 -4.5 0a2.25 2.25 0 1 0 4.5 0M859.52 512.30a2.25 2.25 0 1 0 -4.5 0a2.25 2.25 0 1 0 4.5 0M872.40 512.30a2.25 2.25 0 1 0 -4.5 0a2.25 2.25 0 1 0 4.5 0M885.27 512.30a2.25 2.25 0 1 0 -4.5 0a2.25 2.25 0 1 0 4.5 0M898.15 512.30a2.25 2.25 0 1 0 -4.5 0a2.25 2.25 0 1 0 4.5 0M911.02 512.30a2.25 2.25 0 1 0 -4.5 0a2.25 2.25 0 1 0 4.5 0M923.90 512.30a2.25 2.25 0 1 0 -4.5 0a2.25 2.25 0 1 0 4.5 0M936.77 512.30a2.25 2.25 0 1 0 -4.5 0a2.25 2.25 0 1 0 4.5 0M949.65 512.30a2.25 2.25 0 1 0 -4.5 0a2.25 2.25 0 1 0 4.5 0M962.52 512.30a2.25 2.25 0 1 0 -4.5 0a2.25 2.25 0 1 0 4.5 0M589.15 525.20a2.25 2.25 0 1 0 -4.5 0a2.25 2.25 0 1 0 4.5 0M602.02 525.20a2.25 2.25 0 1 0 -4.5 0a2.25 2.25 0 1 0 4.5 0M614.90 525.20a2.25 2.25 0 1 0 -4.5 0a2.25 2.25 0 1 0 4.5 0M627.77 525.20a2.25 2.25 0 1 0 -4.5 0a2.25 2.25 0 1 0 4.5 0M640.65 525.20a2.25 2.25 0 1 0 -4.5 0a2.25 2.25 0 1 0 4.5 0M653.52 525.20a2.25 2.25 0 1 0 -4.5 0a2.25 2.25 0 1 0 4.5 0M666.40 525.20a2.25 2.25 0 1 0 -4.5 0a2.25 2.25 0 1 0 4.5 0M679.27 525.20a2.25 2.25 0 1 0 -4.5 0a2.25 2.25 0 1 0 4.5 0M692.15 525.20a2.25 2.25 0 1 0 -4.5 0a2.25 2.25 0 1 0 4.5 0M705.02 525.20a2.25 2.25 0 1 0 -4.5 0a2.25 2.25 0 1 0 4.5 0M717.90 525.20a2.25 2.25 0 1 0 -4.5 0a2.25 2.25 0 1 0 4.5 0M730.77 525.20a2.25 2.25 0 1 0 -4.5 0a2.25 2.25 0 1 0 4.5 0M743.65 525.20a2.25 2.25 0 1 0 -4.5 0a2.25 2.25 0 1 0 4.5 0M756.52 525.20a2.25 2.25 0 1 0 -4.5 0a2.25 2.25 0 1 0 4.5 0M769.40 525.20a2.25 2.25 0 1 0 -4.5 0a2.25 2.25 0 1 0 4.5 0M782.27 525.20a2.25 2.25 0 1 0 -4.5 0a2.25 2.25 0 1 0 4.5 0M795.15 525.20a2.25 2.25 0 1 0 -4.5 0a2.25 2.25 0 1 0 4.5 0M808.02 525.20a2.25 2.25 0 1 0 -4.5 0a2.25 2.25 0 1 0 4.5 0M820.90 525.20a2.25 2.25 0 1 0 -4.5 0a2.25 2.25 0 1 0 4.5 0M833.77 525.20a2.25 2.25 0 1 0 -4.5 0a2.25 2.25 0 1 0 4.5 0M846.65 525.20a2.25 2.25 0 1 0 -4.5 0a2.25 2.25 0 1 0 4.5 0M859.52 525.20a2.25 2.25 0 1 0 -4.5 0a2.25 2.25 0 1 0 4.5 0M872.40 525.20a2.25 2.25 0 1 0 -4.5 0a2.25 2.25 0 1 0 4.5 0M885.27 525.20a2.25 2.25 0 1 0 -4.5 0a2.25 2.25 0 1 0 4.5 0M898.15 525.20a2.25 2.25 0 1 0 -4.5 0a2.25 2.25 0 1 0 4.5 0M911.02 525.20a2.25 2.25 0 1 0 -4.5 0a2.25 2.25 0 1 0 4.5 0M923.90 525.20a2.25 2.25 0 1 0 -4.5 0a2.25 2.25 0 1 0 4.5 0M936.77 525.20a2.25 2.25 0 1 0 -4.5 0a2.25 2.25 0 1 0 4.5 0M949.65 525.20a2.25 2.25 0 1 0 -4.5 0a2.25 2.25 0 1 0 4.5 0M962.52 525.20a2.25 2.25 0 1 0 -4.5 0a2.25 2.25 0 1 0 4.5 0M589.15 563.70a2.25 2.25 0 1 0 -4.5 0a2.25 2.25 0 1 0 4.5 0M602.02 563.70a2.25 2.25 0 1 0 -4.5 0a2.25 2.25 0 1 0 4.5 0M614.90 563.70a2.25 2.25 0 1 0 -4.5 0a2.25 2.25 0 1 0 4.5 0M627.77 563.70a2.25 2.25 0 1 0 -4.5 0a2.25 2.25 0 1 0 4.5 0M640.65 563.70a2.25 2.25 0 1 0 -4.5 0a2.25 2.25 0 1 0 4.5 0M653.52 563.70a2.25 2.25 0 1 0 -4.5 0a2.25 2.25 0 1 0 4.5 0M666.40 563.70a2.25 2.25 0 1 0 -4.5 0a2.25 2.25 0 1 0 4.5 0M679.27 563.70a2.25 2.25 0 1 0 -4.5 0a2.25 2.25 0 1 0 4.5 0M692.15 563.70a2.25 2.25 0 1 0 -4.5 0a2.25 2.25 0 1 0 4.5 0M705.02 563.70a2.25 2.25 0 1 0 -4.5 0a2.25 2.25 0 1 0 4.5 0M717.90 563.70a2.25 2.25 0 1 0 -4.5 0a2.25 2.25 0 1 0 4.5 0M730.77 563.70a2.25 2.25 0 1 0 -4.5 0a2.25 2.25 0 1 0 4.5 0M743.65 563.70a2.25 2.25 0 1 0 -4.5 0a2.25 2.25 0 1 0 4.5 0M756.52 563.70a2.25 2.25 0 1 0 -4.5 0a2.25 2.25 0 1 0 4.5 0M769.40 563.70a2.25 2.25 0 1 0 -4.5 0a2.25 2.25 0 1 0 4.5 0M782.27 563.70a2.25 2.25 0 1 0 -4.5 0a2.25 2.25 0 1 0 4.5 0M795.15 563.70a2.25 2.25 0 1 0 -4.5 0a2.25 2.25 0 1 0 4.5 0M808.02 563.70a2.25 2.25 0 1 0 -4.5 0a2.25 2.25 0 1 0 4.5 0M820.90 563.70a2.25 2.25 0 1 0 -4.5 0a2.25 2.25 0 1 0 4.5 0M833.77 563.70a2.25 2.25 0 1 0 -4.5 0a2.25 2.25 0 1 0 4.5 0M846.65 563.70a2.25 2.25 0 1 0 -4.5 0a2.25 2.25 0 1 0 4.5 0M859.52 563.70a2.25 2.25 0 1 0 -4.5 0a2.25 2.25 0 1 0 4.5 0M872.40 563.70a2.25 2.25 0 1 0 -4.5 0a2.25 2.25 0 1 0 4.5 0M885.27 563.70a2.25 2.25 0 1 0 -4.5 0a2.25 2.25 0 1 0 4.5 0M898.15 563.70a2.25 2.25 0 1 0 -4.5 0a2.25 2.25 0 1 0 4.5 0M911.02 563.70a2.25 2.25 0 1 0 -4.5 0a2.25 2.25 0 1 0 4.5 0M923.90 563.70a2.25 2.25 0 1 0 -4.5 0a2.25 2.25 0 1 0 4.5 0M936.77 563.70a2.25 2.25 0 1 0 -4.5 0a2.25 2.25 0 1 0 4.5 0M949.65 563.70a2.25 2.25 0 1 0 -4.5 0a2.25 2.25 0 1 0 4.5 0M962.52 563.70a2.25 2.25 0 1 0 -4.5 0a2.25 2.25 0 1 0 4.5 0M589.15 576.70a2.25 2.25 0 1 0 -4.5 0a2.25 2.25 0 1 0 4.5 0M602.02 576.70a2.25 2.25 0 1 0 -4.5 0a2.25 2.25 0 1 0 4.5 0M614.90 576.70a2.25 2.25 0 1 0 -4.5 0a2.25 2.25 0 1 0 4.5 0M627.77 576.70a2.25 2.25 0 1 0 -4.5 0a2.25 2.25 0 1 0 4.5 0M640.65 576.70a2.25 2.25 0 1 0 -4.5 0a2.25 2.25 0 1 0 4.5 0M653.52 576.70a2.25 2.25 0 1 0 -4.5 0a2.25 2.25 0 1 0 4.5 0M666.40 576.70a2.25 2.25 0 1 0 -4.5 0a2.25 2.25 0 1 0 4.5 0M679.27 576.70a2.25 2.25 0 1 0 -4.5 0a2.25 2.25 0 1 0 4.5 0M692.15 576.70a2.25 2.25 0 1 0 -4.5 0a2.25 2.25 0 1 0 4.5 0M705.02 576.70a2.25 2.25 0 1 0 -4.5 0a2.25 2.25 0 1 0 4.5 0M717.90 576.70a2.25 2.25 0 1 0 -4.5 0a2.25 2.25 0 1 0 4.5 0M730.77 576.70a2.25 2.25 0 1 0 -4.5 0a2.25 2.25 0 1 0 4.5 0M743.65 576.70a2.25 2.25 0 1 0 -4.5 0a2.25 2.25 0 1 0 4.5 0M756.52 576.70a2.25 2.25 0 1 0 -4.5 0a2.25 2.25 0 1 0 4.5 0M769.40 576.70a2.25 2.25 0 1 0 -4.5 0a2.25 2.25 0 1 0 4.5 0M782.27 576.70a2.25 2.25 0 1 0 -4.5 0a2.25 2.25 0 1 0 4.5 0M795.15 576.70a2.25 2.25 0 1 0 -4.5 0a2.25 2.25 0 1 0 4.5 0M808.02 576.70a2.25 2.25 0 1 0 -4.5 0a2.25 2.25 0 1 0 4.5 0M820.90 576.70a2.25 2.25 0 1 0 -4.5 0a2.25 2.25 0 1 0 4.5 0M833.77 576.70a2.25 2.25 0 1 0 -4.5 0a2.25 2.25 0 1 0 4.5 0M846.65 576.70a2.25 2.25 0 1 0 -4.5 0a2.25 2.25 0 1 0 4.5 0M859.52 576.70a2.25 2.25 0 1 0 -4.5 0a2.25 2.25 0 1 0 4.5 0M872.40 576.70a2.25 2.25 0 1 0 -4.5 0a2.25 2.25 0 1 0 4.5 0M885.27 576.70a2.25 2.25 0 1 0 -4.5 0a2.25 2.25 0 1 0 4.5 0M898.15 576.70a2.25 2.25 0 1 0 -4.5 0a2.25 2.25 0 1 0 4.5 0M911.02 576.70a2.25 2.25 0 1 0 -4.5 0a2.25 2.25 0 1 0 4.5 0M923.90 576.70a2.25 2.25 0 1 0 -4.5 0a2.25 2.25 0 1 0 4.5 0M936.77 576.70a2.25 2.25 0 1 0 -4.5 0a2.25 2.25 0 1 0 4.5 0M949.65 576.70a2.25 2.25 0 1 0 -4.5 0a2.25 2.25 0 1 0 4.5 0M962.52 576.70a2.25 2.25 0 1 0 -4.5 0a2.25 2.25 0 1 0 4.5 0" fill="#2c2c2c"/><text transform="translate(589.50 372.2) rotate(-90)" text-anchor="middle" font-family="Liberation Sans" font-size="8" fill="#3a3a3a">1</text><text transform="translate(589.50 536.4) rotate(-90)" text-anchor="middle" font-family="Liberation Sans" font-size="8" fill="#3a3a3a">1</text><text transform="translate(602.38 372.2) rotate(-90)" text-anchor="middle" font-family="Liberation Sans" font-size="8" fill="#3a3a3a">2</text><text transform="translate(602.38 536.4) rotate(-90)" text-anchor="middle" font-family="Liberation Sans" font-size="8" fill="#3a3a3a">2</text><text transform="translate(615.25 372.2) rotate(-90)" text-anchor="middle" font-family="Liberation Sans" font-size="8" fill="#3a3a3a">3</text><text transform="translate(615.25 536.4) rotate(-90)" text-anchor="middle" font-family="Liberation Sans" font-size="8" fill="#3a3a3a">3</text><text transform="translate(628.12 372.2) rotate(-90)" text-anchor="middle" font-family="Liberation Sans" font-size="8" fill="#3a3a3a">4</text><text transform="translate(628.12 536.4) rotate(-90)" text-anchor="middle" font-family="Liberation Sans" font-size="8" fill="#3a3a3a">4</text><text transform="translate(641.00 372.2) rotate(-90)" text-anchor="middle" font-family="Liberation Sans" font-size="8" fill="#3a3a3a">5</text><text transform="translate(641.00 536.4) rotate(-90)" text-anchor="middle" font-family="Liberation Sans" font-size="8" fill="#3a3a3a">5</text><text transform="translate(653.88 372.2) rotate(-90)" text-anchor="middle" font-family="Liberation Sans" font-size="8" fill="#3a3a3a">6</text><text transform="translate(653.88 536.4) rotate(-90)" text-anchor="middle" font-family="Liberation Sans" font-size="8" fill="#3a3a3a">6</text><text transform="translate(666.75 372.2) rotate(-90)" text-anchor="middle" font-family="Liberation Sans" font-size="8" fill="#3a3a3a">7</text><text transform="translate(666.75 536.4) rotate(-90)" text-anchor="middle" font-family="Liberation Sans" font-size="8" fill="#3a3a3a">7</text><text transform="translate(679.62 372.2) rotate(-90)" text-anchor="middle" font-family="Liberation Sans" font-size="8" fill="#3a3a3a">8</text><text transform="translate(679.62 536.4) rotate(-90)" text-anchor="middle" font-family="Liberation Sans" font-size="8" fill="#3a3a3a">8</text><text transform="translate(692.50 372.2) rotate(-90)" text-anchor="middle" font-family="Liberation Sans" font-size="8" fill="#3a3a3a">9</text><text transform="translate(692.50 536.4) rotate(-90)" text-anchor="middle" font-family="Liberation Sans" font-size="8" fill="#3a3a3a">9</text><text transform="translate(705.38 372.2) rotate(-90)" text-anchor="middle" font-family="Liberation Sans" font-size="8" fill="#3a3a3a">10</text><text transform="translate(705.38 536.4) rotate(-90)" text-anchor="middle" font-family="Liberation Sans" font-size="8" fill="#3a3a3a">10</text><text transform="translate(718.25 372.2) rotate(-90)" text-anchor="middle" font-family="Liberation Sans" font-size="8" fill="#3a3a3a">11</text><text transform="translate(718.25 536.4) rotate(-90)" text-anchor="middle" font-family="Liberation Sans" font-size="8" fill="#3a3a3a">11</text><text transform="translate(731.12 372.2) rotate(-90)" text-anchor="middle" font-family="Liberation Sans" font-size="8" fill="#3a3a3a">12</text><text transform="translate(731.12 536.4) rotate(-90)" text-anchor="middle" font-family="Liberation Sans" font-size="8" fill="#3a3a3a">12</text><text transform="translate(744.00 372.2) rotate(-90)" text-anchor="middle" font-family="Liberation Sans" font-size="8" fill="#3a3a3a">13</text><text transform="translate(744.00 536.4) rotate(-90)" text-anchor="middle" font-family="Liberation Sans" font-size="8" fill="#3a3a3a">13</text><text transform="translate(756.88 372.2) rotate(-90)" text-anchor="middle" font-family="Liberation Sans" font-size="8" fill="#3a3a3a">14</text><text transform="translate(756.88 536.4) rotate(-90)" text-anchor="middle" font-family="Liberation Sans" font-size="8" fill="#3a3a3a">14</text><text transform="translate(769.75 372.2) rotate(-90)" text-anchor="middle" font-family="Liberation Sans" font-size="8" fill="#3a3a3a">15</text><text transform="translate(769.75 536.4) rotate(-90)" text-anchor="middle" font-family="Liberation Sans" font-size="8" fill="#3a3a3a">15</text><text transform="translate(782.62 372.2) rotate(-90)" text-anchor="middle" font-family="Liberation Sans" font-size="8" fill="#3a3a3a">16</text><text transform="translate(782.62 536.4) rotate(-90)" text-anchor="middle" font-family="Liberation Sans" font-size="8" fill="#3a3a3a">16</text><text transform="translate(795.50 372.2) rotate(-90)" text-anchor="middle" font-family="Liberation Sans" font-size="8" fill="#3a3a3a">17</text><text transform="translate(795.50 536.4) rotate(-90)" text-anchor="middle" font-family="Liberation Sans" font-size="8" fill="#3a3a3a">17</text><text transform="translate(808.38 372.2) rotate(-90)" text-anchor="middle" font-family="Liberation Sans" font-size="8" fill="#3a3a3a">18</text><text transform="translate(808.38 536.4) rotate(-90)" text-anchor="middle" font-family="Liberation Sans" font-size="8" fill="#3a3a3a">18</text><text transform="translate(821.25 372.2) rotate(-90)" text-anchor="middle" font-family="Liberation Sans" font-size="8" fill="#3a3a3a">19</text><text transform="translate(821.25 536.4) rotate(-90)" text-anchor="middle" font-family="Liberation Sans" font-size="8" fill="#3a3a3a">19</text><text transform="translate(834.12 372.2) rotate(-90)" text-anchor="middle" font-family="Liberation Sans" font-size="8" fill="#3a3a3a">20</text><text transform="translate(834.12 536.4) rotate(-90)" text-anchor="middle" font-family="Liberation Sans" font-size="8" fill="#3a3a3a">20</text><text transform="translate(847.00 372.2) rotate(-90)" text-anchor="middle" font-family="Liberation Sans" font-size="8" fill="#3a3a3a">21</text><text transform="translate(847.00 536.4) rotate(-90)" text-anchor="middle" font-family="Liberation Sans" font-size="8" fill="#3a3a3a">21</text><text transform="translate(859.88 372.2) rotate(-90)" text-anchor="middle" font-family="Liberation Sans" font-size="8" fill="#3a3a3a">22</text><text transform="translate(859.88 536.4) rotate(-90)" text-anchor="middle" font-family="Liberation Sans" font-size="8" fill="#3a3a3a">22</text><text transform="translate(872.75 372.2) rotate(-90)" text-anchor="middle" font-family="Liberation Sans" font-size="8" fill="#3a3a3a">23</text><text transform="translate(872.75 536.4) rotate(-90)" text-anchor="middle" font-family="Liberation Sans" font-size="8" fill="#3a3a3a">23</text><text transform="translate(885.62 372.2) rotate(-90)" text-anchor="middle" font-family="Liberation Sans" font-size="8" fill="#3a3a3a">24</text><text transform="translate(885.62 536.4) rotate(-90)" text-anchor="middle" font-family="Liberation Sans" font-size="8" fill="#3a3a3a">24</text><text transform="translate(898.50 372.2) rotate(-90)" text-anchor="middle" font-family="Liberation Sans" font-size="8" fill="#3a3a3a">25</text><text transform="translate(898.50 536.4) rotate(-90)" text-anchor="middle" font-family="Liberation Sans" font-size="8" fill="#3a3a3a">25</text><text transform="translate(911.38 372.2) rotate(-90)" text-anchor="middle" font-family="Liberation Sans" font-size="8" fill="#3a3a3a">26</text><text transform="translate(911.38 536.4) rotate(-90)" text-anchor="middle" font-family="Liberation Sans" font-size="8" fill="#3a3a3a">26</text><text transform="translate(924.25 372.2) rotate(-90)" text-anchor="middle" font-family="Liberation Sans" font-size="8" fill="#3a3a3a">27</text><text transform="translate(924.25 536.4) rotate(-90)" text-anchor="middle" font-family="Liberation Sans" font-size="8" fill="#3a3a3a">27</text><text transform="translate(937.12 372.2) rotate(-90)" text-anchor="middle" font-family="Liberation Sans" font-size="8" fill="#3a3a3a">28</text><text transform="translate(937.12 536.4) rotate(-90)" text-anchor="middle" font-family="Liberation Sans" font-size="8" fill="#3a3a3a">28</text><text transform="translate(950.00 372.2) rotate(-90)" text-anchor="middle" font-family="Liberation Sans" font-size="8" fill="#3a3a3a">29</text><text transform="translate(950.00 536.4) rotate(-90)" text-anchor="middle" font-family="Liberation Sans" font-size="8" fill="#3a3a3a">29</text><text transform="translate(962.88 372.2) rotate(-90)" text-anchor="middle" font-family="Liberation Sans" font-size="8" fill="#3a3a3a">30</text><text transform="translate(962.88 536.4) rotate(-90)" text-anchor="middle" font-family="Liberation Sans" font-size="8" fill="#3a3a3a">30</text><text transform="translate(576.30 383.4) rotate(-90)" text-anchor="middle" font-family="Liberation Sans" font-size="9" fill="#555">j</text><text transform="translate(576.30 396.3) rotate(-90)" text-anchor="middle" font-family="Liberation Sans" font-size="9" fill="#555">i</text><text transform="translate(576.30 409.2) rotate(-90)" text-anchor="middle" font-family="Liberation Sans" font-size="9" fill="#555">h</text><text transform="translate(576.30 422.1) rotate(-90)" text-anchor="middle" font-family="Liberation Sans" font-size="9" fill="#555">g</text><text transform="translate(576.30 435.0) rotate(-90)" text-anchor="middle" font-family="Liberation Sans" font-size="9" fill="#555">f</text><text transform="translate(576.30 473.7) rotate(-90)" text-anchor="middle" font-family="Liberation Sans" font-size="9" fill="#555">e</text><text transform="translate(576.30 486.6) rotate(-90)" text-anchor="middle" font-family="Liberation Sans" font-size="9" fill="#555">d</text><text transform="translate(576.30 499.4) rotate(-90)" text-anchor="middle" font-family="Liberation Sans" font-size="9" fill="#555">c</text><text transform="translate(576.30 512.3) rotate(-90)" text-anchor="middle" font-family="Liberation Sans" font-size="9" fill="#555">b</text><text transform="translate(576.30 525.2) rotate(-90)" text-anchor="middle" font-family="Liberation Sans" font-size="9" fill="#555">a</text><text transform="translate(976.90 383.4) rotate(-90)" text-anchor="middle" font-family="Liberation Sans" font-size="9" fill="#555">j</text><text transform="translate(976.90 396.3) rotate(-90)" text-anchor="middle" font-family="Liberation Sans" font-size="9" fill="#555">i</text><text transform="translate(976.90 409.2) rotate(-90)" text-anchor="middle" font-family="Liberation Sans" font-size="9" fill="#555">h</text><text transform="translate(976.90 422.1) rotate(-90)" text-anchor="middle" font-family="Liberation Sans" font-size="9" fill="#555">g</text><text transform="translate(976.90 435.0) rotate(-90)" text-anchor="middle" font-family="Liberation Sans" font-size="9" fill="#555">f</text><text transform="translate(976.90 473.7) rotate(-90)" text-anchor="middle" font-family="Liberation Sans" font-size="9" fill="#555">e</text><text transform="translate(976.90 486.6) rotate(-90)" text-anchor="middle" font-family="Liberation Sans" font-size="9" fill="#555">d</text><text transform="translate(976.90 499.4) rotate(-90)" text-anchor="middle" font-family="Liberation Sans" font-size="9" fill="#555">c</text><text transform="translate(976.90 512.3) rotate(-90)" text-anchor="middle" font-family="Liberation Sans" font-size="9" fill="#555">b</text><text transform="translate(976.90 525.2) rotate(-90)" text-anchor="middle" font-family="Liberation Sans" font-size="9" fill="#555">a</text><path d="M571.3 324.5V331.5" stroke="#444" stroke-width="1"/><path d="M571.3 553.0V560.0" stroke="#444" stroke-width="1"/><path d="M567.6 350.5H575.0M571.3 346.8V354.2" stroke="#c9363b" stroke-width="1.1"/><path d="M567.6 579.5H575.0M571.3 575.8V583.2" stroke="#c9363b" stroke-width="1.1"/><path d="M974.0 324.5V331.5" stroke="#444" stroke-width="1"/><path d="M974.0 553.0V560.0" stroke="#444" stroke-width="1"/><path d="M970.3 350.5H977.7M974.0 346.8V354.2" stroke="#c9363b" stroke-width="1.1"/><path d="M970.3 579.5H977.7M974.0 575.8V583.2" stroke="#c9363b" stroke-width="1.1"/><path d="M651.275 435V486.3" stroke="#8f8f8f" stroke-width="2"/><circle cx="651.275" cy="435" r="2.3" fill="#6a6a6a"/><circle cx="651.275" cy="486.3" r="2.3" fill="#6a6a6a"/><path d="M648.275 441.5C648.275 443.5 645.0749999999999 444 645.0749999999999 448V455C645.0749999999999 458 646.675 459 646.675 461V466C646.675 468 645.0749999999999 469 645.0749999999999 472V474C645.0749999999999 477 648.275 477.5 648.275 479.5H654.275C654.275 477.5 657.475 477 657.475 474V472C657.475 469 655.875 468 655.875 466V461C655.875 459 657.475 458 657.475 455V448C657.475 444 654.275 443.5 654.275 441.5Z" fill="#ddb57a"/><rect x="645.0749999999999" y="448.6" width="12.4" height="1.2" fill="#c8b400"/><rect x="646.475" y="456.8" width="9.6" height="3.6" fill="#ff1a1a"/><rect x="646.475" y="463.6" width="9.6" height="3.4" fill="#111"/><rect x="645.0749999999999" y="470.2" width="12.4" height="3.6" fill="#8a4a12"/><path d="M741.4 435V486.3" stroke="#8f8f8f" stroke-width="2"/><circle cx="741.4" cy="435" r="2.3" fill="#6a6a6a"/><circle cx="741.4" cy="486.3" r="2.3" fill="#6a6a6a"/><path d="M738.4 441.5C738.4 443.5 735.1999999999999 444 735.1999999999999 448V455C735.1999999999999 458 736.8 459 736.8 461V466C736.8 468 735.1999999999999 469 735.1999999999999 472V474C735.1999999999999 477 738.4 477.5 738.4 479.5H744.4C744.4 477.5 747.6 477 747.6 474V472C747.6 469 746.0 468 746.0 466V461C746.0 459 747.6 458 747.6 455V448C747.6 444 744.4 443.5 744.4 441.5Z" fill="#ddb57a"/><rect x="735.1999999999999" y="448.6" width="12.4" height="1.2" fill="#c8b400"/><rect x="736.6" y="456.8" width="9.6" height="3.6" fill="#ff1a1a"/><rect x="736.6" y="463.6" width="9.6" height="3.4" fill="#111"/><rect x="735.1999999999999" y="470.2" width="12.4" height="3.6" fill="#8a4a12"/><path d="M831.525 435V486.3" stroke="#8f8f8f" stroke-width="2"/><circle cx="831.525" cy="435" r="2.3" fill="#6a6a6a"/><circle cx="831.525" cy="486.3" r="2.3" fill="#6a6a6a"/><path d="M828.525 441.5C828.525 443.5 825.3249999999999 444 825.3249999999999 448V455C825.3249999999999 458 826.925 459 826.925 461V466C826.925 468 825.3249999999999 469 825.3249999999999 472V474C825.3249999999999 477 828.525 477.5 828.525 479.5H834.525C834.525 477.5 837.725 477 837.725 474V472C837.725 469 836.125 468 836.125 466V461C836.125 459 837.725 458 837.725 455V448C837.725 444 834.525 443.5 834.525 441.5Z" fill="#ddb57a"/><rect x="825.3249999999999" y="448.6" width="12.4" height="1.2" fill="#c8b400"/><rect x="826.725" y="456.8" width="9.6" height="3.6" fill="#ff1a1a"/><rect x="826.725" y="463.6" width="9.6" height="3.4" fill="#111"/><rect x="825.3249999999999" y="470.2" width="12.4" height="3.6" fill="#8a4a12"/><path d="M651.275 499.2V563.7" stroke="#30353a" stroke-width="3" stroke-linecap="round"/><path d="M741.4 499.2V563.7" stroke="#30353a" stroke-width="3" stroke-linecap="round"/><path d="M831.525 499.2V563.7" stroke="#30353a" stroke-width="3" stroke-linecap="round"/><path d="M651.275 376V383.4" stroke="#979797" stroke-width="2.8" stroke-linecap="round"/><path d="M659.775 375L664.15 383.4" stroke="#979797" stroke-width="2.8" stroke-linecap="round"/><ellipse cx="656.775" cy="371" rx="10" ry="5" fill="#8c1f22"/><path d="M647.975 368V356A8.8 9 0 0 1 665.5749999999999 356V368Z" fill="#d63333"/><ellipse cx="656.775" cy="368" rx="8.8" ry="3.6" fill="#b02a2d"/><path d="M741.4 376V383.4" stroke="#979797" stroke-width="2.8" stroke-linecap="round"/><path d="M749.9 375L754.275 383.4" stroke="#979797" stroke-width="2.8" stroke-linecap="round"/><ellipse cx="746.9" cy="371" rx="10" ry="5" fill="#6b611c"/><path d="M738.1 368V356A8.8 9 0 0 1 755.6999999999999 356V368Z" fill="#7d7122"/><ellipse cx="746.9" cy="368" rx="8.8" ry="3.6" fill="#857a2a"/><path d="M831.525 376V383.4" stroke="#979797" stroke-width="2.8" stroke-linecap="round"/><path d="M840.025 375L844.4 383.4" stroke="#979797" stroke-width="2.8" stroke-linecap="round"/><ellipse cx="837.025" cy="371" rx="10" ry="5" fill="#17701f"/><path d="M828.225 368V356A8.8 9 0 0 1 845.8249999999999 356V368Z" fill="#1f8a2f"/><ellipse cx="837.025" cy="368" rx="8.8" ry="3.6" fill="#2a9a3a"/></svg>
<svg class="a" style="left:0;top:0" width="1160" height="1020" viewBox="0 0 1160 1020"><path d="M387.6 710.3H408V732.7H387.6A11.2 11.2 0 0 1 387.6 710.3Z" fill="#2f2f2f"/><rect x="396" y="710.3" width="10" height="22.4" fill="#262626"/><path d="M405.3 707.5A1.5 1.5 0 0 1 406.8 706.2H420.5A1 1 0 0 1 421.5 707.2V711.5H427.5V707.2A1 1 0 0 1 428.5 706.2H443V736.9H428.5A1 1 0 0 1 427.5 735.9V731.5H421.5V735.9A1 1 0 0 1 420.5 736.9H406.8A1.5 1.5 0 0 1 405.3 735.4Z" fill="#2f2f2f"/><ellipse cx="413.5" cy="721.5" rx="2.8" ry="10" fill="#222"/><ellipse cx="434.5" cy="721.5" rx="2.8" ry="10" fill="#222"/><path d="M443 697.5L444.5 696.5Q448 696 450 693L455 689H558.8V754.5H455L450 750Q448 747 444.5 746.5L443 745.5Z" fill="#333"/><rect x="480.0" y="688.9" width="3.2" height="1.6" fill="#f3f4f6"/><rect x="480.0" y="752.9" width="3.2" height="1.6" fill="#f3f4f6"/><rect x="488.9" y="688.9" width="3.2" height="1.6" fill="#f3f4f6"/><rect x="488.9" y="752.9" width="3.2" height="1.6" fill="#f3f4f6"/><rect x="497.8" y="688.9" width="3.2" height="1.6" fill="#f3f4f6"/><rect x="497.8" y="752.9" width="3.2" height="1.6" fill="#f3f4f6"/><rect x="506.7" y="688.9" width="3.2" height="1.6" fill="#f3f4f6"/><rect x="506.7" y="752.9" width="3.2" height="1.6" fill="#f3f4f6"/><rect x="515.6" y="688.9" width="3.2" height="1.6" fill="#f3f4f6"/><rect x="515.6" y="752.9" width="3.2" height="1.6" fill="#f3f4f6"/><rect x="524.5" y="688.9" width="3.2" height="1.6" fill="#f3f4f6"/><rect x="524.5" y="752.9" width="3.2" height="1.6" fill="#f3f4f6"/><rect x="484.2" y="701.9" width="61.8" height="39.7" fill="#272727"/><path d="M494 721.6H533M501 721.6L508 713.5H512M507.5 721.6L514 728.5H518" stroke="#1a1a1a" stroke-width="1.6" fill="none"/><path d="M492.5 721.6L497.5 718.5V724.7Z" fill="#1a1a1a"/><rect x="500.8" y="711" width="5" height="5" fill="#1a1a1a"/><circle cx="533.5" cy="721.6" r="4.2" fill="#1a1a1a"/><circle cx="510.5" cy="729" r="2.8" fill="#1a1a1a"/><path d="M385 718.5L389.5 717.5L390 720.5L395.5 722.5L391 723.5L390.5 721Z" fill="#ffd400"/><path d="M597.5 633H920.4L928.5 641.3L927.2 699L941.6 714V877L928.8 891V900A3 3 0 0 1 925.8 903H597.5A3 3 0 0 1 594.5 900V636A3 3 0 0 1 597.5 633Z" fill="#2f6d9c"/><rect x="603" y="682" width="16" height="14" rx="7" fill="#e2e2e2"/><rect x="603" y="748" width="16" height="14" rx="7" fill="#e2e2e2"/><rect x="562.3" y="691.3" width="83.8" height="61.7" fill="#dcdcdc"/><rect x="562.3" y="750.5" width="83.8" height="2.5" fill="#b9b9b9"/><rect x="558.8" y="701" width="3.5" height="41" fill="#cfcfcf"/><path d="M642.8 712.5V733" stroke="#a8a8a8" stroke-width="0.8"/><rect x="606.5" y="645" width="4" height="5" rx="1" fill="#e0e0e0"/><rect x="606.5" y="656" width="4" height="5" rx="1" fill="#e0e0e0"/><rect x="606.5" y="667" width="4" height="5" rx="1" fill="#e0e0e0"/><rect x="643.5" y="645" width="4" height="5" rx="1" fill="#e0e0e0"/><rect x="643.5" y="667" width="4" height="5" rx="1" fill="#e0e0e0"/><rect x="610" y="643.5" width="34" height="33.5" rx="2" fill="#264f70"/><rect x="610" y="642" width="34" height="33.5" rx="2" fill="#e0e0e0"/><circle cx="627" cy="660" r="9" fill="#7a7a7a"/><circle cx="626.8" cy="658.6" r="9" fill="#a3472c"/><circle cx="671.8" cy="646" r="8" fill="#f3f4f6" stroke="#8f7d3e" stroke-width="1.1"/><circle cx="930.4" cy="722" r="8" fill="#f3f4f6" stroke="#8f7d3e" stroke-width="1.1"/><circle cx="930.4" cy="864" r="8" fill="#f3f4f6" stroke="#8f7d3e" stroke-width="1.1"/><circle cx="664.8" cy="889.9" r="8" fill="#f3f4f6" stroke="#8f7d3e" stroke-width="1.1"/><rect x="682.6" y="639.4" width="130.2" height="12.5" fill="#323232"/><rect x="685.60" y="641.6" width="6.2" height="6.4" fill="#1b1b1b"/><path d="M685.20 650.3L687.40 648.0H691.80L694.00 650.3Z" fill="#787878"/><path d="M691.80 648.0V643.6L694.00 641.6V650.3Z" fill="#5c5c5c"/><rect x="698.56" y="641.6" width="6.2" height="6.4" fill="#1b1b1b"/><path d="M698.16 650.3L700.36 648.0H704.76L706.96 650.3Z" fill="#787878"/><path d="M704.76 648.0V643.6L706.96 641.6V650.3Z" fill="#5c5c5c"/><rect x="711.52" y="641.6" width="6.2" height="6.4" fill="#1b1b1b"/><path d="M711.12 650.3L713.32 648.0H717.72L719.92 650.3Z" fill="#787878"/><path d="M717.72 648.0V643.6L719.92 641.6V650.3Z" fill="#5c5c5c"/><rect x="724.48" y="641.6" width="6.2" height="6.4" fill="#1b1b1b"/><path d="M724.08 650.3L726.28 648.0H730.68L732.88 650.3Z" fill="#787878"/><path d="M730.68 648.0V643.6L732.88 641.6V650.3Z" fill="#5c5c5c"/><rect x="737.44" y="641.6" width="6.2" height="6.4" fill="#1b1b1b"/><path d="M737.04 650.3L739.24 648.0H743.64L745.84 650.3Z" fill="#787878"/><path d="M743.64 648.0V643.6L745.84 641.6V650.3Z" fill="#5c5c5c"/><rect x="750.40" y="641.6" width="6.2" height="6.4" fill="#1b1b1b"/><path d="M750.00 650.3L752.20 648.0H756.60L758.80 650.3Z" fill="#787878"/><path d="M756.60 648.0V643.6L758.80 641.6V650.3Z" fill="#5c5c5c"/><rect x="763.36" y="641.6" width="6.2" height="6.4" fill="#1b1b1b"/><path d="M762.96 650.3L765.16 648.0H769.56L771.76 650.3Z" fill="#787878"/><path d="M769.56 648.0V643.6L771.76 641.6V650.3Z" fill="#5c5c5c"/><rect x="776.32" y="641.6" width="6.2" height="6.4" fill="#1b1b1b"/><path d="M775.92 650.3L778.12 648.0H782.52L784.72 650.3Z" fill="#787878"/><path d="M782.52 648.0V643.6L784.72 641.6V650.3Z" fill="#5c5c5c"/><rect x="789.28" y="641.6" width="6.2" height="6.4" fill="#1b1b1b"/><path d="M788.88 650.3L791.08 648.0H795.48L797.68 650.3Z" fill="#787878"/><path d="M795.48 648.0V643.6L797.68 641.6V650.3Z" fill="#5c5c5c"/><rect x="802.24" y="641.6" width="6.2" height="6.4" fill="#1b1b1b"/><path d="M801.84 650.3L804.04 648.0H808.44L810.64 650.3Z" fill="#787878"/><path d="M808.44 648.0V643.6L810.64 641.6V650.3Z" fill="#5c5c5c"/><rect x="819.3" y="639.4" width="104.3" height="12.5" fill="#323232"/><rect x="822.30" y="641.6" width="6.2" height="6.4" fill="#1b1b1b"/><path d="M821.90 650.3L824.10 648.0H828.50L830.70 650.3Z" fill="#787878"/><path d="M828.50 648.0V643.6L830.70 641.6V650.3Z" fill="#5c5c5c"/><rect x="835.26" y="641.6" width="6.2" height="6.4" fill="#1b1b1b"/><path d="M834.86 650.3L837.06 648.0H841.46L843.66 650.3Z" fill="#787878"/><path d="M841.46 648.0V643.6L843.66 641.6V650.3Z" fill="#5c5c5c"/><rect x="848.22" y="641.6" width="6.2" height="6.4" fill="#1b1b1b"/><path d="M847.82 650.3L850.02 648.0H854.42L856.62 650.3Z" fill="#787878"/><path d="M854.42 648.0V643.6L856.62 641.6V650.3Z" fill="#5c5c5c"/><rect x="861.18" y="641.6" width="6.2" height="6.4" fill="#1b1b1b"/><path d="M860.78 650.3L862.98 648.0H867.38L869.58 650.3Z" fill="#787878"/><path d="M867.38 648.0V643.6L869.58 641.6V650.3Z" fill="#5c5c5c"/><rect x="874.14" y="641.6" width="6.2" height="6.4" fill="#1b1b1b"/><path d="M873.74 650.3L875.94 648.0H880.34L882.54 650.3Z" fill="#787878"/><path d="M880.34 648.0V643.6L882.54 641.6V650.3Z" fill="#5c5c5c"/><rect x="887.10" y="641.6" width="6.2" height="6.4" fill="#1b1b1b"/><path d="M886.70 650.3L888.90 648.0H893.30L895.50 650.3Z" fill="#787878"/><path d="M893.30 648.0V643.6L895.50 641.6V650.3Z" fill="#5c5c5c"/><rect x="900.06" y="641.6" width="6.2" height="6.4" fill="#1b1b1b"/><path d="M899.66 650.3L901.86 648.0H906.26L908.46 650.3Z" fill="#787878"/><path d="M906.26 648.0V643.6L908.46 641.6V650.3Z" fill="#5c5c5c"/><rect x="913.02" y="641.6" width="6.2" height="6.4" fill="#1b1b1b"/><path d="M912.62 650.3L914.82 648.0H919.22L921.42 650.3Z" fill="#787878"/><path d="M919.22 648.0V643.6L921.42 641.6V650.3Z" fill="#5c5c5c"/><rect x="729.4" y="884.0" width="104.3" height="12.5" fill="#323232"/><rect x="732.40" y="886.2" width="6.2" height="6.4" fill="#1b1b1b"/><path d="M732.00 894.9L734.20 892.6H738.60L740.80 894.9Z" fill="#787878"/><path d="M738.60 892.6V888.2L740.80 886.2V894.9Z" fill="#5c5c5c"/><rect x="745.36" y="886.2" width="6.2" height="6.4" fill="#1b1b1b"/><path d="M744.96 894.9L747.16 892.6H751.56L753.76 894.9Z" fill="#787878"/><path d="M751.56 892.6V888.2L753.76 886.2V894.9Z" fill="#5c5c5c"/><rect x="758.32" y="886.2" width="6.2" height="6.4" fill="#1b1b1b"/><path d="M757.92 894.9L760.12 892.6H764.52L766.72 894.9Z" fill="#787878"/><path d="M764.52 892.6V888.2L766.72 886.2V894.9Z" fill="#5c5c5c"/><rect x="771.28" y="886.2" width="6.2" height="6.4" fill="#1b1b1b"/><path d="M770.88 894.9L773.08 892.6H777.48L779.68 894.9Z" fill="#787878"/><path d="M777.48 892.6V888.2L779.68 886.2V894.9Z" fill="#5c5c5c"/><rect x="784.24" y="886.2" width="6.2" height="6.4" fill="#1b1b1b"/><path d="M783.84 894.9L786.04 892.6H790.44L792.64 894.9Z" fill="#787878"/><path d="M790.44 892.6V888.2L792.64 886.2V894.9Z" fill="#5c5c5c"/><rect x="797.20" y="886.2" width="6.2" height="6.4" fill="#1b1b1b"/><path d="M796.80 894.9L799.00 892.6H803.40L805.60 894.9Z" fill="#787878"/><path d="M803.40 892.6V888.2L805.60 886.2V894.9Z" fill="#5c5c5c"/><rect x="810.16" y="886.2" width="6.2" height="6.4" fill="#1b1b1b"/><path d="M809.76 894.9L811.96 892.6H816.36L818.56 894.9Z" fill="#787878"/><path d="M816.36 892.6V888.2L818.56 886.2V894.9Z" fill="#5c5c5c"/><rect x="823.12" y="886.2" width="6.2" height="6.4" fill="#1b1b1b"/><path d="M822.72 894.9L824.92 892.6H829.32L831.52 894.9Z" fill="#787878"/><path d="M829.32 892.6V888.2L831.52 886.2V894.9Z" fill="#5c5c5c"/><rect x="844.8" y="884.0" width="78.4" height="12.5" fill="#323232"/><rect x="847.80" y="886.2" width="6.2" height="6.4" fill="#1b1b1b"/><path d="M847.40 894.9L849.60 892.6H854.00L856.20 894.9Z" fill="#787878"/><path d="M854.00 892.6V888.2L856.20 886.2V894.9Z" fill="#5c5c5c"/><rect x="860.76" y="886.2" width="6.2" height="6.4" fill="#1b1b1b"/><path d="M860.36 894.9L862.56 892.6H866.96L869.16 894.9Z" fill="#787878"/><path d="M866.96 892.6V888.2L869.16 886.2V894.9Z" fill="#5c5c5c"/><rect x="873.72" y="886.2" width="6.2" height="6.4" fill="#1b1b1b"/><path d="M873.32 894.9L875.52 892.6H879.92L882.12 894.9Z" fill="#787878"/><path d="M879.92 892.6V888.2L882.12 886.2V894.9Z" fill="#5c5c5c"/><rect x="886.68" y="886.2" width="6.2" height="6.4" fill="#1b1b1b"/><path d="M886.28 894.9L888.48 892.6H892.88L895.08 894.9Z" fill="#787878"/><path d="M892.88 892.6V888.2L895.08 886.2V894.9Z" fill="#5c5c5c"/><rect x="899.64" y="886.2" width="6.2" height="6.4" fill="#1b1b1b"/><path d="M899.24 894.9L901.44 892.6H905.84L908.04 894.9Z" fill="#787878"/><path d="M905.84 892.6V888.2L908.04 886.2V894.9Z" fill="#5c5c5c"/><rect x="912.60" y="886.2" width="6.2" height="6.4" fill="#1b1b1b"/><path d="M912.20 894.9L914.40 892.6H918.80L921.00 894.9Z" fill="#787878"/><path d="M918.80 892.6V888.2L921.00 886.2V894.9Z" fill="#5c5c5c"/><text transform="translate(719.1 658) rotate(-90)" text-anchor="end" font-family="Liberation Sans" font-size="8.5" fill="#eef2f5">AREF</text><text transform="translate(732.1 658) rotate(-90)" text-anchor="end" font-family="Liberation Sans" font-size="8.5" fill="#eef2f5">GND</text><text transform="translate(745.0 658) rotate(-90)" text-anchor="end" font-family="Liberation Sans" font-size="10" fill="#eef2f5">13</text><text transform="translate(758.0 658) rotate(-90)" text-anchor="end" font-family="Liberation Sans" font-size="10" fill="#eef2f5">12</text><text transform="translate(771.0 658) rotate(-90)" text-anchor="end" font-family="Liberation Sans" font-size="10" fill="#eef2f5">~11</text><text transform="translate(783.9 658) rotate(-90)" text-anchor="end" font-family="Liberation Sans" font-size="10" fill="#eef2f5">~10</text><text transform="translate(796.9 658) rotate(-90)" text-anchor="end" font-family="Liberation Sans" font-size="10" fill="#eef2f5">~9</text><text transform="translate(809.8 658) rotate(-90)" text-anchor="end" font-family="Liberation Sans" font-size="10" fill="#eef2f5">8</text><text transform="translate(829.9 658) rotate(-90)" text-anchor="end" font-family="Liberation Sans" font-size="10" fill="#eef2f5">7</text><text transform="translate(842.9 658) rotate(-90)" text-anchor="end" font-family="Liberation Sans" font-size="10" fill="#eef2f5">~6</text><text transform="translate(855.8 658) rotate(-90)" text-anchor="end" font-family="Liberation Sans" font-size="10" fill="#eef2f5">~5</text><text transform="translate(868.8 658) rotate(-90)" text-anchor="end" font-family="Liberation Sans" font-size="10" fill="#eef2f5">4</text><text transform="translate(881.7 658) rotate(-90)" text-anchor="end" font-family="Liberation Sans" font-size="10" fill="#eef2f5">~3</text><text transform="translate(894.7 658) rotate(-90)" text-anchor="end" font-family="Liberation Sans" font-size="10" fill="#eef2f5">2</text><text transform="translate(907.7 658) rotate(-90)" text-anchor="end" font-family="Liberation Sans" font-size="9" font-weight="bold" fill="#eef2f5">TX&#160;&#160;&#160;1</text><path d="M904.3 665.5V671.5M901.8 668L904.3 665.5L906.8 668" stroke="#eef2f5" stroke-width="1.2" fill="none"/><text transform="translate(920.6 658) rotate(-90)" text-anchor="end" font-family="Liberation Sans" font-size="9" font-weight="bold" fill="#eef2f5">RX&#160;&#160;&#160;0</text><path d="M917.2 665.5V671.5M914.7 669L917.2 671.5L919.7 669" stroke="#eef2f5" stroke-width="1.2" fill="none"/><path d="M736 684.6H920" stroke="#eef2f5" stroke-width="1.1"/><text x="807.5" y="681" font-family="Liberation Sans" font-weight="bold" font-size="9.6" fill="#eef2f5" textLength="82.5" lengthAdjust="spacingAndGlyphs">DIGITAL (PWM~)</text><text x="718.6" y="698" font-family="Liberation Sans" font-weight="bold" font-size="7.5" fill="#eef2f5">L</text><rect x="727.4" y="691.8" width="17.2" height="6.3" fill="#c9c9c9"/><rect x="732.5" y="691.8" width="7" height="6.3" fill="#e39a2d"/><circle cx="736" cy="695" r="1.3" fill="#ffe9b0"/><text x="713.5" y="723" font-family="Liberation Sans" font-weight="bold" font-size="7.5" fill="#eef2f5">TX</text><text x="713.5" y="735.5" font-family="Liberation Sans" font-weight="bold" font-size="7.5" fill="#eef2f5">RX</text><rect x="727.4" y="716" width="17.2" height="6.5" fill="#cfcfcf"/><rect x="731" y="716" width="10" height="6.5" fill="#e6e6e6"/><rect x="727.4" y="728.4" width="17.2" height="6.5" fill="#cfcfcf"/><rect x="731" y="728.4" width="10" height="6.5" fill="#e6e6e6"/><rect x="679.4" y="715.6" width="27.3" height="27.9" rx="1" fill="#3b3f44"/><rect x="679.4" y="741.5" width="27.3" height="2" fill="#2a2d30"/><ellipse cx="770.3" cy="706" rx="15.3" ry="14.1" fill="#eef2f5"/><ellipse cx="799.7" cy="706" rx="15.3" ry="14.1" fill="#eef2f5"/><path d="M760.3 706C760.3 699 765 697.3 770.5 697.3C775.5 697.3 778.5 700 781.8 706C778.5 712 775.5 714.7 770.5 714.7C765 714.7 760.3 713 760.3 706Z" fill="#2f6d9c"/><path d="M809.7 706C809.7 699 805 697.3 799.5 697.3C794.5 697.3 791.5 700 788.2 706C791.5 712 794.5 714.7 799.5 714.7C805 714.7 809.7 713 809.7 706Z" fill="#2f6d9c"/><path d="M766 706H774.9M795 706H804.4M799.7 701.3V710.7" stroke="#eef2f5" stroke-width="3.6"/><text x="757" y="732" font-family="Liberation Sans" font-weight="bold" font-size="11.2" fill="#eef2f5" textLength="56" lengthAdjust="spacingAndGlyphs">ARDUINO</text><rect x="823.8" y="692.6" width="59.2" height="27.4" rx="13.7" fill="none" stroke="#eef2f5" stroke-width="0.9" stroke-dasharray="1.2 1"/><path d="M832.2 698V709.2A5.5 5.5 0 0 0 843.2 709.2V698M847.2 715V698L858 715V698" stroke="#fff" stroke-width="1.3" fill="none"/><ellipse cx="869.2" cy="706.4" rx="7.2" ry="8.4" fill="none" stroke="#fff" stroke-width="1.3"/><rect x="889.3" y="716" width="16.7" height="6" fill="#bdbdbd"/><rect x="893.5" y="716" width="8" height="6" fill="#39d23a"/><circle cx="897.5" cy="719" r="1.3" fill="#e9ffe0"/><text x="907.4" y="722" font-family="Liberation Sans" font-weight="bold" font-size="7.5" fill="#eef2f5">ON</text><rect x="657.6" y="759.8" width="61.2" height="23.2" rx="11.6" fill="#cfcfcf"/><rect x="659.6" y="761.3" width="57.2" height="19.7" rx="9.8" fill="#dedede"/><text x="688.2" y="775" text-anchor="middle" font-family="Liberation Sans" font-size="6.8" fill="#eaeaea">SPX16.000G</text><rect x="681" y="795" width="16" height="16" fill="#34383c"/><rect x="613" y="809.5" width="9" height="15.5" fill="#dcdcdc"/><rect x="621.7" y="801" width="17.3" height="33" fill="#34383c"/><rect x="639" y="805" width="10" height="6" fill="#d9d9d9"/><rect x="639" y="814.8" width="10" height="6" fill="#d9d9d9"/><rect x="639" y="824.6" width="10" height="6" fill="#d9d9d9"/><rect x="701" y="822.5" width="8" height="14" fill="#2c2f33"/><rect x="697.5" y="824.5" width="3.5" height="3" fill="#ddd"/><rect x="697.5" y="831.5" width="3.5" height="3" fill="#ddd"/><rect x="709" y="824.5" width="3.5" height="3" fill="#ddd"/><rect x="709" y="831.5" width="3.5" height="3" fill="#ddd"/><rect x="735" y="799.4" width="189" height="46.6" rx="2" fill="#2a2c2f"/><rect x="736.5" y="805" width="186" height="36" rx="2" fill="#3b3e42"/><rect x="741.4" y="801.2" width="7.4" height="3.4" rx="1.5" fill="#f0f0f0"/><rect x="741.4" y="841.4" width="7.4" height="3.4" rx="1.5" fill="#f0f0f0"/><rect x="754.2" y="801.2" width="7.4" height="3.4" rx="1.5" fill="#f0f0f0"/><rect x="754.2" y="841.4" width="7.4" height="3.4" rx="1.5" fill="#f0f0f0"/><rect x="767.1" y="801.2" width="7.4" height="3.4" rx="1.5" fill="#f0f0f0"/><rect x="767.1" y="841.4" width="7.4" height="3.4" rx="1.5" fill="#f0f0f0"/><rect x="779.9" y="801.2" width="7.4" height="3.4" rx="1.5" fill="#f0f0f0"/><rect x="779.9" y="841.4" width="7.4" height="3.4" rx="1.5" fill="#f0f0f0"/><rect x="792.8" y="801.2" width="7.4" height="3.4" rx="1.5" fill="#f0f0f0"/><rect x="792.8" y="841.4" width="7.4" height="3.4" rx="1.5" fill="#f0f0f0"/><rect x="805.6" y="801.2" width="7.4" height="3.4" rx="1.5" fill="#f0f0f0"/><rect x="805.6" y="841.4" width="7.4" height="3.4" rx="1.5" fill="#f0f0f0"/><rect x="818.5" y="801.2" width="7.4" height="3.4" rx="1.5" fill="#f0f0f0"/><rect x="818.5" y="841.4" width="7.4" height="3.4" rx="1.5" fill="#f0f0f0"/><rect x="831.4" y="801.2" width="7.4" height="3.4" rx="1.5" fill="#f0f0f0"/><rect x="831.4" y="841.4" width="7.4" height="3.4" rx="1.5" fill="#f0f0f0"/><rect x="844.2" y="801.2" width="7.4" height="3.4" rx="1.5" fill="#f0f0f0"/><rect x="844.2" y="841.4" width="7.4" height="3.4" rx="1.5" fill="#f0f0f0"/><rect x="857.0" y="801.2" width="7.4" height="3.4" rx="1.5" fill="#f0f0f0"/><rect x="857.0" y="841.4" width="7.4" height="3.4" rx="1.5" fill="#f0f0f0"/><rect x="869.9" y="801.2" width="7.4" height="3.4" rx="1.5" fill="#f0f0f0"/><rect x="869.9" y="841.4" width="7.4" height="3.4" rx="1.5" fill="#f0f0f0"/><rect x="882.8" y="801.2" width="7.4" height="3.4" rx="1.5" fill="#f0f0f0"/><rect x="882.8" y="841.4" width="7.4" height="3.4" rx="1.5" fill="#f0f0f0"/><rect x="895.6" y="801.2" width="7.4" height="3.4" rx="1.5" fill="#f0f0f0"/><rect x="895.6" y="841.4" width="7.4" height="3.4" rx="1.5" fill="#f0f0f0"/><rect x="908.4" y="801.2" width="7.4" height="3.4" rx="1.5" fill="#f0f0f0"/><rect x="908.4" y="841.4" width="7.4" height="3.4" rx="1.5" fill="#f0f0f0"/><circle cx="761.8" cy="822.4" r="5" fill="#26282b"/><circle cx="896.8" cy="822.4" r="5" fill="#26282b"/><circle cx="680.2" cy="865.9" r="15.7" fill="#27547a"/><circle cx="680.2" cy="860.9" r="15.7" fill="#c9c9c9"/><circle cx="680.2" cy="860.9" r="13.6" fill="#dddddd"/><path d="M667.20 865.1H693.20A13.6 13.6 0 0 1 667.20 865.1Z" fill="#3b3b3b"/><circle cx="718.0" cy="865.9" r="15.7" fill="#27547a"/><circle cx="718.0" cy="860.9" r="15.7" fill="#c9c9c9"/><circle cx="718.0" cy="860.9" r="13.6" fill="#dddddd"/><path d="M705.00 865.1H731.00A13.6 13.6 0 0 1 705.00 865.1Z" fill="#3b3b3b"/><rect x="594.4" y="850" width="57" height="46.6" rx="3" fill="#27547a"/><rect x="581" y="888" width="13.4" height="7.5" fill="#9a9a9a" opacity=".55"/><rect x="594.4" y="845" width="57" height="43" rx="2" fill="#262626"/><rect x="597.5" y="845.5" width="53" height="37" rx="7" fill="#3b3e41"/><path d="M645.5 845.5V888" stroke="#6a6a6a" stroke-width="0.6"/><rect x="650.5" y="855" width="1.8" height="26" fill="#3b3e41"/><rect x="581" y="843" width="13.4" height="46.5" rx="1.5" fill="#3b3e41"/><rect x="581" y="883" width="13.4" height="6.5" fill="#242424"/><path d="M766 849.7H830M844.2 849.7H918.9" stroke="#eef2f5" stroke-width="1.1"/><text x="794" y="860.6" font-family="Liberation Sans" font-weight="bold" font-size="9.8" fill="#eef2f5" textLength="36" lengthAdjust="spacingAndGlyphs">POWER</text><text x="863.8" y="860.6" font-family="Liberation Sans" font-weight="bold" font-size="9.8" fill="#eef2f5" textLength="55" lengthAdjust="spacingAndGlyphs">ANALOG IN</text><text transform="translate(752.6 880) rotate(-90)" font-family="Liberation Sans" font-size="7.6" fill="#eef2f5">IOREF</text><text transform="translate(765.5 880) rotate(-90)" font-family="Liberation Sans" font-size="7.6" fill="#eef2f5">RESET</text><text transform="translate(778.5 880) rotate(-90)" font-family="Liberation Sans" font-size="7.6" fill="#eef2f5">3.3V</text><text transform="translate(791.4 880) rotate(-90)" font-family="Liberation Sans" font-size="7.6" fill="#eef2f5">5V</text><text transform="translate(804.4 880) rotate(-90)" font-family="Liberation Sans" font-size="7.6" fill="#eef2f5">GND</text><text transform="translate(817.4 880) rotate(-90)" font-family="Liberation Sans" font-size="7.6" fill="#eef2f5">GND</text><text transform="translate(830.3 880) rotate(-90)" font-family="Liberation Sans" font-size="7.6" fill="#eef2f5">Vin</text><text transform="translate(855.3 880) rotate(-90)" font-family="Liberation Sans" font-weight="bold" font-size="9" fill="#eef2f5">A0</text><text transform="translate(868.3 880) rotate(-90)" font-family="Liberation Sans" font-weight="bold" font-size="9" fill="#eef2f5">A1</text><text transform="translate(881.2 880) rotate(-90)" font-family="Liberation Sans" font-weight="bold" font-size="9" fill="#eef2f5">A2</text><text transform="translate(894.2 880) rotate(-90)" font-family="Liberation Sans" font-weight="bold" font-size="9" fill="#eef2f5">A3</text><text transform="translate(907.1 880) rotate(-90)" font-family="Liberation Sans" font-weight="bold" font-size="9" fill="#eef2f5">A4</text><text transform="translate(920.1 880) rotate(-90)" font-family="Liberation Sans" font-weight="bold" font-size="9" fill="#eef2f5">A5</text><path d="M664.2 435L741.8 646.5" stroke="#e3181d" stroke-width="3" stroke-linecap="round"/><path d="M754.3 435V646.5" stroke="#ffdf00" stroke-width="3" stroke-linecap="round"/><path d="M844.3 435V588Q844.3 600 833.5 606L766.5 646.3" stroke="#34b534" stroke-width="3" stroke-linecap="round" fill="none"/><path d="M947.6 563.7V898Q947.6 910.3 935 910.3H826Q813.6 910.3 813.6 898V890.3" stroke="#2d2d2d" stroke-width="2.6" stroke-linecap="round" fill="none"/><path d="M960.4 576.7V906Q960.4 918.8 947.6 918.8H800Q787.4 918.8 787.4 906V890.3" stroke="#e3181d" stroke-width="2.8" stroke-linecap="round" fill="none"/></svg>
<div class="a" style="left:0;top:1020px;width:1920px;height:60px;background:linear-gradient(90deg,#1b1f27,#1e2025 40%,#1e1f22)"></div><svg class="a" style="left:0;top:1020px" width="1920" height="60" viewBox="0 1020 1920 60"><defs><linearGradient id="moon" x1="0" y1="0" x2="0" y2="1"><stop offset="0" stop-color="#ffc13a"/><stop offset="1" stop-color="#f28a10"/></linearGradient><linearGradient id="win" x1="0" y1="0" x2="1" y2="1"><stop offset="0" stop-color="#6fd6ff"/><stop offset="1" stop-color="#1b9cf0"/></linearGradient><linearGradient id="edg" x1="0" y1="0" x2="1" y2="1"><stop offset="0" stop-color="#35c1f1"/><stop offset=".6" stop-color="#1e8fd8"/><stop offset="1" stop-color="#0c59a4"/></linearGradient><linearGradient id="fold" x1="0" y1="0" x2="0" y2="1"><stop offset="0" stop-color="#ffd85a"/><stop offset="1" stop-color="#f2b51c"/></linearGradient></defs><path d="M53 1045C53 1057 43 1064 33 1063C29 1063 27 1061 26.5 1058.5C36 1060 45 1054 45 1042Z" fill="url(#moon)"/><circle cx="48.7" cy="1037.5" r="10" fill="#f5a3ab"/><text x="48.7" y="1042.5" text-anchor="middle" font-family="Liberation Sans" font-size="13" fill="#222">1</text><text x="64.5" y="1044.5" font-family="Liberation Sans" font-size="15" fill="#fff">29°C</text><text x="64.5" y="1064.5" font-family="Liberation Sans" font-size="15" fill="#d8d8d8">Despejado</text><rect x="530" y="1036" width="13.7" height="13.7" rx="1" fill="url(#win)"/><rect x="545.2" y="1036" width="13.7" height="13.7" rx="1" fill="url(#win)"/><rect x="530" y="1051.3" width="13.7" height="13.7" rx="1" fill="url(#win)"/><rect x="545.2" y="1051.3" width="13.7" height="13.7" rx="1" fill="url(#win)"/><rect x="576.5" y="1030.5" width="274" height="39" rx="19.5" fill="#33363c" stroke="#3f4248" stroke-width="1"/><circle cx="599" cy="1049" r="6.8" fill="none" stroke="#e6e6e6" stroke-width="2"/><path d="M604 1054L609 1059" stroke="#e6e6e6" stroke-width="2.2" stroke-linecap="round"/><text x="622" y="1056.5" font-family="Liberation Sans" font-size="17.5" fill="#dcdcdc">Search</text><defs><linearGradient id="bg1" x1="0" y1="0" x2="1" y2="1"><stop offset="0" stop-color="#1b5fe0"/><stop offset="1" stop-color="#2fc8e8"/></linearGradient><linearGradient id="tm" x1="0" y1="0" x2="1" y2="1"><stop offset="0" stop-color="#a27ad6"/><stop offset="1" stop-color="#4f5bd0"/></linearGradient></defs><circle cx="830" cy="1049.5" r="11.8" fill="#1d6fd8"/><circle cx="830" cy="1049.5" r="10.8" fill="#fff"/><path d="M819 1062.5L820.5 1056L825 1060.5Z" fill="#fff"/><path d="M827.3 1043V1055.5L834 1052A3.3 3.3 0 0 0 833 1046.5L830.5 1047.5" stroke="url(#bg1)" stroke-width="2.8" fill="none" stroke-linejoin="round"/><rect x="865.5" y="1043.5" width="22" height="20" rx="2" fill="#707070"/><rect x="874" y="1036" width="22" height="20" rx="2" fill="#e8e8e8"/><rect x="874" y="1043.5" width="13.5" height="12.5" fill="#b8b8b8"/><circle cx="935" cy="1049" r="14" fill="url(#tm)"/><path d="M924 1056L922 1064L932 1062Z" fill="#5358cc"/><rect x="927" y="1044" width="11" height="10" rx="1.5" fill="#fff"/><path d="M939 1047.5L944 1045V1053L939 1050.5Z" fill="#fff"/><defs><linearGradient id="eg1" x1="0" y1="1" x2="1" y2="0"><stop offset="0" stop-color="#0c4f9e"/><stop offset=".55" stop-color="#1a86d6"/><stop offset="1" stop-color="#33bdf0"/></linearGradient><linearGradient id="eg2" x1="0" y1="0" x2="1" y2="1"><stop offset="0" stop-color="#3fc9a8"/><stop offset="1" stop-color="#7ede5a"/></linearGradient></defs><circle cx="991" cy="1050" r="15" fill="url(#eg1)"/><path d="M978.5 1043A14.5 14.5 0 0 1 1005.8 1047.5C1006.5 1053 1002 1056.5 996.5 1056.5C992 1056.5 988.5 1054 990.5 1050C991.5 1048 994 1047.5 994 1046.5C990 1043 982 1042 978.5 1043Z" fill="url(#eg2)"/><path d="M983.5 1049.5C983.5 1045.8 987 1044.8 990.5 1045.5C986 1046.5 985 1050 986.5 1053.5C989 1059 996 1061 1001 1059.5C996 1064 985.5 1062 983.5 1055Z" fill="#0b3f86"/><rect x="1031.5" y="1038" width="28.5" height="27.5" rx="4" fill="#f3f3f3"/><path d="M1038.5 1038V1035.5A2.5 2.5 0 0 1 1041 1033H1050.5A2.5 2.5 0 0 1 1053 1035.5V1038" stroke="#27b4e8" stroke-width="2.2" fill="none"/><rect x="1040" y="1044.5" width="5" height="5" fill="#f25022"/><rect x="1046.5" y="1044.5" width="5" height="5" fill="#7fba00"/><rect x="1040" y="1051" width="5" height="5" fill="#00a4ef"/><rect x="1046.5" y="1051" width="5" height="5" fill="#ffb900"/><defs><linearGradient id="mm" x1="0" y1="0" x2="1" y2="1"><stop offset="0" stop-color="#4b3cf0"/><stop offset="1" stop-color="#3a8ef5"/></linearGradient></defs><rect x="1086" y="1035" width="30" height="30" fill="url(#mm)"/><path d="M1092 1059L1101 1042H1104L1095 1059ZM1099 1059L1108 1042H1111L1102 1059Z" fill="#e6e6ff"/><circle cx="1106" cy="1057" r="1.8" fill="#fff"/><rect x="1141" y="1039.5" width="29.5" height="21" rx="6" fill="#f00"/><path d="M1152.5 1044.5V1055.5L1161.5 1050Z" fill="#fff"/><circle cx="1210.8" cy="1050" r="15" fill="#1877f2"/><path d="M1213 1065V1054H1217L1217.6 1049.5H1213V1046.8C1213 1045.5 1213.5 1044.6 1215.3 1044.6H1217.8V1040.6C1217.3 1040.5 1215.8 1040.4 1214.3 1040.4C1210.8 1040.4 1208.5 1042.5 1208.5 1046.3V1049.5H1204.5V1054H1208.5V1065Z" fill="#fff"/><path d="M1266 1050L1253.01 1042.50A15 15 0 0 1 1278.99 1042.50Z" fill="#ea4335"/><path d="M1266 1050L1278.99 1042.50A15 15 0 0 1 1266.00 1065.00Z" fill="#fbbc04"/><path d="M1266 1050L1266.00 1065.00A15 15 0 0 1 1253.01 1042.50Z" fill="#34a853"/><circle cx="1266" cy="1050" r="6.90" fill="#fff"/><circle cx="1266" cy="1050" r="5.40" fill="#4285f4"/><path d="M1306 1038H1318L1321 1041H1336V1063H1306Z" fill="#e8a91c"/><rect x="1306" y="1043" width="30" height="20" rx="1" fill="url(#fold)"/><rect x="1311" y="1055.5" width="20" height="8" rx="1.5" fill="#1c8ad9"/><path d="M1314 1058.5H1328" stroke="#0d5fa5" stroke-width="1.2"/><rect x="1351" y="1025" width="49.5" height="49" rx="5" fill="#2b2e33"/><path d="M1375.5 1050L1362.51 1042.50A15 15 0 0 1 1388.49 1042.50Z" fill="#ea4335"/><path d="M1375.5 1050L1388.49 1042.50A15 15 0 0 1 1375.50 1065.00Z" fill="#fbbc04"/><path d="M1375.5 1050L1375.50 1065.00A15 15 0 0 1 1362.51 1042.50Z" fill="#34a853"/><circle cx="1375.5" cy="1050" r="6.90" fill="#fff"/><circle cx="1375.5" cy="1050" r="5.40" fill="#4285f4"/><circle cx="1387" cy="1037" r="9.5" fill="#c0b4ac"/><ellipse cx="1387" cy="1038" rx="5" ry="6" fill="#d8a88e"/><path d="M1381 1035C1382 1029 1392 1029 1393 1035Z" fill="#1a1a1a"/><path d="M1378 1044C1380 1040 1385 1042 1385 1046L1383 1047Z" fill="#111"/><rect x="1366" y="1070.5" width="20" height="3" rx="1.5" fill="#5ac8fa"/><path d="M1554 1053L1560.6 1046.5L1567 1053" stroke="#fff" stroke-width="1.6" fill="none"/><path d="M1592.5 1047A8.5 8.5 0 0 1 1608 1042M1609.5 1053A8.5 8.5 0 0 1 1594 1058" stroke="#fff" stroke-width="1.3" fill="none"/><path d="M1606 1038.5L1609.5 1042.5L1604.5 1043.5Z" fill="#fff"/><path d="M1596 1061.5L1592.5 1057.5L1597.5 1056.5Z" fill="#fff"/><circle cx="1606" cy="1055" r="4.8" fill="#ff9a0e"/><path d="M1632 1054.5H1650A4 4 0 0 0 1650 1046.5A6.5 6.5 0 0 0 1638 1044A5 5 0 0 0 1632 1054.5Z" fill="#e0e0e0"/><path d="M1638 1044A6.5 6.5 0 0 1 1650 1046.5H1640Z" fill="#a9a9a9"/><text x="1689" y="1045.5" text-anchor="middle" font-family="Liberation Sans" font-size="15" fill="#fff">ENG</text><text x="1689" y="1065" text-anchor="middle" font-family="Liberation Sans" font-size="15" fill="#fff">US</text><path d="M1726 1046A13 13 0 0 1 1745.5 1046M1729 1049.5A8.5 8.5 0 0 1 1742.5 1049.5M1732.5 1053A4 4 0 0 1 1739 1053" stroke="#fff" stroke-width="1.7" fill="none" stroke-linecap="round"/><circle cx="1735.7" cy="1056" r="1.6" fill="#fff"/><path d="M1757 1046.5H1761L1766 1042V1058L1761 1053.5H1757Z" stroke="#fff" stroke-width="1.4" fill="none" stroke-linejoin="round"/><path d="M1769 1046.5A4.5 4.5 0 0 1 1769 1053.5M1772 1043.5A8.5 8.5 0 0 1 1772 1056.5M1775 1040.5A12.5 12.5 0 0 1 1775 1059.5" stroke="#fff" stroke-width="1.4" fill="none"/><rect x="1786.5" y="1044.5" width="17" height="11" rx="2.5" stroke="#fff" stroke-width="1.5" fill="none"/><rect x="1788.5" y="1046.5" width="13" height="7" rx="1" fill="#fff"/><rect x="1804" y="1047.5" width="2" height="5" rx="1" fill="#fff"/><text x="1895" y="1045" text-anchor="end" font-family="Liberation Sans" font-size="15" fill="#fff">9:44 PM</text><text x="1895" y="1064.5" text-anchor="end" font-family="Liberation Sans" font-size="15" fill="#fff">9/18/2023</text></svg>
</body></html>
